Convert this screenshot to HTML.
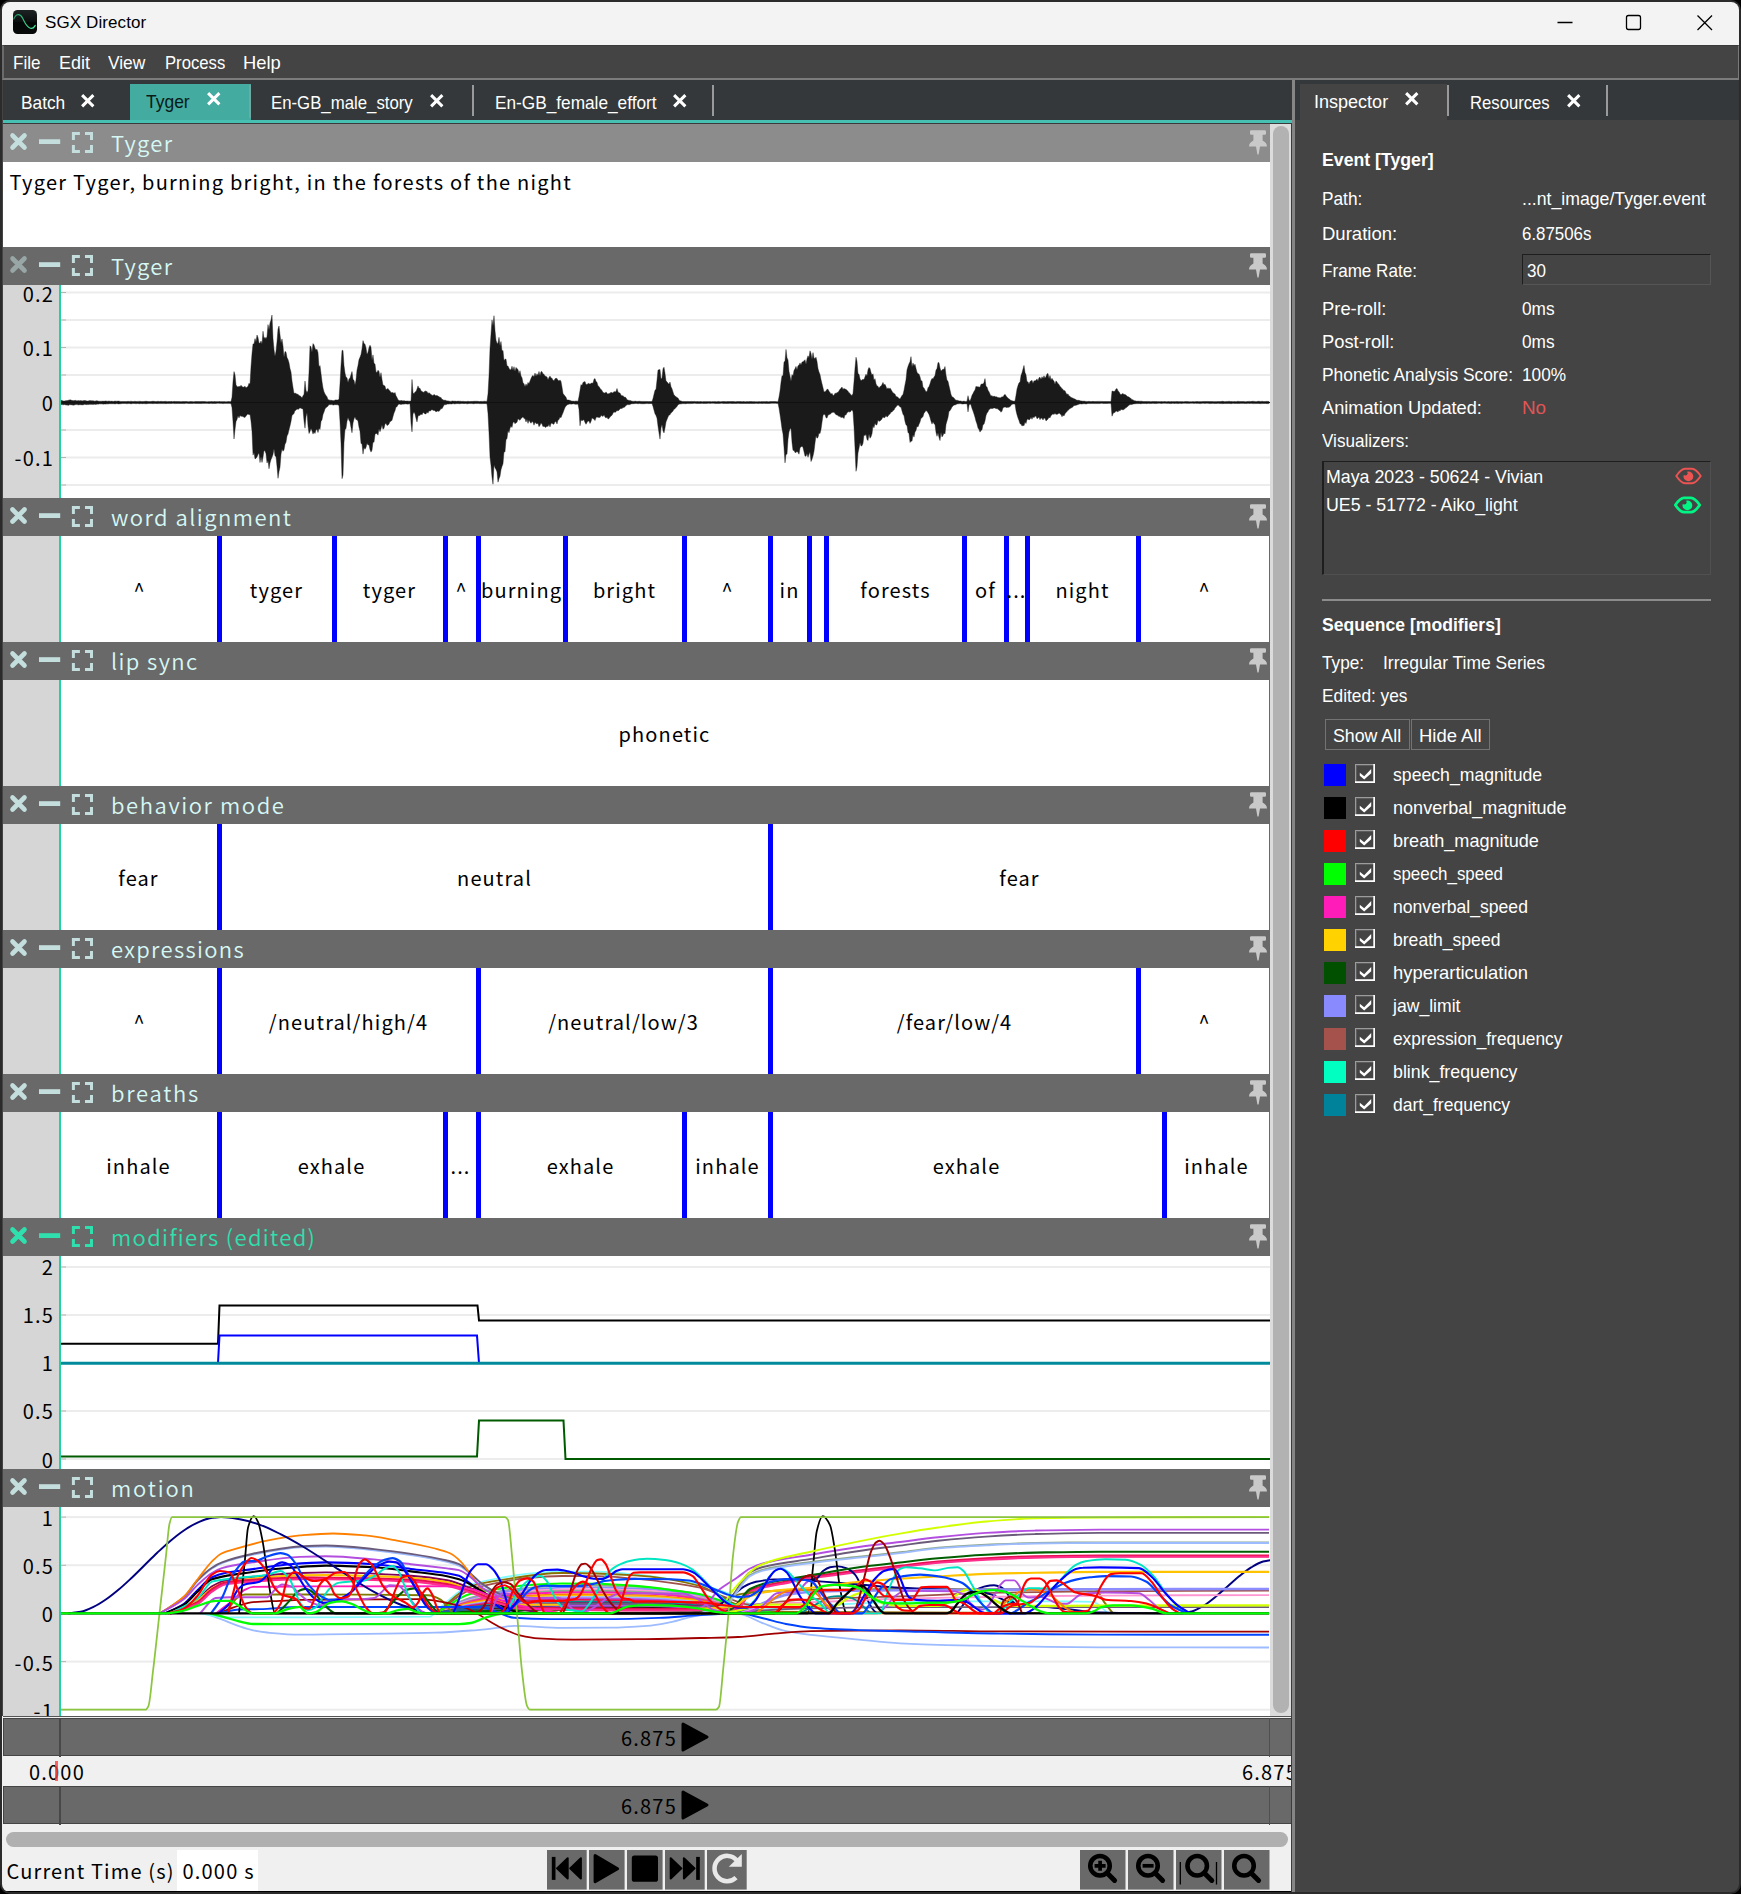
<!DOCTYPE html><html><head><meta charset="utf-8"><title>SGX Director</title><style>
*{box-sizing:border-box;margin:0;padding:0}
html,body{width:1741px;height:1894px;background:#000;overflow:hidden}
body{position:relative;font-family:"Liberation Sans", "DejaVu Sans", sans-serif;}
.abs{position:absolute}
#frame{position:absolute;left:0;top:0;width:1741px;height:1894px;background:#2b2b2b;border-radius:10px;overflow:hidden}
#win{position:absolute;left:2px;top:2px;width:1737px;height:1890px;background:#444444;border-radius:8px;overflow:hidden}
.pf{font-family:"Noto Sans CJK JP", "Noto Sans CJK SC", "DejaVu Sans", sans-serif}
.hdr{position:absolute;left:1px;width:1267px;height:38px;background:#696969;color:#c9ecea}
.hdr .t{position:absolute;left:108px;top:0;line-height:38px;font-family:"Noto Sans CJK JP", "Noto Sans CJK SC", "DejaVu Sans", sans-serif;font-size:23px;letter-spacing:1.1px;white-space:nowrap}
.cont{position:absolute;left:1px;width:1267px;background:#fff;overflow:hidden}
.marg{position:absolute;left:0;top:0;bottom:0;width:56px;background:#d6d6d6}
.gl{position:absolute;left:56px;top:0;bottom:0;width:2px;background:#1ccf9c}
.yl{position:absolute;right:1219px;font-family:"Noto Sans CJK JP", "Noto Sans CJK SC", "DejaVu Sans", sans-serif;font-size:20px;letter-spacing:1px;color:#000;line-height:20px;white-space:nowrap;text-align:right}
.seg{position:absolute;top:0;bottom:0;width:4px;background:#0000ff}
.sl{position:absolute;font-family:"Noto Sans CJK JP", "Noto Sans CJK SC", "DejaVu Sans", sans-serif;font-size:20px;letter-spacing:1.1px;color:#000;line-height:28px;white-space:nowrap;transform:translateX(-50%);top:40px}
.lab{position:absolute;color:#fff;font-size:16px;white-space:nowrap;line-height:20px;letter-spacing:0.25px}
</style></head><body>
<div id="frame"><div id="win">
<div class="abs" style="left:0;top:0;width:1737px;height:43px;background:#f3f3f3"></div>
<div class="abs" style="left:43px;top:9.3px;font-size:17px;letter-spacing:0.1px;line-height:24px;color:#000;white-space:nowrap">SGX Director</div>
<svg class="abs" style="left:11px;top:8px" width="24" height="24" viewBox="0 0 24 24"><defs><linearGradient id="ig" x1="0" y1="0" x2="0" y2="1"><stop offset="0" stop-color="#1c2222"/><stop offset="0.5" stop-color="#0c0e0e"/><stop offset="0.52" stop-color="#050606"/><stop offset="1" stop-color="#080909"/></linearGradient></defs><rect x="0" y="0" width="24" height="24" rx="4.5" fill="url(#ig)"/><linearGradient id="sg" x1="0" y1="0" x2="1" y2="0"><stop offset="0" stop-color="#238a5c"/><stop offset="0.5" stop-color="#38c886"/><stop offset="1" stop-color="#4cf5a4"/></linearGradient><path d="M0.8 9 C2.8 3.8 7 3 9.5 8 S14 17.8 17.5 18.3 S21 17.2 22.2 15.4" fill="none" stroke="url(#sg)" stroke-width="1.15" stroke-linecap="round"/></svg>
<svg class="abs" style="left:1548px;top:8px" width="180" height="26" viewBox="0 0 180 26" fill="none" stroke="#000" stroke-width="1.3"><path d="M7.5 12.5H22.5"/><rect x="76.5" y="5.5" width="14" height="14" rx="2"/><path d="M147.5 5.5L162 20M162 5.5L147.5 20"/></svg>
<div class="abs" style="left:0;top:43px;width:1737px;height:35px;background:#444;border:1px solid #7a7a7a;border-bottom:2px solid #7c7c7c;border-top:1px solid #3a3a3a;border-left:2px solid #6a6a6a"></div>
<div class="lab" style="left:11px;top:51.1px;font-size:18.5px;letter-spacing:0;transform:scaleX(0.9221);transform-origin:0 50%">File</div>
<div class="lab" style="left:56.5px;top:51.1px;font-size:18.5px;letter-spacing:0;transform:scaleX(0.9695);transform-origin:0 50%">Edit</div>
<div class="lab" style="left:105.5px;top:51.1px;font-size:18.5px;letter-spacing:0;transform:scaleX(0.938);transform-origin:0 50%">View</div>
<div class="lab" style="left:162.5px;top:51.1px;font-size:18.5px;letter-spacing:0;transform:scaleX(0.9012);transform-origin:0 50%">Process</div>
<div class="lab" style="left:240.5px;top:51.1px;font-size:18.5px;letter-spacing:0;transform:scaleX(0.993);transform-origin:0 50%">Help</div>
<div class="abs" style="left:1px;top:78px;width:1289px;height:40px;background:#34383a"></div>
<div class="abs" style="left:128px;top:82px;width:121px;height:37px;background:#43aba0"></div>
<div class="abs" style="left:1px;top:118px;width:1289px;height:3px;background:#45c0b3"></div>
<div class="lab" style="left:19px;top:90.9px;font-size:18.5px;letter-spacing:0;transform:scaleX(0.9344);transform-origin:0 50%;color:#fff">Batch</div>
<svg class="abs" style="left:79.3px;top:92.3px" width="13.5" height="13.5" viewBox="0 0 12 12"><path d="M1 1L11 11M11 1L1 11" stroke="#fff" stroke-width="2.7" fill="none"/></svg>
<div class="lab" style="left:144px;top:89.9px;font-size:18.5px;letter-spacing:0;transform:scaleX(0.9434);transform-origin:0 50%;color:#0a1a18">Tyger</div>
<svg class="abs" style="left:205.3px;top:90.3px" width="13.5" height="13.5" viewBox="0 0 12 12"><path d="M1 1L11 11M11 1L1 11" stroke="#fff" stroke-width="2.7" fill="none"/></svg>
<div class="lab" style="left:269px;top:90.9px;font-size:18.5px;letter-spacing:0;transform:scaleX(0.9069);transform-origin:0 50%;color:#fff">En-GB_male_story</div>
<svg class="abs" style="left:428.3px;top:92.3px" width="13.5" height="13.5" viewBox="0 0 12 12"><path d="M1 1L11 11M11 1L1 11" stroke="#fff" stroke-width="2.7" fill="none"/></svg>
<div class="lab" style="left:493px;top:90.9px;font-size:18.5px;letter-spacing:0;transform:scaleX(0.9315);transform-origin:0 50%;color:#fff">En-GB_female_effort</div>
<svg class="abs" style="left:671.3px;top:92.3px" width="13.5" height="13.5" viewBox="0 0 12 12"><path d="M1 1L11 11M11 1L1 11" stroke="#fff" stroke-width="2.7" fill="none"/></svg>
<div class="abs" style="left:470px;top:83px;width:2px;height:31px;background:#9a9a9a"></div>
<div class="abs" style="left:710px;top:83px;width:2px;height:31px;background:#9a9a9a"></div>
<div class="abs" style="left:247px;top:83px;width:2px;height:33px;background:#6fa9a3"></div>
<div class="abs" style="left:1290px;top:78px;width:3px;height:1812px;background:#858585"></div>
<div class="abs" style="left:1293px;top:78px;width:444px;height:40px;background:#34383a"></div>
<div class="abs" style="left:1298px;top:82px;width:147px;height:37px;background:#444"></div>
<div class="lab" style="left:1312px;top:89.9px;font-size:18.5px;letter-spacing:0;transform:scaleX(0.9742);transform-origin:0 50%">Inspector</div>
<svg class="abs" style="left:1403.3px;top:90.3px" width="13.5" height="13.5" viewBox="0 0 12 12"><path d="M1 1L11 11M11 1L1 11" stroke="#fff" stroke-width="2.7" fill="none"/></svg>
<div class="lab" style="left:1468px;top:90.9px;font-size:18.5px;letter-spacing:0;transform:scaleX(0.9005);transform-origin:0 50%">Resources</div>
<svg class="abs" style="left:1565.3px;top:92.3px" width="13.5" height="13.5" viewBox="0 0 12 12"><path d="M1 1L11 11M11 1L1 11" stroke="#fff" stroke-width="2.7" fill="none"/></svg>
<div class="abs" style="left:1445px;top:83px;width:2px;height:31px;background:#9a9a9a"></div>
<div class="abs" style="left:1604px;top:83px;width:2px;height:31px;background:#9a9a9a"></div>
<div class="lab" style="left:1320px;top:148.25px;font-size:18.5px;letter-spacing:0;transform:scaleX(0.9561);transform-origin:0 50%;font-weight:bold">Event [Tyger]</div>
<div class="lab" style="left:1320px;top:187.25px;font-size:18.5px;letter-spacing:0;transform:scaleX(0.9329);transform-origin:0 50%;">Path:</div>
<div class="lab" style="left:1520px;top:187.25px;font-size:18.5px;letter-spacing:0;transform:scaleX(0.9552);transform-origin:0 50%;">...nt_image/Tyger.event</div>
<div class="lab" style="left:1320px;top:222.25px;font-size:18.5px;letter-spacing:0;transform:scaleX(1.001);transform-origin:0 50%;">Duration:</div>
<div class="lab" style="left:1520px;top:222.25px;font-size:18.5px;letter-spacing:0;transform:scaleX(0.9121);transform-origin:0 50%;">6.87506s</div>
<div class="lab" style="left:1320px;top:259.25px;font-size:18.5px;letter-spacing:0;transform:scaleX(0.9238);transform-origin:0 50%;">Frame Rate:</div>
<div class="lab" style="left:1320px;top:297.25px;font-size:18.5px;letter-spacing:0;transform:scaleX(0.9933);transform-origin:0 50%;">Pre-roll:</div>
<div class="lab" style="left:1520px;top:297.25px;font-size:18.5px;letter-spacing:0;transform:scaleX(0.9337);transform-origin:0 50%;">0ms</div>
<div class="lab" style="left:1320px;top:330.25px;font-size:18.5px;letter-spacing:0;transform:scaleX(0.9908);transform-origin:0 50%;">Post-roll:</div>
<div class="lab" style="left:1520px;top:330.25px;font-size:18.5px;letter-spacing:0;transform:scaleX(0.9337);transform-origin:0 50%;">0ms</div>
<div class="lab" style="left:1320px;top:363.25px;font-size:18.5px;letter-spacing:0;transform:scaleX(0.9383);transform-origin:0 50%;">Phonetic Analysis Score:</div>
<div class="lab" style="left:1520px;top:363.25px;font-size:18.5px;letter-spacing:0;transform:scaleX(0.931);transform-origin:0 50%;">100%</div>
<div class="lab" style="left:1320px;top:396.25px;font-size:18.5px;letter-spacing:0;transform:scaleX(0.9842);transform-origin:0 50%;">Animation Updated:</div>
<div class="lab" style="left:1520px;top:396.25px;font-size:18.5px;letter-spacing:0;transform:scaleX(1.0197);transform-origin:0 50%;color:#e05555">No</div>
<div class="lab" style="left:1320px;top:429.25px;font-size:18.5px;letter-spacing:0;transform:scaleX(0.9236);transform-origin:0 50%;">Visualizers:</div>
<div class="abs" style="left:1520px;top:252px;width:189px;height:31px;background:#444;border:1px solid #555;border-top:1px solid #1e1e1e;border-left:1px solid #1e1e1e"></div>
<div class="lab" style="left:1525px;top:259.25px;font-size:18.5px;letter-spacing:0;transform:scaleX(0.9217);transform-origin:0 50%;">30</div>
<div class="abs" style="left:1320px;top:459px;width:389px;height:114px;background:#444;border:1px solid #505050;border-top:1px solid #1e1e1e;border-left:2px solid #1e1e1e"></div>
<div class="lab" style="left:1324px;top:465.25px;font-size:18.5px;letter-spacing:0;transform:scaleX(0.9616);transform-origin:0 50%;">Maya 2023 - 50624 - Vivian</div>
<div class="lab" style="left:1324px;top:493.25px;font-size:18.5px;letter-spacing:0;transform:scaleX(0.9604);transform-origin:0 50%;">UE5 - 51772 - Aiko_light</div>
<svg class="abs" style="left:1673.2px;top:465.0px" width="27" height="18" viewBox="0 0 27 18"><path d="M1.3 9C3 6.5 6.5 1.8 10 1.8H17C20.5 1.8 24 6.5 25.7 9C24 11.5 20.5 16.2 17 16.2H10C6.5 16.2 3 11.5 1.3 9Z" fill="none" stroke="#ec5353" stroke-width="2.0" stroke-linejoin="round"/><circle cx="13.4" cy="9.4" r="4.9" fill="#ec5353"/><circle cx="10.2" cy="6.2" r="2.4" fill="#444"/></svg>
<svg class="abs" style="left:1672.2px;top:494.0px" width="27" height="18" viewBox="0 0 27 18"><path d="M1.3 9C3 6.5 6.5 1.8 10 1.8H17C20.5 1.8 24 6.5 25.7 9C24 11.5 20.5 16.2 17 16.2H10C6.5 16.2 3 11.5 1.3 9Z" fill="none" stroke="#00f584" stroke-width="2.7" stroke-linejoin="round"/><circle cx="13.4" cy="9.4" r="4.9" fill="#00f584"/><circle cx="10.2" cy="6.2" r="2.4" fill="#444"/></svg>
<div class="abs" style="left:1320px;top:597px;width:389px;height:2px;background:#8c8c8c"></div>
<div class="lab" style="left:1320px;top:613.25px;font-size:18.5px;letter-spacing:0;transform:scaleX(0.9502);transform-origin:0 50%;font-weight:bold">Sequence [modifiers]</div>
<div class="lab" style="left:1320px;top:651.25px;font-size:18.5px;letter-spacing:0;transform:scaleX(0.9318);transform-origin:0 50%;">Type:</div>
<div class="lab" style="left:1381px;top:651.25px;font-size:18.5px;letter-spacing:0;transform:scaleX(0.9439);transform-origin:0 50%;">Irregular Time Series</div>
<div class="lab" style="left:1320px;top:684.25px;font-size:18.5px;letter-spacing:0;transform:scaleX(0.9338);transform-origin:0 50%;">Edited: yes</div>
<div class="abs" style="left:1323px;top:717px;width:85px;height:31px;border:1.5px solid #737373"></div>
<div class="abs" style="left:1409px;top:717px;width:79px;height:31px;border:1.5px solid #737373"></div>
<div class="lab" style="left:1331px;top:724.25px;font-size:18.5px;letter-spacing:0;transform:scaleX(0.9596);transform-origin:0 50%;">Show All</div>
<div class="lab" style="left:1417px;top:724.25px;font-size:18.5px;letter-spacing:0;transform:scaleX(0.9978);transform-origin:0 50%;">Hide All</div>
<div class="abs" style="left:1322px;top:762px;width:22px;height:22px;background:#0000ff"></div>
<svg class="abs" style="left:1352.9px;top:761.9px" width="20.3" height="19.3" viewBox="0 0 20.3 19.3"><rect width="20.3" height="19.3" fill="#444"/><path d="M0 0H20.3V1H1V19.3H0Z" fill="#9c9c9c"/><path d="M1 1H18.3V2H2V17.3H1Z" fill="#5c5c5c"/><path d="M0 19.3V17.3H18.3V0H20.3V19.3Z" fill="#fff"/><path d="M4.8 8.7L9.2 12.3L16.2 5.1V9.2L9.2 15.4L4.8 11.8Z" fill="#fff"/></svg>
<div class="lab" style="left:1391px;top:763.25px;font-size:18.5px;letter-spacing:0;transform:scaleX(0.9535);transform-origin:0 50%;">speech_magnitude</div>
<div class="abs" style="left:1322px;top:795px;width:22px;height:22px;background:#000000"></div>
<svg class="abs" style="left:1352.9px;top:794.9px" width="20.3" height="19.3" viewBox="0 0 20.3 19.3"><rect width="20.3" height="19.3" fill="#444"/><path d="M0 0H20.3V1H1V19.3H0Z" fill="#9c9c9c"/><path d="M1 1H18.3V2H2V17.3H1Z" fill="#5c5c5c"/><path d="M0 19.3V17.3H18.3V0H20.3V19.3Z" fill="#fff"/><path d="M4.8 8.7L9.2 12.3L16.2 5.1V9.2L9.2 15.4L4.8 11.8Z" fill="#fff"/></svg>
<div class="lab" style="left:1391px;top:796.25px;font-size:18.5px;letter-spacing:0;transform:scaleX(0.976);transform-origin:0 50%;">nonverbal_magnitude</div>
<div class="abs" style="left:1322px;top:828px;width:22px;height:22px;background:#ff0000"></div>
<svg class="abs" style="left:1352.9px;top:827.9px" width="20.3" height="19.3" viewBox="0 0 20.3 19.3"><rect width="20.3" height="19.3" fill="#444"/><path d="M0 0H20.3V1H1V19.3H0Z" fill="#9c9c9c"/><path d="M1 1H18.3V2H2V17.3H1Z" fill="#5c5c5c"/><path d="M0 19.3V17.3H18.3V0H20.3V19.3Z" fill="#fff"/><path d="M4.8 8.7L9.2 12.3L16.2 5.1V9.2L9.2 15.4L4.8 11.8Z" fill="#fff"/></svg>
<div class="lab" style="left:1391px;top:829.25px;font-size:18.5px;letter-spacing:0;transform:scaleX(0.978);transform-origin:0 50%;">breath_magnitude</div>
<div class="abs" style="left:1322px;top:861px;width:22px;height:22px;background:#00ff00"></div>
<svg class="abs" style="left:1352.9px;top:860.9px" width="20.3" height="19.3" viewBox="0 0 20.3 19.3"><rect width="20.3" height="19.3" fill="#444"/><path d="M0 0H20.3V1H1V19.3H0Z" fill="#9c9c9c"/><path d="M1 1H18.3V2H2V17.3H1Z" fill="#5c5c5c"/><path d="M0 19.3V17.3H18.3V0H20.3V19.3Z" fill="#fff"/><path d="M4.8 8.7L9.2 12.3L16.2 5.1V9.2L9.2 15.4L4.8 11.8Z" fill="#fff"/></svg>
<div class="lab" style="left:1391px;top:862.25px;font-size:18.5px;letter-spacing:0;transform:scaleX(0.9137);transform-origin:0 50%;">speech_speed</div>
<div class="abs" style="left:1322px;top:894px;width:22px;height:22px;background:#ff1cb8"></div>
<svg class="abs" style="left:1352.9px;top:893.9px" width="20.3" height="19.3" viewBox="0 0 20.3 19.3"><rect width="20.3" height="19.3" fill="#444"/><path d="M0 0H20.3V1H1V19.3H0Z" fill="#9c9c9c"/><path d="M1 1H18.3V2H2V17.3H1Z" fill="#5c5c5c"/><path d="M0 19.3V17.3H18.3V0H20.3V19.3Z" fill="#fff"/><path d="M4.8 8.7L9.2 12.3L16.2 5.1V9.2L9.2 15.4L4.8 11.8Z" fill="#fff"/></svg>
<div class="lab" style="left:1391px;top:895.25px;font-size:18.5px;letter-spacing:0;transform:scaleX(0.9505);transform-origin:0 50%;">nonverbal_speed</div>
<div class="abs" style="left:1322px;top:927px;width:22px;height:22px;background:#ffd200"></div>
<svg class="abs" style="left:1352.9px;top:926.9px" width="20.3" height="19.3" viewBox="0 0 20.3 19.3"><rect width="20.3" height="19.3" fill="#444"/><path d="M0 0H20.3V1H1V19.3H0Z" fill="#9c9c9c"/><path d="M1 1H18.3V2H2V17.3H1Z" fill="#5c5c5c"/><path d="M0 19.3V17.3H18.3V0H20.3V19.3Z" fill="#fff"/><path d="M4.8 8.7L9.2 12.3L16.2 5.1V9.2L9.2 15.4L4.8 11.8Z" fill="#fff"/></svg>
<div class="lab" style="left:1391px;top:928.25px;font-size:18.5px;letter-spacing:0;transform:scaleX(0.9494);transform-origin:0 50%;">breath_speed</div>
<div class="abs" style="left:1322px;top:960px;width:22px;height:22px;background:#005000"></div>
<svg class="abs" style="left:1352.9px;top:959.9px" width="20.3" height="19.3" viewBox="0 0 20.3 19.3"><rect width="20.3" height="19.3" fill="#444"/><path d="M0 0H20.3V1H1V19.3H0Z" fill="#9c9c9c"/><path d="M1 1H18.3V2H2V17.3H1Z" fill="#5c5c5c"/><path d="M0 19.3V17.3H18.3V0H20.3V19.3Z" fill="#fff"/><path d="M4.8 8.7L9.2 12.3L16.2 5.1V9.2L9.2 15.4L4.8 11.8Z" fill="#fff"/></svg>
<div class="lab" style="left:1391px;top:961.25px;font-size:18.5px;letter-spacing:0;transform:scaleX(0.9944);transform-origin:0 50%;">hyperarticulation</div>
<div class="abs" style="left:1322px;top:993px;width:22px;height:22px;background:#8a8aff"></div>
<svg class="abs" style="left:1352.9px;top:992.9px" width="20.3" height="19.3" viewBox="0 0 20.3 19.3"><rect width="20.3" height="19.3" fill="#444"/><path d="M0 0H20.3V1H1V19.3H0Z" fill="#9c9c9c"/><path d="M1 1H18.3V2H2V17.3H1Z" fill="#5c5c5c"/><path d="M0 19.3V17.3H18.3V0H20.3V19.3Z" fill="#fff"/><path d="M4.8 8.7L9.2 12.3L16.2 5.1V9.2L9.2 15.4L4.8 11.8Z" fill="#fff"/></svg>
<div class="lab" style="left:1391px;top:994.25px;font-size:18.5px;letter-spacing:0;transform:scaleX(0.9514);transform-origin:0 50%;">jaw_limit</div>
<div class="abs" style="left:1322px;top:1026px;width:22px;height:22px;background:#a5524c"></div>
<svg class="abs" style="left:1352.9px;top:1025.9px" width="20.3" height="19.3" viewBox="0 0 20.3 19.3"><rect width="20.3" height="19.3" fill="#444"/><path d="M0 0H20.3V1H1V19.3H0Z" fill="#9c9c9c"/><path d="M1 1H18.3V2H2V17.3H1Z" fill="#5c5c5c"/><path d="M0 19.3V17.3H18.3V0H20.3V19.3Z" fill="#fff"/><path d="M4.8 8.7L9.2 12.3L16.2 5.1V9.2L9.2 15.4L4.8 11.8Z" fill="#fff"/></svg>
<div class="lab" style="left:1391px;top:1027.25px;font-size:18.5px;letter-spacing:0;transform:scaleX(0.9354);transform-origin:0 50%;">expression_frequency</div>
<div class="abs" style="left:1322px;top:1059px;width:22px;height:22px;background:#00ffc0"></div>
<svg class="abs" style="left:1352.9px;top:1058.9px" width="20.3" height="19.3" viewBox="0 0 20.3 19.3"><rect width="20.3" height="19.3" fill="#444"/><path d="M0 0H20.3V1H1V19.3H0Z" fill="#9c9c9c"/><path d="M1 1H18.3V2H2V17.3H1Z" fill="#5c5c5c"/><path d="M0 19.3V17.3H18.3V0H20.3V19.3Z" fill="#fff"/><path d="M4.8 8.7L9.2 12.3L16.2 5.1V9.2L9.2 15.4L4.8 11.8Z" fill="#fff"/></svg>
<div class="lab" style="left:1391px;top:1060.25px;font-size:18.5px;letter-spacing:0;transform:scaleX(0.9603);transform-origin:0 50%;">blink_frequency</div>
<div class="abs" style="left:1322px;top:1092px;width:22px;height:22px;background:#00829a"></div>
<svg class="abs" style="left:1352.9px;top:1091.9px" width="20.3" height="19.3" viewBox="0 0 20.3 19.3"><rect width="20.3" height="19.3" fill="#444"/><path d="M0 0H20.3V1H1V19.3H0Z" fill="#9c9c9c"/><path d="M1 1H18.3V2H2V17.3H1Z" fill="#5c5c5c"/><path d="M0 19.3V17.3H18.3V0H20.3V19.3Z" fill="#fff"/><path d="M4.8 8.7L9.2 12.3L16.2 5.1V9.2L9.2 15.4L4.8 11.8Z" fill="#fff"/></svg>
<div class="lab" style="left:1391px;top:1093.25px;font-size:18.5px;letter-spacing:0;transform:scaleX(0.948);transform-origin:0 50%;">dart_frequency</div>
<div class="abs" style="left:1px;top:122px;width:1289px;height:1594px;background:#f0f0f0"></div>
<div class="abs" style="left:1268px;top:122px;width:21px;height:1592px;background:#dcdcdc"></div>
<div class="abs" style="left:1271px;top:124px;width:16px;height:1587px;background:#b2b2b2;border-radius:8px"></div>
<div class="abs" style="left:1px;top:122px;width:1267px;height:38px;background:#8c8c8c"></div>
<svg class="abs" style="left:1px;top:122px" width="100" height="38" viewBox="0 0 100 38" fill="none" stroke-linecap="round"><path d="M9.5 11.5L21.5 23.5M21.5 11.5L9.5 23.5" stroke="#c3dedd" stroke-width="4.6"/><path d="M36 17.6H57.2" stroke="#c3dedd" stroke-width="4.8" stroke-linecap="butt"/><path d="M70.4 16V9.5H76.9M82 9.5H88.5V16M88.5 21V27.5H82M76.9 27.5H70.4V21" stroke="#c3dedd" stroke-width="3" stroke-linecap="butt"/></svg>
<div class="abs pf" style="left:109px;top:122px;height:38px;line-height:37px;font-size:22px;font-weight:350;letter-spacing:1.295px;color:#d6f8f5;white-space:nowrap">Tyger</div>
<svg class="abs" style="left:1245px;top:128px" width="22" height="26" viewBox="0 0 22 26"><path d="M4.2 0.3H17.8Q19 0.3 19 1.5V3.6Q19 4.8 17.8 4.8H15.6V10.4C18.2 11.8 20 13.6 20 16.5H13L11.6 24.5H10.4L9 16.5H2C2 13.6 3.8 11.8 6.4 10.4V4.8H4.2Q3 4.8 3 3.6V1.5Q3 0.3 4.2 0.3Z" fill="#c9c9c9"/></svg>
<div class="abs" style="left:1px;top:160px;width:1267px;height:85px;background:#fff"></div>
<div class="abs pf" style="left:7.6px;top:166px;font-size:20px;letter-spacing:1.25px;line-height:28px;color:#000;white-space:nowrap">Tyger Tyger, burning bright, in the forests of the night</div>
<div class="abs" style="left:1px;top:245px;width:1267px;height:38px;background:#696969"></div>
<svg class="abs" style="left:1px;top:245px" width="100" height="38" viewBox="0 0 100 38" fill="none" stroke-linecap="round"><path d="M9.5 11.5L21.5 23.5M21.5 11.5L9.5 23.5" stroke="#98a6a6" stroke-width="4.6"/><path d="M36 17.6H57.2" stroke="#c3dedd" stroke-width="4.8" stroke-linecap="butt"/><path d="M70.4 16V9.5H76.9M82 9.5H88.5V16M88.5 21V27.5H82M76.9 27.5H70.4V21" stroke="#c3dedd" stroke-width="3" stroke-linecap="butt"/></svg>
<div class="abs pf" style="left:109px;top:245px;height:38px;line-height:37px;font-size:22px;font-weight:350;letter-spacing:1.295px;color:#d6f8f5;white-space:nowrap">Tyger</div>
<svg class="abs" style="left:1245px;top:251px" width="22" height="26" viewBox="0 0 22 26"><path d="M4.2 0.3H17.8Q19 0.3 19 1.5V3.6Q19 4.8 17.8 4.8H15.6V10.4C18.2 11.8 20 13.6 20 16.5H13L11.6 24.5H10.4L9 16.5H2C2 13.6 3.8 11.8 6.4 10.4V4.8H4.2Q3 4.8 3 3.6V1.5Q3 0.3 4.2 0.3Z" fill="#c9c9c9"/></svg>
<div class="abs" style="left:1px;top:283px;width:1267px;height:213px;background:#fff"></div>
<div class="abs" style="left:1px;top:283px;width:56px;height:213px;background:#d6d6d6"></div>
<div class="abs" style="left:57.2px;top:283px;width:1.7px;height:213px;background:#20d2a0"></div>
<svg class="abs" style="left:59px;top:283px" width="1209" height="213" viewBox="0 0 1209 213"><rect x="0" y="199.0" width="1209" height="2" fill="#ececec"/><rect x="0" y="199.5" width="5" height="1" fill="#b4b4b4"/><rect x="0" y="171.5" width="1209" height="2" fill="#ececec"/><rect x="0" y="172.0" width="5" height="1" fill="#b4b4b4"/><rect x="0" y="144.0" width="1209" height="2" fill="#ececec"/><rect x="0" y="144.5" width="5" height="1" fill="#b4b4b4"/><rect x="0" y="116.5" width="1209" height="2" fill="#ececec"/><rect x="0" y="117.0" width="5" height="1" fill="#b4b4b4"/><rect x="0" y="89.0" width="1209" height="2" fill="#ececec"/><rect x="0" y="89.5" width="5" height="1" fill="#b4b4b4"/><rect x="0" y="61.5" width="1209" height="2" fill="#ececec"/><rect x="0" y="62.0" width="5" height="1" fill="#b4b4b4"/><rect x="0" y="34.0" width="1209" height="2" fill="#ececec"/><rect x="0" y="34.5" width="5" height="1" fill="#b4b4b4"/><rect x="0" y="6.5" width="1209" height="2" fill="#ececec"/><rect x="0" y="7.0" width="5" height="1" fill="#b4b4b4"/><path d="M-1.0 115.4L0.0 115.2L1.0 115.4L2.0 115.9L3.0 116.0L4.0 115.9L5.0 115.6L6.0 115.7L7.0 115.3L8.0 115.2L9.0 114.8L10.0 115.0L11.0 115.6L12.0 115.5L13.0 115.7L14.0 115.3L15.0 115.4L16.0 115.9L17.0 115.4L18.0 115.7L19.0 115.7L20.0 115.4L21.0 115.9L22.0 115.7L23.0 115.6L24.0 115.4L25.0 115.8L26.0 116.0L27.0 116.1L28.0 115.7L29.0 115.6L30.0 115.7L31.0 115.8L32.0 115.7L33.0 115.9L34.0 116.2L35.0 115.8L36.0 115.8L37.0 116.0L38.0 116.3L39.0 116.2L40.0 116.3L41.0 116.2L42.0 116.1L43.0 116.3L44.0 116.0L45.0 115.9L46.0 116.2L47.0 116.2L48.0 115.9L49.0 116.3L50.0 116.3L51.0 116.1L52.0 116.5L53.0 116.3L54.0 116.0L55.0 116.2L56.0 116.2L57.0 116.1L58.0 116.1L59.0 116.4L60.0 116.5L61.0 116.5L62.0 116.5L63.0 116.4L64.0 116.6L65.0 116.5L66.0 116.6L67.0 116.3L68.0 116.5L69.0 116.4L70.0 116.2L71.0 116.4L72.0 116.6L73.0 116.4L74.0 116.2L75.0 116.6L76.0 116.4L77.0 116.4L78.0 116.4L79.0 116.2L80.0 116.5L81.0 116.6L82.0 116.4L83.0 116.5L84.0 116.3L85.0 116.3L86.0 116.3L87.0 116.6L88.0 116.5L89.0 116.6L90.0 116.6L91.0 116.3L92.0 116.3L93.0 116.3L94.0 116.6L95.0 116.6L96.0 116.4L97.0 116.3L98.0 116.4L99.0 116.6L100.0 116.3L101.0 116.4L102.0 116.6L103.0 116.6L104.0 116.3L105.0 116.5L106.0 116.4L107.0 116.7L108.0 116.3L109.0 116.7L110.0 116.3L111.0 116.6L112.0 116.7L113.0 116.3L114.0 116.5L115.0 116.6L116.0 116.4L117.0 116.6L118.0 116.6L119.0 116.6L120.0 116.7L121.0 116.6L122.0 116.5L123.0 116.6L124.0 116.6L125.0 116.5L126.0 116.6L127.0 116.7L128.0 116.7L129.0 116.5L130.0 116.6L131.0 116.6L132.0 116.7L133.0 116.7L134.0 116.5L135.0 116.6L136.0 116.4L137.0 116.6L138.0 116.6L139.0 116.6L140.0 116.6L141.0 116.5L142.0 116.4L143.0 116.6L144.0 116.5L145.0 116.7L146.0 116.8L147.0 116.8L148.0 116.5L149.0 116.7L150.0 116.5L151.0 116.5L152.0 116.7L153.0 116.6L154.0 116.4L155.0 116.7L156.0 116.6L157.0 116.7L158.0 116.5L159.0 116.6L160.0 116.8L161.0 116.6L162.0 116.8L163.0 116.5L164.0 116.7L165.0 116.8L166.0 116.7L167.0 116.6L168.0 116.5L169.0 116.7L170.0 116.6L171.0 112.2L172.0 96.6L173.0 86.6L174.0 89.8L175.0 99.8L176.0 101.6L177.0 102.0L178.0 101.2L179.0 101.7L180.0 100.3L181.0 101.4L182.0 102.3L183.0 102.0L184.0 101.2L185.0 102.8L186.0 102.2L187.0 101.3L188.0 98.2L189.0 99.3L190.0 81.7L191.0 68.6L192.0 58.9L193.0 59.0L194.0 53.6L195.0 57.1L196.0 50.0L197.0 52.4L198.0 58.1L199.0 58.3L200.0 56.0L201.0 59.0L202.0 46.2L203.0 53.6L204.0 52.2L205.0 53.7L206.0 51.5L207.0 39.6L208.0 45.1L209.0 37.9L210.0 35.0L211.0 30.0L212.0 53.6L213.0 64.5L214.0 71.3L215.0 66.2L216.0 56.7L217.0 44.1L218.0 41.0L219.0 49.8L220.0 58.1L221.0 53.9L222.0 61.0L223.0 72.3L224.0 66.4L225.0 67.1L226.0 72.6L227.0 74.4L228.0 77.8L229.0 83.6L230.0 87.0L231.0 96.1L232.0 102.5L233.0 108.6L234.0 108.1L235.0 108.4L236.0 109.2L237.0 109.2L238.0 110.4L239.0 110.9L240.0 111.6L241.0 113.1L242.0 110.8L243.0 109.3L244.0 96.0L245.0 105.2L246.0 107.8L247.0 105.4L248.0 87.3L249.0 60.8L250.0 61.9L251.0 67.3L252.0 58.6L253.0 59.9L254.0 63.2L255.0 65.1L256.0 64.3L257.0 67.7L258.0 82.0L259.0 80.5L260.0 88.5L261.0 96.5L262.0 102.9L263.0 106.7L264.0 108.9L265.0 110.5L266.0 111.8L267.0 114.8L268.0 114.7L269.0 115.4L270.0 115.1L271.0 115.6L272.0 115.4L273.0 115.7L274.0 114.9L275.0 114.9L276.0 114.9L277.0 115.0L278.0 113.9L279.0 98.6L280.0 80.4L281.0 65.4L282.0 65.4L283.0 80.6L284.0 88.1L285.0 92.2L286.0 92.7L287.0 97.4L288.0 93.9L289.0 92.9L290.0 89.7L291.0 86.5L292.0 94.5L293.0 95.3L294.0 100.0L295.0 95.1L296.0 85.0L297.0 80.4L298.0 74.6L299.0 72.3L300.0 69.5L301.0 63.7L302.0 55.6L303.0 58.5L304.0 59.2L305.0 62.8L306.0 69.6L307.0 67.2L308.0 62.5L309.0 60.2L310.0 62.3L311.0 75.2L312.0 69.9L313.0 78.4L314.0 78.9L315.0 86.9L316.0 87.4L317.0 85.2L318.0 86.4L319.0 92.4L320.0 87.7L321.0 94.6L322.0 100.3L323.0 100.2L324.0 101.3L325.0 104.7L326.0 104.1L327.0 103.5L328.0 104.9L329.0 105.9L330.0 107.6L331.0 107.7L332.0 107.4L333.0 108.5L334.0 107.4L335.0 110.8L336.0 112.6L337.0 114.8L338.0 115.5L339.0 115.8L340.0 115.4L341.0 115.6L342.0 116.0L343.0 115.6L344.0 116.1L345.0 116.0L346.0 116.0L347.0 115.9L348.0 116.2L349.0 116.1L350.0 115.9L351.0 94.5L352.0 107.7L353.0 108.8L354.0 107.0L355.0 106.5L356.0 104.0L357.0 100.9L358.0 103.3L359.0 103.3L360.0 105.8L361.0 106.5L362.0 107.0L363.0 107.5L364.0 105.8L365.0 106.5L366.0 106.4L367.0 108.4L368.0 107.7L369.0 108.4L370.0 109.4L371.0 110.3L372.0 110.4L373.0 109.6L374.0 109.9L375.0 110.9L376.0 110.2L377.0 111.3L378.0 111.6L379.0 112.5L380.0 112.4L381.0 114.6L382.0 114.5L383.0 115.5L384.0 115.0L385.0 115.5L386.0 116.1L387.0 115.8L388.0 116.2L389.0 116.2L390.0 116.4L391.0 115.9L392.0 115.9L393.0 116.3L394.0 116.0L395.0 116.3L396.0 116.3L397.0 116.1L398.0 116.2L399.0 116.2L400.0 116.3L401.0 116.5L402.0 116.2L403.0 116.5L404.0 116.5L405.0 116.6L406.0 116.5L407.0 116.2L408.0 116.5L409.0 116.6L410.0 116.3L411.0 116.5L412.0 116.3L413.0 116.3L414.0 116.3L415.0 116.2L416.0 116.3L417.0 116.3L418.0 116.5L419.0 116.5L420.0 116.3L421.0 116.4L422.0 116.4L423.0 116.2L424.0 116.2L425.0 116.4L426.0 116.2L427.0 108.7L428.0 90.7L429.0 63.4L430.0 48.9L431.0 34.9L432.0 41.0L433.0 30.7L434.0 45.6L435.0 55.2L436.0 58.2L437.0 58.4L438.0 52.3L439.0 60.9L440.0 56.5L441.0 66.0L442.0 65.4L443.0 75.5L444.0 74.2L445.0 74.1L446.0 80.9L447.0 81.1L448.0 83.3L449.0 84.7L450.0 84.7L451.0 81.2L452.0 85.3L453.0 81.7L454.0 86.5L455.0 82.4L456.0 83.7L457.0 84.4L458.0 88.7L459.0 85.7L460.0 90.9L461.0 92.8L462.0 97.7L463.0 98.8L464.0 101.8L465.0 98.9L466.0 101.1L467.0 97.4L468.0 98.7L469.0 96.1L470.0 93.5L471.0 91.3L472.0 90.4L473.0 91.7L474.0 88.1L475.0 91.2L476.0 88.7L477.0 90.6L478.0 86.4L479.0 90.8L480.0 86.6L481.0 86.7L482.0 88.9L483.0 89.3L484.0 91.1L485.0 91.5L486.0 91.9L487.0 94.8L488.0 92.4L489.0 91.1L490.0 93.0L491.0 93.2L492.0 95.3L493.0 95.7L494.0 93.7L495.0 93.3L496.0 93.5L497.0 95.3L498.0 96.0L499.0 94.9L500.0 96.4L501.0 102.1L502.0 108.4L503.0 109.7L504.0 111.1L505.0 112.3L506.0 115.0L507.0 115.0L508.0 115.1L509.0 115.4L510.0 115.8L511.0 116.2L512.0 116.0L513.0 116.3L514.0 116.2L515.0 115.9L516.0 116.2L517.0 116.2L518.0 111.5L519.0 105.5L520.0 99.6L521.0 100.6L522.0 97.4L523.0 97.0L524.0 96.5L525.0 99.5L526.0 99.4L527.0 98.4L528.0 98.4L529.0 99.3L530.0 98.2L531.0 98.1L532.0 98.2L533.0 94.2L534.0 93.6L535.0 96.6L536.0 97.3L537.0 101.0L538.0 101.5L539.0 103.3L540.0 104.5L541.0 105.4L542.0 107.6L543.0 107.7L544.0 108.3L545.0 106.9L546.0 108.2L547.0 109.2L548.0 108.3L549.0 108.4L550.0 107.1L551.0 108.0L552.0 107.8L553.0 106.5L554.0 106.9L555.0 106.6L556.0 103.5L557.0 107.0L558.0 107.7L559.0 108.1L560.0 110.0L561.0 111.1L562.0 110.6L563.0 112.3L564.0 112.0L565.0 112.7L566.0 114.8L567.0 115.1L568.0 115.4L569.0 115.4L570.0 115.8L571.0 116.3L572.0 116.2L573.0 116.4L574.0 116.1L575.0 116.2L576.0 116.5L577.0 116.3L578.0 116.3L579.0 116.2L580.0 116.5L581.0 116.4L582.0 116.4L583.0 116.5L584.0 116.4L585.0 116.5L586.0 116.4L587.0 116.6L588.0 116.6L589.0 116.6L590.0 116.6L591.0 116.5L592.0 113.6L593.0 109.3L594.0 105.2L595.0 104.3L596.0 95.1L597.0 85.0L598.0 84.8L599.0 84.4L600.0 93.9L601.0 93.1L602.0 83.8L603.0 82.2L604.0 88.3L605.0 96.1L606.0 96.8L607.0 98.3L608.0 99.2L609.0 97.0L610.0 101.7L611.0 103.8L612.0 106.9L613.0 110.1L614.0 110.8L615.0 111.8L616.0 112.6L617.0 113.1L618.0 114.7L619.0 116.0L620.0 115.8L621.0 116.6L622.0 116.4L623.0 116.5L624.0 116.5L625.0 116.5L626.0 116.5L627.0 116.4L628.0 116.6L629.0 116.6L630.0 116.4L631.0 116.4L632.0 116.6L633.0 116.4L634.0 116.4L635.0 116.7L636.0 116.4L637.0 116.6L638.0 116.7L639.0 116.6L640.0 116.5L641.0 116.7L642.0 116.7L643.0 116.5L644.0 116.7L645.0 116.5L646.0 116.7L647.0 116.5L648.0 116.7L649.0 116.5L650.0 116.7L651.0 116.7L652.0 116.6L653.0 116.7L654.0 116.4L655.0 116.7L656.0 116.7L657.0 116.4L658.0 116.5L659.0 116.7L660.0 116.7L661.0 116.6L662.0 116.6L663.0 116.5L664.0 116.6L665.0 116.7L666.0 116.6L667.0 116.5L668.0 116.6L669.0 116.6L670.0 116.5L671.0 116.5L672.0 116.5L673.0 116.5L674.0 116.7L675.0 116.7L676.0 116.5L677.0 116.6L678.0 116.6L679.0 116.6L680.0 116.5L681.0 116.7L682.0 116.5L683.0 116.6L684.0 116.8L685.0 116.7L686.0 116.4L687.0 116.7L688.0 116.6L689.0 116.6L690.0 116.5L691.0 116.6L692.0 116.7L693.0 116.6L694.0 116.7L695.0 116.7L696.0 116.7L697.0 116.8L698.0 116.6L699.0 116.7L700.0 116.7L701.0 116.4L702.0 116.7L703.0 116.6L704.0 116.7L705.0 116.5L706.0 116.6L707.0 116.7L708.0 116.7L709.0 116.5L710.0 116.6L711.0 116.6L712.0 116.5L713.0 116.5L714.0 116.6L715.0 116.6L716.0 116.8L717.0 116.7L718.0 112.1L719.0 106.0L720.0 97.2L721.0 90.7L722.0 91.1L723.0 76.9L724.0 76.2L725.0 64.4L726.0 72.8L727.0 75.0L728.0 86.3L729.0 91.1L730.0 96.3L731.0 89.6L732.0 91.0L733.0 85.4L734.0 83.7L735.0 81.4L736.0 84.7L737.0 80.7L738.0 80.2L739.0 77.9L740.0 80.1L741.0 77.1L742.0 76.7L743.0 75.9L744.0 74.7L745.0 79.2L746.0 73.8L747.0 70.8L748.0 72.8L749.0 65.8L750.0 68.4L751.0 74.2L752.0 67.6L753.0 73.3L754.0 73.4L755.0 72.2L756.0 76.5L757.0 83.6L758.0 87.1L759.0 89.5L760.0 94.6L761.0 98.8L762.0 102.8L763.0 107.0L764.0 106.7L765.0 105.7L766.0 104.3L767.0 104.3L768.0 106.3L769.0 107.4L770.0 109.3L771.0 108.3L772.0 110.5L773.0 110.3L774.0 108.2L775.0 108.4L776.0 107.4L777.0 107.5L778.0 105.8L779.0 104.3L780.0 103.3L781.0 102.0L782.0 104.5L783.0 103.3L784.0 104.3L785.0 104.2L786.0 105.3L787.0 106.3L788.0 107.7L789.0 108.4L790.0 110.0L791.0 110.5L792.0 108.4L793.0 96.6L794.0 83.1L795.0 72.2L796.0 76.3L797.0 88.7L798.0 89.2L799.0 93.8L800.0 95.8L801.0 94.7L802.0 94.4L803.0 94.6L804.0 91.8L805.0 89.2L806.0 91.1L807.0 84.7L808.0 82.5L809.0 83.6L810.0 87.5L811.0 90.2L812.0 88.8L813.0 95.4L814.0 93.7L815.0 98.8L816.0 100.9L817.0 101.3L818.0 103.3L819.0 101.6L820.0 101.3L821.0 99.5L822.0 97.4L823.0 99.9L824.0 99.2L825.0 101.6L826.0 104.3L827.0 102.7L828.0 104.3L829.0 102.9L830.0 104.5L831.0 106.3L832.0 107.7L833.0 108.5L834.0 109.1L835.0 111.4L836.0 111.7L837.0 112.3L838.0 113.6L839.0 114.1L840.0 112.2L841.0 110.5L842.0 109.4L843.0 105.2L844.0 99.7L845.0 94.7L846.0 84.8L847.0 81.4L848.0 78.7L849.0 76.8L850.0 71.6L851.0 82.0L852.0 78.1L853.0 80.7L854.0 79.2L855.0 83.5L856.0 87.2L857.0 88.8L858.0 89.1L859.0 91.7L860.0 95.9L861.0 95.8L862.0 102.3L863.0 102.9L864.0 105.0L865.0 106.7L866.0 106.6L867.0 102.7L868.0 101.6L869.0 98.8L870.0 95.4L871.0 93.4L872.0 93.9L873.0 92.0L874.0 90.6L875.0 85.1L876.0 83.6L877.0 77.5L878.0 77.7L879.0 82.9L880.0 86.1L881.0 85.2L882.0 84.0L883.0 84.6L884.0 81.5L885.0 90.0L886.0 95.3L887.0 96.2L888.0 100.7L889.0 105.0L890.0 109.4L891.0 111.8L892.0 112.3L893.0 112.9L894.0 114.4L895.0 115.2L896.0 115.3L897.0 115.4L898.0 115.9L899.0 115.9L900.0 115.9L901.0 116.4L902.0 116.3L903.0 116.0L904.0 116.4L905.0 116.5L906.0 116.2L907.0 110.7L908.0 115.0L909.0 115.9L910.0 113.4L911.0 110.3L912.0 108.5L913.0 106.4L914.0 104.9L915.0 101.2L916.0 102.1L917.0 101.6L918.0 102.3L919.0 102.1L920.0 99.2L921.0 99.0L922.0 99.0L923.0 97.6L924.0 93.6L925.0 101.5L926.0 101.9L927.0 105.2L928.0 106.7L929.0 109.1L930.0 111.2L931.0 110.5L932.0 111.7L933.0 111.1L934.0 111.5L935.0 112.1L936.0 111.7L937.0 112.8L938.0 112.5L939.0 112.9L940.0 112.5L941.0 111.7L942.0 112.0L943.0 110.3L944.0 109.3L945.0 110.7L946.0 112.2L947.0 113.1L948.0 114.0L949.0 114.5L950.0 115.5L951.0 115.7L952.0 116.1L953.0 116.3L954.0 116.0L955.0 110.3L956.0 103.9L957.0 100.6L958.0 97.8L959.0 97.2L960.0 90.6L961.0 87.7L962.0 84.0L963.0 80.4L964.0 87.5L965.0 89.8L966.0 97.1L967.0 96.7L968.0 99.2L969.0 96.6L970.0 96.0L971.0 95.3L972.0 98.5L973.0 95.7L974.0 96.1L975.0 95.2L976.0 93.9L977.0 95.9L978.0 92.7L979.0 92.3L980.0 94.6L981.0 91.7L982.0 93.6L983.0 90.8L984.0 93.3L985.0 91.5L986.0 88.9L987.0 88.4L988.0 93.7L989.0 90.5L990.0 94.9L991.0 93.3L992.0 94.9L993.0 96.3L994.0 99.2L995.0 95.9L996.0 97.1L997.0 98.7L998.0 99.4L999.0 101.4L1000.0 102.2L1001.0 103.7L1002.0 104.4L1003.0 105.7L1004.0 105.7L1005.0 108.1L1006.0 109.4L1007.0 108.9L1008.0 111.0L1009.0 111.3L1010.0 112.4L1011.0 112.8L1012.0 113.2L1013.0 113.7L1014.0 114.1L1015.0 114.7L1016.0 115.3L1017.0 115.3L1018.0 115.3L1019.0 115.7L1020.0 115.9L1021.0 115.9L1022.0 116.3L1023.0 116.0L1024.0 116.3L1025.0 116.4L1026.0 116.4L1027.0 116.5L1028.0 116.2L1029.0 116.6L1030.0 116.5L1031.0 116.6L1032.0 116.3L1033.0 116.6L1034.0 116.6L1035.0 116.5L1036.0 116.4L1037.0 116.4L1038.0 116.4L1039.0 116.4L1040.0 116.4L1041.0 116.4L1042.0 116.5L1043.0 116.6L1044.0 116.5L1045.0 116.5L1046.0 116.5L1047.0 116.6L1048.0 116.5L1049.0 116.6L1050.0 116.6L1051.0 106.0L1052.0 106.3L1053.0 106.6L1054.0 106.0L1055.0 104.0L1056.0 103.6L1057.0 105.9L1058.0 106.7L1059.0 108.8L1060.0 109.8L1061.0 108.9L1062.0 108.4L1063.0 109.4L1064.0 109.6L1065.0 110.0L1066.0 111.2L1067.0 111.8L1068.0 111.9L1069.0 113.1L1070.0 113.4L1071.0 114.7L1072.0 114.8L1073.0 115.7L1074.0 115.7L1075.0 116.1L1076.0 116.3L1077.0 116.0L1078.0 116.3L1079.0 116.2L1080.0 116.2L1081.0 116.2L1082.0 116.6L1083.0 116.4L1084.0 116.6L1085.0 116.4L1086.0 116.5L1087.0 116.4L1088.0 116.5L1089.0 116.6L1090.0 116.7L1091.0 116.4L1092.0 116.5L1093.0 116.5L1094.0 116.6L1095.0 116.5L1096.0 116.5L1097.0 116.7L1098.0 116.5L1099.0 116.7L1100.0 116.6L1101.0 116.6L1102.0 116.8L1103.0 116.5L1104.0 116.5L1105.0 116.7L1106.0 116.7L1107.0 116.6L1108.0 116.6L1109.0 116.8L1110.0 116.6L1111.0 116.6L1112.0 116.7L1113.0 116.4L1114.0 116.7L1115.0 116.5L1116.0 116.6L1117.0 116.6L1118.0 116.7L1119.0 116.5L1120.0 116.7L1121.0 116.6L1122.0 116.7L1123.0 116.7L1124.0 116.4L1125.0 116.6L1126.0 116.6L1127.0 116.6L1128.0 116.7L1129.0 116.7L1130.0 116.7L1131.0 116.7L1132.0 116.5L1133.0 116.7L1134.0 116.7L1135.0 116.5L1136.0 116.6L1137.0 116.5L1138.0 116.7L1139.0 116.6L1140.0 116.7L1141.0 116.6L1142.0 116.6L1143.0 116.5L1144.0 116.4L1145.0 116.6L1146.0 116.5L1147.0 116.4L1148.0 116.6L1149.0 116.6L1150.0 116.6L1151.0 116.5L1152.0 116.6L1153.0 116.7L1154.0 116.6L1155.0 116.7L1156.0 116.6L1157.0 116.6L1158.0 116.6L1159.0 116.6L1160.0 116.6L1161.0 116.3L1162.0 116.3L1163.0 116.6L1164.0 116.7L1165.0 116.4L1166.0 116.5L1167.0 116.4L1168.0 116.3L1169.0 116.4L1170.0 116.6L1171.0 116.4L1172.0 116.7L1173.0 116.6L1174.0 116.5L1175.0 116.7L1176.0 116.4L1177.0 116.3L1178.0 116.4L1179.0 116.5L1180.0 116.6L1181.0 116.4L1182.0 116.6L1183.0 116.4L1184.0 116.7L1185.0 116.7L1186.0 116.6L1187.0 116.4L1188.0 116.4L1189.0 116.4L1190.0 116.6L1191.0 116.3L1192.0 116.3L1193.0 116.4L1194.0 116.4L1195.0 116.7L1196.0 116.5L1197.0 116.3L1198.0 116.3L1199.0 116.4L1200.0 116.5L1201.0 116.2L1202.0 116.4L1203.0 116.6L1204.0 116.4L1205.0 116.5L1206.0 116.3L1207.0 116.5L1208.0 116.4L1208.0 118.6L1207.0 118.5L1206.0 118.7L1205.0 118.4L1204.0 118.5L1203.0 118.5L1202.0 118.5L1201.0 118.6L1200.0 118.6L1199.0 118.7L1198.0 118.4L1197.0 118.4L1196.0 118.5L1195.0 118.6L1194.0 118.5L1193.0 118.6L1192.0 118.6L1191.0 118.5L1190.0 118.3L1189.0 118.6L1188.0 118.4L1187.0 118.3L1186.0 118.6L1185.0 118.6L1184.0 118.4L1183.0 118.5L1182.0 118.3L1181.0 118.6L1180.0 118.3L1179.0 118.6L1178.0 118.4L1177.0 118.5L1176.0 118.4L1175.0 118.4L1174.0 118.5L1173.0 118.4L1172.0 118.3L1171.0 118.6L1170.0 118.7L1169.0 118.4L1168.0 118.5L1167.0 118.4L1166.0 118.6L1165.0 118.5L1164.0 118.6L1163.0 118.4L1162.0 118.7L1161.0 118.6L1160.0 118.5L1159.0 118.6L1158.0 118.4L1157.0 118.3L1156.0 118.5L1155.0 118.5L1154.0 118.5L1153.0 118.6L1152.0 118.3L1151.0 118.4L1150.0 118.5L1149.0 118.6L1148.0 118.5L1147.0 118.3L1146.0 118.3L1145.0 118.3L1144.0 118.5L1143.0 118.3L1142.0 118.3L1141.0 118.3L1140.0 118.6L1139.0 118.6L1138.0 118.5L1137.0 118.3L1136.0 118.5L1135.0 118.3L1134.0 118.3L1133.0 118.5L1132.0 118.3L1131.0 118.2L1130.0 118.3L1129.0 118.3L1128.0 118.5L1127.0 118.2L1126.0 118.4L1125.0 118.3L1124.0 118.3L1123.0 118.3L1122.0 118.3L1121.0 118.5L1120.0 118.5L1119.0 118.3L1118.0 118.4L1117.0 118.6L1116.0 118.6L1115.0 118.3L1114.0 118.5L1113.0 118.5L1112.0 118.2L1111.0 118.4L1110.0 118.6L1109.0 118.5L1108.0 118.4L1107.0 118.3L1106.0 118.5L1105.0 118.3L1104.0 118.3L1103.0 118.3L1102.0 118.2L1101.0 118.5L1100.0 118.5L1099.0 118.3L1098.0 118.3L1097.0 118.3L1096.0 118.4L1095.0 118.6L1094.0 118.5L1093.0 118.5L1092.0 118.3L1091.0 118.5L1090.0 118.4L1089.0 118.6L1088.0 118.6L1087.0 118.3L1086.0 118.7L1085.0 118.6L1084.0 118.4L1083.0 118.6L1082.0 118.5L1081.0 118.5L1080.0 118.8L1079.0 118.7L1078.0 118.4L1077.0 118.8L1076.0 118.5L1075.0 118.8L1074.0 118.7L1073.0 118.9L1072.0 119.0L1071.0 119.5L1070.0 119.5L1069.0 119.6L1068.0 120.2L1067.0 121.0L1066.0 122.2L1065.0 122.6L1064.0 123.4L1063.0 124.6L1062.0 124.8L1061.0 124.7L1060.0 124.2L1059.0 126.0L1058.0 125.3L1057.0 127.0L1056.0 126.3L1055.0 126.1L1054.0 127.4L1053.0 127.5L1052.0 128.8L1051.0 131.2L1050.0 118.3L1049.0 118.4L1048.0 118.3L1047.0 118.4L1046.0 118.4L1045.0 118.6L1044.0 118.4L1043.0 118.6L1042.0 118.5L1041.0 118.3L1040.0 118.3L1039.0 118.6L1038.0 118.5L1037.0 118.6L1036.0 118.5L1035.0 118.6L1034.0 118.6L1033.0 118.5L1032.0 118.6L1031.0 118.4L1030.0 118.6L1029.0 118.5L1028.0 118.6L1027.0 118.4L1026.0 118.8L1025.0 119.0L1024.0 118.8L1023.0 118.7L1022.0 118.8L1021.0 119.0L1020.0 119.0L1019.0 118.8L1018.0 119.2L1017.0 119.5L1016.0 119.9L1015.0 120.2L1014.0 120.4L1013.0 120.6L1012.0 121.8L1011.0 122.6L1010.0 122.9L1009.0 123.5L1008.0 124.6L1007.0 125.3L1006.0 126.5L1005.0 127.6L1004.0 128.7L1003.0 131.0L1002.0 130.1L1001.0 131.8L1000.0 129.6L999.0 128.9L998.0 127.7L997.0 129.2L996.0 128.9L995.0 129.6L994.0 128.3L993.0 129.6L992.0 128.7L991.0 129.8L990.0 130.6L989.0 132.9L988.0 132.2L987.0 134.0L986.0 135.0L985.0 135.9L984.0 133.3L983.0 133.1L982.0 135.0L981.0 133.2L980.0 132.9L979.0 134.7L978.0 132.0L977.0 133.1L976.0 133.7L975.0 131.0L974.0 131.2L973.0 132.8L972.0 131.8L971.0 134.3L970.0 132.3L969.0 134.2L968.0 135.0L967.0 133.9L966.0 134.4L965.0 138.5L964.0 137.1L963.0 140.7L962.0 140.2L961.0 141.1L960.0 139.0L959.0 138.7L958.0 135.6L957.0 132.9L956.0 129.7L955.0 125.7L954.0 119.0L953.0 119.0L952.0 119.1L951.0 119.3L950.0 120.5L949.0 121.4L948.0 122.4L947.0 121.9L946.0 122.8L945.0 122.2L944.0 121.9L943.0 122.3L942.0 122.8L941.0 126.1L940.0 127.3L939.0 125.5L938.0 125.3L937.0 124.0L936.0 123.6L935.0 123.7L934.0 122.9L933.0 123.0L932.0 123.3L931.0 123.7L930.0 123.3L929.0 124.1L928.0 124.5L927.0 126.8L926.0 128.1L925.0 130.5L924.0 135.7L923.0 139.2L922.0 139.4L921.0 144.8L920.0 145.5L919.0 147.1L918.0 144.6L917.0 143.1L916.0 139.0L915.0 136.3L914.0 132.3L913.0 129.0L912.0 126.0L911.0 123.4L910.0 120.0L909.0 118.8L908.0 120.5L907.0 126.9L906.0 118.7L905.0 118.9L904.0 118.7L903.0 118.9L902.0 119.0L901.0 119.1L900.0 118.7L899.0 118.6L898.0 118.8L897.0 118.8L896.0 119.0L895.0 119.5L894.0 120.1L893.0 120.0L892.0 121.0L891.0 122.0L890.0 124.0L889.0 125.7L888.0 126.3L887.0 132.4L886.0 135.9L885.0 139.4L884.0 149.0L883.0 147.9L882.0 150.4L881.0 152.0L880.0 147.3L879.0 155.6L878.0 152.6L877.0 147.7L876.0 151.3L875.0 147.4L874.0 139.5L873.0 138.8L872.0 136.8L871.0 139.1L870.0 136.2L869.0 132.4L868.0 129.5L867.0 127.7L866.0 126.2L865.0 125.4L864.0 126.9L863.0 128.3L862.0 131.6L861.0 132.7L860.0 133.3L859.0 137.1L858.0 139.3L857.0 142.0L856.0 141.2L855.0 145.4L854.0 147.0L853.0 152.1L852.0 149.7L851.0 156.2L850.0 155.9L849.0 157.5L848.0 148.6L847.0 147.5L846.0 140.5L845.0 139.9L844.0 136.6L843.0 130.8L842.0 129.3L841.0 125.9L840.0 122.1L839.0 122.1L838.0 120.6L837.0 120.1L836.0 120.6L835.0 122.1L834.0 123.1L833.0 125.0L832.0 125.6L831.0 127.1L830.0 126.9L829.0 129.1L828.0 129.5L827.0 131.2L826.0 132.1L825.0 130.6L824.0 132.4L823.0 132.8L822.0 131.9L821.0 133.7L820.0 135.2L819.0 135.8L818.0 136.4L817.0 135.1L816.0 139.7L815.0 140.1L814.0 138.3L813.0 142.8L812.0 141.0L811.0 148.8L810.0 151.8L809.0 153.3L808.0 149.0L807.0 155.5L806.0 154.4L805.0 149.3L804.0 150.7L803.0 149.8L802.0 158.3L801.0 160.7L800.0 161.0L799.0 157.6L798.0 163.2L797.0 168.0L796.0 181.7L795.0 186.3L794.0 163.3L793.0 141.7L792.0 126.8L791.0 124.7L790.0 125.9L789.0 127.2L788.0 126.6L787.0 127.1L786.0 127.7L785.0 130.0L784.0 129.8L783.0 133.5L782.0 132.4L781.0 132.0L780.0 132.7L779.0 131.2L778.0 131.5L777.0 130.6L776.0 129.9L775.0 129.7L774.0 128.5L773.0 127.2L772.0 127.2L771.0 127.4L770.0 128.5L769.0 129.3L768.0 129.5L767.0 130.2L766.0 133.1L765.0 132.7L764.0 129.6L763.0 129.3L762.0 130.6L761.0 137.3L760.0 144.5L759.0 148.6L758.0 148.1L757.0 152.4L756.0 153.2L755.0 150.8L754.0 157.9L753.0 166.3L752.0 171.1L751.0 174.3L750.0 176.6L749.0 167.0L748.0 169.3L747.0 172.3L746.0 168.6L745.0 171.2L744.0 171.1L743.0 166.7L742.0 162.5L741.0 161.2L740.0 161.8L739.0 162.9L738.0 169.2L737.0 167.3L736.0 166.5L735.0 167.5L734.0 167.5L733.0 165.3L732.0 165.4L731.0 157.4L730.0 143.2L729.0 144.1L728.0 147.0L727.0 154.4L726.0 169.2L725.0 169.2L724.0 177.9L723.0 162.6L722.0 149.0L721.0 143.9L720.0 136.5L719.0 129.6L718.0 123.1L717.0 118.3L716.0 118.5L715.0 118.3L714.0 118.3L713.0 118.3L712.0 118.3L711.0 118.3L710.0 118.3L709.0 118.5L708.0 118.4L707.0 118.6L706.0 118.4L705.0 118.4L704.0 118.5L703.0 118.3L702.0 118.5L701.0 118.4L700.0 118.5L699.0 118.3L698.0 118.5L697.0 118.4L696.0 118.4L695.0 118.2L694.0 118.6L693.0 118.5L692.0 118.5L691.0 118.6L690.0 118.4L689.0 118.5L688.0 118.5L687.0 118.4L686.0 118.4L685.0 118.5L684.0 118.4L683.0 118.6L682.0 118.4L681.0 118.5L680.0 118.6L679.0 118.4L678.0 118.4L677.0 118.3L676.0 118.5L675.0 118.4L674.0 118.4L673.0 118.4L672.0 118.5L671.0 118.5L670.0 118.5L669.0 118.3L668.0 118.5L667.0 118.4L666.0 118.5L665.0 118.4L664.0 118.4L663.0 118.4L662.0 118.5L661.0 118.2L660.0 118.3L659.0 118.4L658.0 118.4L657.0 118.5L656.0 118.4L655.0 118.6L654.0 118.5L653.0 118.3L652.0 118.3L651.0 118.3L650.0 118.3L649.0 118.5L648.0 118.3L647.0 118.3L646.0 118.4L645.0 118.4L644.0 118.4L643.0 118.5L642.0 118.5L641.0 118.3L640.0 118.5L639.0 118.5L638.0 118.4L637.0 118.6L636.0 118.4L635.0 118.4L634.0 118.3L633.0 118.3L632.0 118.4L631.0 118.4L630.0 118.6L629.0 118.6L628.0 118.6L627.0 118.5L626.0 118.4L625.0 118.8L624.0 118.7L623.0 118.6L622.0 118.7L621.0 118.6L620.0 119.1L619.0 118.8L618.0 119.3L617.0 119.7L616.0 121.4L615.0 122.6L614.0 123.7L613.0 124.2L612.0 126.0L611.0 127.3L610.0 127.8L609.0 129.8L608.0 130.0L607.0 131.9L606.0 134.4L605.0 137.1L604.0 143.0L603.0 147.9L602.0 145.8L601.0 139.4L600.0 143.1L599.0 154.1L598.0 147.9L597.0 141.3L596.0 133.2L595.0 130.5L594.0 128.8L593.0 125.2L592.0 121.4L591.0 118.4L590.0 118.7L589.0 118.4L588.0 118.7L587.0 118.6L586.0 118.5L585.0 118.6L584.0 118.7L583.0 118.7L582.0 118.8L581.0 118.7L580.0 118.8L579.0 118.5L578.0 118.5L577.0 118.8L576.0 118.5L575.0 118.4L574.0 118.5L573.0 118.7L572.0 118.7L571.0 118.7L570.0 118.9L569.0 119.5L568.0 119.8L567.0 119.5L566.0 119.8L565.0 120.4L564.0 121.7L563.0 122.4L562.0 122.6L561.0 123.5L560.0 123.4L559.0 123.8L558.0 125.2L557.0 125.8L556.0 125.6L555.0 126.7L554.0 127.5L553.0 126.7L552.0 128.3L551.0 130.3L550.0 130.9L549.0 132.0L548.0 133.6L547.0 134.0L546.0 132.0L545.0 133.1L544.0 132.0L543.0 129.8L542.0 131.5L541.0 130.8L540.0 130.6L539.0 132.4L538.0 132.2L537.0 132.6L536.0 131.8L535.0 132.8L534.0 135.6L533.0 134.2L532.0 133.4L531.0 133.1L530.0 136.4L529.0 138.5L528.0 136.0L527.0 136.0L526.0 137.5L525.0 139.3L524.0 137.4L523.0 135.1L522.0 134.7L521.0 136.0L520.0 134.5L519.0 140.8L518.0 124.4L517.0 119.0L516.0 119.2L515.0 119.2L514.0 119.3L513.0 118.8L512.0 118.9L511.0 118.9L510.0 119.3L509.0 118.8L508.0 119.2L507.0 119.4L506.0 120.0L505.0 121.0L504.0 122.5L503.0 125.0L502.0 127.8L501.0 130.1L500.0 132.7L499.0 131.9L498.0 134.6L497.0 135.1L496.0 139.0L495.0 136.4L494.0 136.8L493.0 139.1L492.0 139.3L491.0 138.0L490.0 138.6L489.0 141.9L488.0 139.3L487.0 141.6L486.0 140.9L485.0 142.3L484.0 142.2L483.0 140.9L482.0 141.7L481.0 139.0L480.0 138.1L479.0 140.3L478.0 141.7L477.0 138.3L476.0 138.7L475.0 138.5L474.0 137.3L473.0 140.2L472.0 137.0L471.0 136.5L470.0 138.3L469.0 136.9L468.0 135.1L467.0 138.4L466.0 134.2L465.0 137.0L464.0 133.6L463.0 133.6L462.0 131.8L461.0 132.8L460.0 133.6L459.0 135.3L458.0 134.6L457.0 133.8L456.0 137.3L455.0 137.8L454.0 138.8L453.0 136.7L452.0 137.6L451.0 142.5L450.0 141.0L449.0 143.3L448.0 147.7L447.0 145.4L446.0 153.6L445.0 154.8L444.0 167.0L443.0 166.8L442.0 178.8L441.0 181.4L440.0 184.7L439.0 191.3L438.0 193.7L437.0 197.2L436.0 186.9L435.0 184.4L434.0 182.8L433.0 179.9L432.0 199.2L431.0 192.3L430.0 180.4L429.0 172.3L428.0 148.0L427.0 128.7L426.0 118.8L425.0 118.8L424.0 118.4L423.0 118.7L422.0 118.5L421.0 118.8L420.0 118.5L419.0 118.8L418.0 118.5L417.0 118.5L416.0 118.6L415.0 118.5L414.0 118.5L413.0 118.8L412.0 118.7L411.0 118.6L410.0 118.6L409.0 118.6L408.0 118.4L407.0 118.8L406.0 118.8L405.0 118.6L404.0 118.4L403.0 118.7L402.0 118.4L401.0 118.6L400.0 118.5L399.0 118.7L398.0 118.8L397.0 118.5L396.0 118.7L395.0 118.6L394.0 119.0L393.0 118.8L392.0 118.6L391.0 118.9L390.0 119.1L389.0 118.8L388.0 119.1L387.0 119.1L386.0 119.1L385.0 119.8L384.0 119.5L383.0 120.0L382.0 121.9L381.0 123.8L380.0 123.6L379.0 125.1L378.0 126.4L377.0 125.9L376.0 126.2L375.0 126.9L374.0 125.7L373.0 125.3L372.0 125.4L371.0 124.4L370.0 125.5L369.0 126.1L368.0 125.8L367.0 128.2L366.0 127.1L365.0 128.9L364.0 128.9L363.0 128.0L362.0 127.4L361.0 129.9L360.0 128.7L359.0 130.4L358.0 130.3L357.0 131.4L356.0 136.9L355.0 133.4L354.0 129.1L353.0 126.9L352.0 129.1L351.0 146.9L350.0 138.0L349.0 119.0L348.0 118.7L347.0 119.3L346.0 118.9L345.0 119.1L344.0 118.7L343.0 119.2L342.0 119.0L341.0 119.2L340.0 119.4L339.0 119.3L338.0 119.0L337.0 119.7L336.0 121.7L335.0 121.9L334.0 125.7L333.0 128.1L332.0 131.5L331.0 135.2L330.0 136.2L329.0 136.6L328.0 138.9L327.0 140.1L326.0 140.4L325.0 138.2L324.0 139.3L323.0 143.2L322.0 144.3L321.0 140.1L320.0 143.7L319.0 146.7L318.0 143.7L317.0 150.2L316.0 148.4L315.0 148.4L314.0 149.5L313.0 157.3L312.0 156.9L311.0 165.2L310.0 167.1L309.0 164.7L308.0 159.7L307.0 160.0L306.0 158.2L305.0 162.5L304.0 164.3L303.0 162.4L302.0 169.1L301.0 158.7L300.0 158.6L299.0 146.4L298.0 142.3L297.0 136.2L296.0 134.5L295.0 134.7L294.0 131.7L293.0 133.9L292.0 138.0L291.0 147.8L290.0 142.6L289.0 136.8L288.0 135.3L287.0 132.5L286.0 136.3L285.0 143.4L284.0 144.8L283.0 157.6L282.0 190.0L281.0 193.7L280.0 158.5L279.0 136.7L278.0 120.6L277.0 120.0L276.0 119.6L275.0 119.9L274.0 119.4L273.0 120.0L272.0 120.1L271.0 119.6L270.0 119.6L269.0 119.7L268.0 119.6L267.0 121.0L266.0 122.1L265.0 122.4L264.0 124.1L263.0 127.0L262.0 129.5L261.0 134.7L260.0 136.5L259.0 144.5L258.0 143.2L257.0 147.6L256.0 144.2L255.0 144.9L254.0 148.5L253.0 146.9L252.0 149.1L251.0 145.8L250.0 143.6L249.0 146.5L248.0 148.6L247.0 141.1L246.0 127.5L245.0 131.8L244.0 143.2L243.0 135.9L242.0 123.9L241.0 123.7L240.0 123.3L239.0 122.8L238.0 123.8L237.0 124.5L236.0 123.8L235.0 125.2L234.0 125.5L233.0 128.4L232.0 129.5L231.0 130.6L230.0 136.4L229.0 140.9L228.0 144.8L227.0 149.1L226.0 150.9L225.0 157.3L224.0 159.2L223.0 164.8L222.0 166.3L221.0 164.0L220.0 169.2L219.0 182.2L218.0 186.7L217.0 193.3L216.0 181.4L215.0 171.6L214.0 171.0L213.0 163.8L212.0 169.4L211.0 172.3L210.0 174.6L209.0 178.1L208.0 183.8L207.0 175.5L206.0 178.0L205.0 168.7L204.0 166.0L203.0 165.4L202.0 172.3L201.0 177.5L200.0 171.7L199.0 177.6L198.0 168.3L197.0 169.4L196.0 171.9L195.0 173.2L194.0 173.9L193.0 167.5L192.0 170.1L191.0 146.4L190.0 136.2L189.0 129.2L188.0 129.9L187.0 128.8L186.0 129.7L185.0 131.1L184.0 132.4L183.0 132.2L182.0 131.6L181.0 131.3L180.0 131.3L179.0 130.6L178.0 132.9L177.0 130.7L176.0 134.4L175.0 136.5L174.0 144.7L173.0 154.0L172.0 136.7L171.0 122.8L170.0 118.5L169.0 118.6L168.0 118.3L167.0 118.5L166.0 118.3L165.0 118.5L164.0 118.3L163.0 118.6L162.0 118.6L161.0 118.4L160.0 118.3L159.0 118.4L158.0 118.2L157.0 118.3L156.0 118.3L155.0 118.4L154.0 118.5L153.0 118.4L152.0 118.6L151.0 118.6L150.0 118.3L149.0 118.5L148.0 118.5L147.0 118.5L146.0 118.3L145.0 118.4L144.0 118.3L143.0 118.6L142.0 118.3L141.0 118.5L140.0 118.6L139.0 118.4L138.0 118.5L137.0 118.4L136.0 118.4L135.0 118.5L134.0 118.4L133.0 118.3L132.0 118.4L131.0 118.5L130.0 118.4L129.0 118.5L128.0 118.4L127.0 118.5L126.0 118.3L125.0 118.3L124.0 118.5L123.0 118.6L122.0 118.6L121.0 118.4L120.0 118.6L119.0 118.4L118.0 118.5L117.0 118.4L116.0 118.4L115.0 118.6L114.0 118.6L113.0 118.5L112.0 118.3L111.0 118.5L110.0 118.5L109.0 118.6L108.0 118.6L107.0 118.4L106.0 118.4L105.0 118.7L104.0 118.5L103.0 118.6L102.0 118.6L101.0 118.5L100.0 118.6L99.0 118.6L98.0 118.6L97.0 118.5L96.0 118.7L95.0 118.4L94.0 118.4L93.0 118.5L92.0 118.7L91.0 118.5L90.0 118.6L89.0 118.5L88.0 118.4L87.0 118.6L86.0 118.7L85.0 118.7L84.0 118.8L83.0 118.5L82.0 118.7L81.0 118.7L80.0 118.5L79.0 118.7L78.0 118.8L77.0 118.4L76.0 118.5L75.0 118.8L74.0 118.5L73.0 118.5L72.0 118.5L71.0 118.6L70.0 118.9L69.0 118.5L68.0 118.6L67.0 118.5L66.0 118.8L65.0 118.6L64.0 118.5L63.0 118.5L62.0 118.5L61.0 118.5L60.0 118.8L59.0 118.7L58.0 118.9L57.0 118.9L56.0 118.5L55.0 118.8L54.0 118.9L53.0 118.8L52.0 118.8L51.0 118.7L50.0 118.8L49.0 118.7L48.0 118.7L47.0 119.1L46.0 118.8L45.0 119.1L44.0 119.1L43.0 118.9L42.0 119.2L41.0 118.8L40.0 119.1L39.0 118.8L38.0 119.0L37.0 119.2L36.0 119.0L35.0 119.5L34.0 119.3L33.0 119.3L32.0 119.6L31.0 119.3L30.0 119.4L29.0 119.2L28.0 119.5L27.0 119.6L26.0 119.5L25.0 119.7L24.0 119.2L23.0 119.4L22.0 120.0L21.0 119.7L20.0 119.9L19.0 119.6L18.0 119.9L17.0 119.8L16.0 119.6L15.0 119.5L14.0 119.8L13.0 120.1L12.0 120.3L11.0 119.7L10.0 119.9L9.0 119.6L8.0 120.0L7.0 120.4L6.0 119.7L5.0 120.2L4.0 119.4L3.0 119.7L2.0 119.8L1.0 119.6L0.0 119.4L-1.0 119.4Z" fill="#1a1a1a" stroke="#1a1a1a" stroke-width="0.4" stroke-linejoin="round"/><rect x="0" y="117.0" width="1209" height="1" fill="#111"/></svg>
<div class="abs" style="left:1px;top:496px;width:1267px;height:38px;background:#696969"></div>
<svg class="abs" style="left:1px;top:496px" width="100" height="38" viewBox="0 0 100 38" fill="none" stroke-linecap="round"><path d="M9.5 11.5L21.5 23.5M21.5 11.5L9.5 23.5" stroke="#c3dedd" stroke-width="4.6"/><path d="M36 17.6H57.2" stroke="#c3dedd" stroke-width="4.8" stroke-linecap="butt"/><path d="M70.4 16V9.5H76.9M82 9.5H88.5V16M88.5 21V27.5H82M76.9 27.5H70.4V21" stroke="#c3dedd" stroke-width="3" stroke-linecap="butt"/></svg>
<div class="abs pf" style="left:109px;top:496px;height:38px;line-height:37px;font-size:22px;font-weight:350;letter-spacing:1.465px;color:#d6f8f5;white-space:nowrap">word alignment</div>
<svg class="abs" style="left:1245px;top:502px" width="22" height="26" viewBox="0 0 22 26"><path d="M4.2 0.3H17.8Q19 0.3 19 1.5V3.6Q19 4.8 17.8 4.8H15.6V10.4C18.2 11.8 20 13.6 20 16.5H13L11.6 24.5H10.4L9 16.5H2C2 13.6 3.8 11.8 6.4 10.4V4.8H4.2Q3 4.8 3 3.6V1.5Q3 0.3 4.2 0.3Z" fill="#c9c9c9"/></svg>
<div class="abs" style="left:1px;top:534px;width:1267px;height:106px;background:#fff"></div>
<div class="abs" style="left:1px;top:534px;width:56px;height:106px;background:#d6d6d6"></div>
<div class="abs" style="left:57.2px;top:534px;width:1.7px;height:106px;background:#20d2a0"></div>
<div class="abs" style="left:1px;top:640px;width:1267px;height:38px;background:#696969"></div>
<svg class="abs" style="left:1px;top:640px" width="100" height="38" viewBox="0 0 100 38" fill="none" stroke-linecap="round"><path d="M9.5 11.5L21.5 23.5M21.5 11.5L9.5 23.5" stroke="#c3dedd" stroke-width="4.6"/><path d="M36 17.6H57.2" stroke="#c3dedd" stroke-width="4.8" stroke-linecap="butt"/><path d="M70.4 16V9.5H76.9M82 9.5H88.5V16M88.5 21V27.5H82M76.9 27.5H70.4V21" stroke="#c3dedd" stroke-width="3" stroke-linecap="butt"/></svg>
<div class="abs pf" style="left:109px;top:640px;height:38px;line-height:37px;font-size:22px;font-weight:350;letter-spacing:1.393px;color:#d6f8f5;white-space:nowrap">lip sync</div>
<svg class="abs" style="left:1245px;top:646px" width="22" height="26" viewBox="0 0 22 26"><path d="M4.2 0.3H17.8Q19 0.3 19 1.5V3.6Q19 4.8 17.8 4.8H15.6V10.4C18.2 11.8 20 13.6 20 16.5H13L11.6 24.5H10.4L9 16.5H2C2 13.6 3.8 11.8 6.4 10.4V4.8H4.2Q3 4.8 3 3.6V1.5Q3 0.3 4.2 0.3Z" fill="#c9c9c9"/></svg>
<div class="abs" style="left:1px;top:678px;width:1267px;height:106px;background:#fff"></div>
<div class="abs" style="left:1px;top:678px;width:56px;height:106px;background:#d6d6d6"></div>
<div class="abs" style="left:57.2px;top:678px;width:1.7px;height:106px;background:#20d2a0"></div>
<div class="abs" style="left:1px;top:784px;width:1267px;height:38px;background:#696969"></div>
<svg class="abs" style="left:1px;top:784px" width="100" height="38" viewBox="0 0 100 38" fill="none" stroke-linecap="round"><path d="M9.5 11.5L21.5 23.5M21.5 11.5L9.5 23.5" stroke="#c3dedd" stroke-width="4.6"/><path d="M36 17.6H57.2" stroke="#c3dedd" stroke-width="4.8" stroke-linecap="butt"/><path d="M70.4 16V9.5H76.9M82 9.5H88.5V16M88.5 21V27.5H82M76.9 27.5H70.4V21" stroke="#c3dedd" stroke-width="3" stroke-linecap="butt"/></svg>
<div class="abs pf" style="left:109px;top:784px;height:38px;line-height:37px;font-size:22px;font-weight:350;letter-spacing:1.586px;color:#d6f8f5;white-space:nowrap">behavior mode</div>
<svg class="abs" style="left:1245px;top:790px" width="22" height="26" viewBox="0 0 22 26"><path d="M4.2 0.3H17.8Q19 0.3 19 1.5V3.6Q19 4.8 17.8 4.8H15.6V10.4C18.2 11.8 20 13.6 20 16.5H13L11.6 24.5H10.4L9 16.5H2C2 13.6 3.8 11.8 6.4 10.4V4.8H4.2Q3 4.8 3 3.6V1.5Q3 0.3 4.2 0.3Z" fill="#c9c9c9"/></svg>
<div class="abs" style="left:1px;top:822px;width:1267px;height:106px;background:#fff"></div>
<div class="abs" style="left:1px;top:822px;width:56px;height:106px;background:#d6d6d6"></div>
<div class="abs" style="left:57.2px;top:822px;width:1.7px;height:106px;background:#20d2a0"></div>
<div class="abs" style="left:1px;top:928px;width:1267px;height:38px;background:#696969"></div>
<svg class="abs" style="left:1px;top:928px" width="100" height="38" viewBox="0 0 100 38" fill="none" stroke-linecap="round"><path d="M9.5 11.5L21.5 23.5M21.5 11.5L9.5 23.5" stroke="#c3dedd" stroke-width="4.6"/><path d="M36 17.6H57.2" stroke="#c3dedd" stroke-width="4.8" stroke-linecap="butt"/><path d="M70.4 16V9.5H76.9M82 9.5H88.5V16M88.5 21V27.5H82M76.9 27.5H70.4V21" stroke="#c3dedd" stroke-width="3" stroke-linecap="butt"/></svg>
<div class="abs pf" style="left:109px;top:928px;height:38px;line-height:37px;font-size:22px;font-weight:350;letter-spacing:1.324px;color:#d6f8f5;white-space:nowrap">expressions</div>
<svg class="abs" style="left:1245px;top:934px" width="22" height="26" viewBox="0 0 22 26"><path d="M4.2 0.3H17.8Q19 0.3 19 1.5V3.6Q19 4.8 17.8 4.8H15.6V10.4C18.2 11.8 20 13.6 20 16.5H13L11.6 24.5H10.4L9 16.5H2C2 13.6 3.8 11.8 6.4 10.4V4.8H4.2Q3 4.8 3 3.6V1.5Q3 0.3 4.2 0.3Z" fill="#c9c9c9"/></svg>
<div class="abs" style="left:1px;top:966px;width:1267px;height:106px;background:#fff"></div>
<div class="abs" style="left:1px;top:966px;width:56px;height:106px;background:#d6d6d6"></div>
<div class="abs" style="left:57.2px;top:966px;width:1.7px;height:106px;background:#20d2a0"></div>
<div class="abs" style="left:1px;top:1072px;width:1267px;height:38px;background:#696969"></div>
<svg class="abs" style="left:1px;top:1072px" width="100" height="38" viewBox="0 0 100 38" fill="none" stroke-linecap="round"><path d="M9.5 11.5L21.5 23.5M21.5 11.5L9.5 23.5" stroke="#c3dedd" stroke-width="4.6"/><path d="M36 17.6H57.2" stroke="#c3dedd" stroke-width="4.8" stroke-linecap="butt"/><path d="M70.4 16V9.5H76.9M82 9.5H88.5V16M88.5 21V27.5H82M76.9 27.5H70.4V21" stroke="#c3dedd" stroke-width="3" stroke-linecap="butt"/></svg>
<div class="abs pf" style="left:109px;top:1072px;height:38px;line-height:37px;font-size:22px;font-weight:350;letter-spacing:1.723px;color:#d6f8f5;white-space:nowrap">breaths</div>
<svg class="abs" style="left:1245px;top:1078px" width="22" height="26" viewBox="0 0 22 26"><path d="M4.2 0.3H17.8Q19 0.3 19 1.5V3.6Q19 4.8 17.8 4.8H15.6V10.4C18.2 11.8 20 13.6 20 16.5H13L11.6 24.5H10.4L9 16.5H2C2 13.6 3.8 11.8 6.4 10.4V4.8H4.2Q3 4.8 3 3.6V1.5Q3 0.3 4.2 0.3Z" fill="#c9c9c9"/></svg>
<div class="abs" style="left:1px;top:1110px;width:1267px;height:106px;background:#fff"></div>
<div class="abs" style="left:1px;top:1110px;width:56px;height:106px;background:#d6d6d6"></div>
<div class="abs" style="left:57.2px;top:1110px;width:1.7px;height:106px;background:#20d2a0"></div>
<div class="abs" style="left:1px;top:1216px;width:1267px;height:38px;background:#696969"></div>
<svg class="abs" style="left:1px;top:1216px" width="100" height="38" viewBox="0 0 100 38" fill="none" stroke-linecap="round"><path d="M9.5 11.5L21.5 23.5M21.5 11.5L9.5 23.5" stroke="#2fe0ae" stroke-width="4.6"/><path d="M36 17.6H57.2" stroke="#2fe0ae" stroke-width="4.8" stroke-linecap="butt"/><path d="M70.4 16V9.5H76.9M82 9.5H88.5V16M88.5 21V27.5H82M76.9 27.5H70.4V21" stroke="#2fe0ae" stroke-width="3" stroke-linecap="butt"/></svg>
<div class="abs pf" style="left:109px;top:1216px;height:38px;line-height:37px;font-size:22px;font-weight:350;letter-spacing:1.361px;color:#2fe0ae;white-space:nowrap">modifiers (edited)</div>
<svg class="abs" style="left:1245px;top:1222px" width="22" height="26" viewBox="0 0 22 26"><path d="M4.2 0.3H17.8Q19 0.3 19 1.5V3.6Q19 4.8 17.8 4.8H15.6V10.4C18.2 11.8 20 13.6 20 16.5H13L11.6 24.5H10.4L9 16.5H2C2 13.6 3.8 11.8 6.4 10.4V4.8H4.2Q3 4.8 3 3.6V1.5Q3 0.3 4.2 0.3Z" fill="#c9c9c9"/></svg>
<div class="abs" style="left:1px;top:1254px;width:1267px;height:213px;background:#fff"></div>
<div class="abs" style="left:1px;top:1254px;width:56px;height:213px;background:#d6d6d6"></div>
<div class="abs" style="left:57.2px;top:1254px;width:1.7px;height:213px;background:#20d2a0"></div>
<div class="abs" style="left:1px;top:1467px;width:1267px;height:38px;background:#696969"></div>
<svg class="abs" style="left:1px;top:1467px" width="100" height="38" viewBox="0 0 100 38" fill="none" stroke-linecap="round"><path d="M9.5 11.5L21.5 23.5M21.5 11.5L9.5 23.5" stroke="#c3dedd" stroke-width="4.6"/><path d="M36 17.6H57.2" stroke="#c3dedd" stroke-width="4.8" stroke-linecap="butt"/><path d="M70.4 16V9.5H76.9M82 9.5H88.5V16M88.5 21V27.5H82M76.9 27.5H70.4V21" stroke="#c3dedd" stroke-width="3" stroke-linecap="butt"/></svg>
<div class="abs pf" style="left:109px;top:1467px;height:38px;line-height:37px;font-size:22px;font-weight:350;letter-spacing:1.842px;color:#d6f8f5;white-space:nowrap">motion</div>
<svg class="abs" style="left:1245px;top:1473px" width="22" height="26" viewBox="0 0 22 26"><path d="M4.2 0.3H17.8Q19 0.3 19 1.5V3.6Q19 4.8 17.8 4.8H15.6V10.4C18.2 11.8 20 13.6 20 16.5H13L11.6 24.5H10.4L9 16.5H2C2 13.6 3.8 11.8 6.4 10.4V4.8H4.2Q3 4.8 3 3.6V1.5Q3 0.3 4.2 0.3Z" fill="#c9c9c9"/></svg>
<div class="abs" style="left:1px;top:1505px;width:1267px;height:209px;background:#fff"></div>
<div class="abs" style="left:1px;top:1505px;width:56px;height:209px;background:#d6d6d6"></div>
<div class="abs" style="left:57.2px;top:1505px;width:1.7px;height:209px;background:#20d2a0"></div>
<div class="abs" style="left:215.4px;top:534px;width:4.4px;height:106px;background:#0000ff"></div>
<div class="abs" style="left:330.4px;top:534px;width:4.4px;height:106px;background:#0000ff"></div>
<div class="abs" style="left:441.4px;top:534px;width:4.4px;height:106px;background:#0000ff"></div>
<div class="abs" style="left:474.4px;top:534px;width:4.4px;height:106px;background:#0000ff"></div>
<div class="abs" style="left:561.4px;top:534px;width:4.4px;height:106px;background:#0000ff"></div>
<div class="abs" style="left:680.4px;top:534px;width:4.4px;height:106px;background:#0000ff"></div>
<div class="abs" style="left:766.4px;top:534px;width:4.4px;height:106px;background:#0000ff"></div>
<div class="abs" style="left:805.4px;top:534px;width:4.4px;height:106px;background:#0000ff"></div>
<div class="abs" style="left:822.4px;top:534px;width:4.4px;height:106px;background:#0000ff"></div>
<div class="abs" style="left:960.4px;top:534px;width:4.4px;height:106px;background:#0000ff"></div>
<div class="abs" style="left:1002.4px;top:534px;width:4.4px;height:106px;background:#0000ff"></div>
<div class="abs" style="left:1023.4000000000001px;top:534px;width:4.4px;height:106px;background:#0000ff"></div>
<div class="abs" style="left:1134.4px;top:534px;width:4.4px;height:106px;background:#0000ff"></div>
<div class="abs" style="left:1267px;top:534px;width:1px;height:106px;background:#4060ff"></div>
<div class="abs pf" style="left:137.5px;top:574px;transform:translateX(-50%);font-size:20px;letter-spacing:1.1px;line-height:28px;color:#000;white-space:nowrap">^</div>
<div class="abs pf" style="left:274.5px;top:574px;transform:translateX(-50%);font-size:20px;letter-spacing:1.1px;line-height:28px;color:#000;white-space:nowrap">tyger</div>
<div class="abs pf" style="left:387.5px;top:574px;transform:translateX(-50%);font-size:20px;letter-spacing:1.1px;line-height:28px;color:#000;white-space:nowrap">tyger</div>
<div class="abs pf" style="left:459.5px;top:574px;transform:translateX(-50%);font-size:20px;letter-spacing:1.1px;line-height:28px;color:#000;white-space:nowrap">^</div>
<div class="abs pf" style="left:519.5px;top:574px;transform:translateX(-50%);font-size:20px;letter-spacing:1.1px;line-height:28px;color:#000;white-space:nowrap">burning</div>
<div class="abs pf" style="left:622.5px;top:574px;transform:translateX(-50%);font-size:20px;letter-spacing:1.1px;line-height:28px;color:#000;white-space:nowrap">bright</div>
<div class="abs pf" style="left:725.5px;top:574px;transform:translateX(-50%);font-size:20px;letter-spacing:1.1px;line-height:28px;color:#000;white-space:nowrap">^</div>
<div class="abs pf" style="left:787.5px;top:574px;transform:translateX(-50%);font-size:20px;letter-spacing:1.1px;line-height:28px;color:#000;white-space:nowrap">in</div>
<div class="abs pf" style="left:893.5px;top:574px;transform:translateX(-50%);font-size:20px;letter-spacing:1.1px;line-height:28px;color:#000;white-space:nowrap">forests</div>
<div class="abs pf" style="left:983.5px;top:574px;transform:translateX(-50%);font-size:20px;letter-spacing:1.1px;line-height:28px;color:#000;white-space:nowrap">of</div>
<div class="abs pf" style="left:1014.5px;top:574px;transform:translateX(-50%);font-size:20px;letter-spacing:1.1px;line-height:28px;color:#000;white-space:nowrap">...</div>
<div class="abs pf" style="left:1080.5px;top:574px;transform:translateX(-50%);font-size:20px;letter-spacing:1.1px;line-height:28px;color:#000;white-space:nowrap">night</div>
<div class="abs pf" style="left:1202.5px;top:574px;transform:translateX(-50%);font-size:20px;letter-spacing:1.1px;line-height:28px;color:#000;white-space:nowrap">^</div>
<div class="abs" style="left:1267px;top:678px;width:1px;height:106px;background:#4060ff"></div>
<div class="abs pf" style="left:662.5px;top:718px;transform:translateX(-50%);font-size:20px;letter-spacing:1.1px;line-height:28px;color:#000;white-space:nowrap">phonetic</div>
<div class="abs" style="left:215.4px;top:822px;width:4.4px;height:106px;background:#0000ff"></div>
<div class="abs" style="left:766.4px;top:822px;width:4.4px;height:106px;background:#0000ff"></div>
<div class="abs" style="left:1267px;top:822px;width:1px;height:106px;background:#4060ff"></div>
<div class="abs pf" style="left:136.5px;top:862px;transform:translateX(-50%);font-size:20px;letter-spacing:1.1px;line-height:28px;color:#000;white-space:nowrap">fear</div>
<div class="abs pf" style="left:492.5px;top:862px;transform:translateX(-50%);font-size:20px;letter-spacing:1.1px;line-height:28px;color:#000;white-space:nowrap">neutral</div>
<div class="abs pf" style="left:1017.5px;top:862px;transform:translateX(-50%);font-size:20px;letter-spacing:1.1px;line-height:28px;color:#000;white-space:nowrap">fear</div>
<div class="abs" style="left:215.4px;top:966px;width:4.4px;height:106px;background:#0000ff"></div>
<div class="abs" style="left:474.4px;top:966px;width:4.4px;height:106px;background:#0000ff"></div>
<div class="abs" style="left:766.4px;top:966px;width:4.4px;height:106px;background:#0000ff"></div>
<div class="abs" style="left:1134.4px;top:966px;width:4.4px;height:106px;background:#0000ff"></div>
<div class="abs" style="left:1267px;top:966px;width:1px;height:106px;background:#4060ff"></div>
<div class="abs pf" style="left:137.5px;top:1006px;transform:translateX(-50%);font-size:20px;letter-spacing:1.1px;line-height:28px;color:#000;white-space:nowrap">^</div>
<div class="abs pf" style="left:346.5px;top:1006px;transform:translateX(-50%);font-size:20px;letter-spacing:1.1px;line-height:28px;color:#000;white-space:nowrap">/neutral/high/4</div>
<div class="abs pf" style="left:621.5px;top:1006px;transform:translateX(-50%);font-size:20px;letter-spacing:1.1px;line-height:28px;color:#000;white-space:nowrap">/neutral/low/3</div>
<div class="abs pf" style="left:952.5px;top:1006px;transform:translateX(-50%);font-size:20px;letter-spacing:1.1px;line-height:28px;color:#000;white-space:nowrap">/fear/low/4</div>
<div class="abs pf" style="left:1202.5px;top:1006px;transform:translateX(-50%);font-size:20px;letter-spacing:1.1px;line-height:28px;color:#000;white-space:nowrap">^</div>
<div class="abs" style="left:215.4px;top:1110px;width:4.4px;height:106px;background:#0000ff"></div>
<div class="abs" style="left:441.4px;top:1110px;width:4.4px;height:106px;background:#0000ff"></div>
<div class="abs" style="left:474.4px;top:1110px;width:4.4px;height:106px;background:#0000ff"></div>
<div class="abs" style="left:680.4px;top:1110px;width:4.4px;height:106px;background:#0000ff"></div>
<div class="abs" style="left:766.4px;top:1110px;width:4.4px;height:106px;background:#0000ff"></div>
<div class="abs" style="left:1160.4px;top:1110px;width:4.4px;height:106px;background:#0000ff"></div>
<div class="abs" style="left:1267px;top:1110px;width:1px;height:106px;background:#4060ff"></div>
<div class="abs pf" style="left:136.5px;top:1150px;transform:translateX(-50%);font-size:20px;letter-spacing:1.1px;line-height:28px;color:#000;white-space:nowrap">inhale</div>
<div class="abs pf" style="left:329.5px;top:1150px;transform:translateX(-50%);font-size:20px;letter-spacing:1.1px;line-height:28px;color:#000;white-space:nowrap">exhale</div>
<div class="abs pf" style="left:458.5px;top:1150px;transform:translateX(-50%);font-size:20px;letter-spacing:1.1px;line-height:28px;color:#000;white-space:nowrap">...</div>
<div class="abs pf" style="left:578.5px;top:1150px;transform:translateX(-50%);font-size:20px;letter-spacing:1.1px;line-height:28px;color:#000;white-space:nowrap">exhale</div>
<div class="abs pf" style="left:725.5px;top:1150px;transform:translateX(-50%);font-size:20px;letter-spacing:1.1px;line-height:28px;color:#000;white-space:nowrap">inhale</div>
<div class="abs pf" style="left:964.5px;top:1150px;transform:translateX(-50%);font-size:20px;letter-spacing:1.1px;line-height:28px;color:#000;white-space:nowrap">exhale</div>
<div class="abs pf" style="left:1214.5px;top:1150px;transform:translateX(-50%);font-size:20px;letter-spacing:1.1px;line-height:28px;color:#000;white-space:nowrap">inhale</div>
<div class="abs" style="left:0px;top:1714px;width:1290px;height:174.7px;background:#f0f0f0"></div>
<div class="abs" style="left:0px;top:1888.7px;width:1290px;height:1.3px;background:#000"></div>
<div class="abs" style="left:1px;top:1714px;width:1289px;height:1px;background:#555"></div>
<div class="abs" style="left:1px;top:1716px;width:1289px;height:38px;background:#696969;border:1px solid #454545"></div>
<div class="abs" style="left:57px;top:1716px;width:2px;height:39px;background:#484848"></div>
<div class="abs" style="left:1267px;top:1716px;width:1.4px;height:39px;background:#505050"></div>
<div class="abs pf" style="left:619px;top:1721.7px;font-size:20px;letter-spacing:1.2px;line-height:28px;color:#000;white-space:nowrap">6.875</div>
<svg class="abs" style="left:678px;top:1719px" width="32" height="32" viewBox="0 0 32 32"><path d="M3 3L27 16L3 29Z" fill="#000" stroke="#000" stroke-width="3" stroke-linejoin="round"/></svg>
<div class="abs" style="left:1px;top:1784px;width:1289px;height:38px;background:#696969;border:1px solid #454545"></div>
<div class="abs" style="left:57px;top:1784px;width:2px;height:39px;background:#484848"></div>
<div class="abs" style="left:1267px;top:1784px;width:1.4px;height:39px;background:#505050"></div>
<div class="abs pf" style="left:619px;top:1789.7px;font-size:20px;letter-spacing:1.2px;line-height:28px;color:#000;white-space:nowrap">6.875</div>
<svg class="abs" style="left:678px;top:1787px" width="32" height="32" viewBox="0 0 32 32"><path d="M3 3L27 16L3 29Z" fill="#000" stroke="#000" stroke-width="3" stroke-linejoin="round"/></svg>
<div class="abs pf" style="left:27px;top:1756px;font-size:20px;letter-spacing:1.2px;line-height:28px;color:#000;white-space:nowrap">0.000</div>
<div class="abs" style="left:53px;top:1759px;width:3px;height:20px;background:rgba(255,60,60,0.8)"></div>
<div class="abs pf" style="left:1240px;top:1756px;width:50px;overflow:hidden;font-size:20px;letter-spacing:1.2px;line-height:28px;color:#000;white-space:nowrap">6.875</div>
<div class="abs" style="left:4px;top:1830px;width:1282px;height:15px;background:#b0b0b0;border-radius:8px"></div>
<div class="abs pf" style="left:4.5px;top:1855px;font-size:20px;letter-spacing:1.15px;line-height:28px;color:#000;white-space:nowrap">Current Time (s)</div>
<div class="abs" style="left:175px;top:1848px;width:81px;height:41px;background:#fff"></div>
<div class="abs pf" style="left:180.5px;top:1855px;font-size:20px;letter-spacing:1.2px;line-height:28px;color:#000;white-space:nowrap">0.000 s</div>
<svg class="abs" style="left:545.2px;top:1848.1px" width="39.7" height="39.6" viewBox="0 0 39.7 39.6"><rect width="39.7" height="39.6" fill="#696969"/><path d="M6.65 6.9V29.9" stroke="#000" stroke-width="3.7"/><path d="M10 18.4L20.7 8.2V28.6Z M23.2 18.4L33.9 8.2V28.6Z" fill="#000" stroke="#000" stroke-width="2" stroke-linejoin="round"/></svg>
<svg class="abs" style="left:587.2px;top:1848.1px" width="35.6" height="39.6" viewBox="0 0 35.6 39.6"><rect width="35.6" height="39.6" fill="#696969"/><path d="M6.1 5.6L28.6 18.7L6.1 31.7Z" fill="#000" stroke="#000" stroke-width="3" stroke-linejoin="round"/></svg>
<svg class="abs" style="left:625.2px;top:1848.1px" width="35.6" height="39.6" viewBox="0 0 35.6 39.6"><rect width="35.6" height="39.6" fill="#696969"/><rect x="4.8" y="5.5" width="26.2" height="26.3" rx="2.6" fill="#000"/></svg>
<svg class="abs" style="left:663px;top:1848.1px" width="39.7" height="39.6" viewBox="0 0 39.7 39.6"><rect width="39.7" height="39.6" fill="#696969"/><path d="M33 6.9V29.9" stroke="#000" stroke-width="3.7"/><path d="M29.6 18.4L18.9 8.2V28.6Z M16.4 18.4L5.7 8.2V28.6Z" fill="#000" stroke="#000" stroke-width="2" stroke-linejoin="round"/></svg>
<svg class="abs" style="left:705.2px;top:1848.1px" width="39.7" height="39.6" viewBox="0 0 39.7 39.6"><rect width="39.7" height="39.6" fill="#696969"/><path d="M29.03 27.55A12.65 12.65 0 1 1 29.9 10.4" fill="none" stroke="#e8e8e8" stroke-width="4.5"/><path d="M34.8 4V16.7H21.8Z" fill="#e8e8e8"/></svg>
<svg class="abs" style="left:1078.2px;top:1848.1px" width="45.5" height="39.6" viewBox="0 0 45.5 39.6"><rect width="45.5" height="39.6" fill="#696969"/><circle cx="20" cy="15.8" r="9.75" fill="none" stroke="#000" stroke-width="4.6"/><path d="M27.6 23.4L34.6 30.4" stroke="#000" stroke-width="5" stroke-linecap="round"/><path d="M14.6 15.8H25.6M20.1 10.8V20.8" stroke="#000" stroke-width="3.7"/></svg>
<svg class="abs" style="left:1126.2px;top:1848.1px" width="45.5" height="39.6" viewBox="0 0 45.5 39.6"><rect width="45.5" height="39.6" fill="#696969"/><circle cx="20" cy="15.8" r="9.75" fill="none" stroke="#000" stroke-width="4.6"/><path d="M27.6 23.4L34.6 30.4" stroke="#000" stroke-width="5" stroke-linecap="round"/><path d="M14.6 15.8H25.6" stroke="#000" stroke-width="3.7"/></svg>
<svg class="abs" style="left:1174.3px;top:1848.1px" width="45.5" height="39.6" viewBox="0 0 45.5 39.6"><rect width="45.5" height="39.6" fill="#696969"/><g transform="translate(1.2 0)"><circle cx="20" cy="15.8" r="9.75" fill="none" stroke="#000" stroke-width="4.6"/><path d="M27.6 23.4L34.6 30.4" stroke="#000" stroke-width="5" stroke-linecap="round"/></g><path d="M4.3 12V34.5M40.5 12V34.5" stroke="#000" stroke-width="1.3"/></svg>
<svg class="abs" style="left:1222.3px;top:1848.1px" width="45.5" height="39.6" viewBox="0 0 45.5 39.6"><rect width="45.5" height="39.6" fill="#696969"/><circle cx="20" cy="15.8" r="9.75" fill="none" stroke="#000" stroke-width="4.6"/><path d="M27.6 23.4L34.6 30.4" stroke="#000" stroke-width="5" stroke-linecap="round"/></svg>
<div class="abs" style="left:1289px;top:121px;width:1px;height:1769px;background:#3c3c3c"></div>
<div class="abs" style="left:1px;top:121px;width:1289px;height:1px;background:#3a3a3a"></div>
<div class="abs" style="left:1px;top:283px;width:56px;height:213px;overflow:hidden"><div class="abs pf" style="left:0;width:51px;top:-5.5px;text-align:right;font-size:20px;letter-spacing:1.2px;line-height:28px;color:#000;white-space:nowrap">0.2</div></div>
<div class="abs" style="left:1px;top:283px;width:56px;height:213px;overflow:hidden"><div class="abs pf" style="left:0;width:51px;top:48.5px;text-align:right;font-size:20px;letter-spacing:1.2px;line-height:28px;color:#000;white-space:nowrap">0.1</div></div>
<div class="abs" style="left:1px;top:283px;width:56px;height:213px;overflow:hidden"><div class="abs pf" style="left:0;width:51px;top:103.5px;text-align:right;font-size:20px;letter-spacing:1.2px;line-height:28px;color:#000;white-space:nowrap">0</div></div>
<div class="abs" style="left:1px;top:283px;width:56px;height:213px;overflow:hidden"><div class="abs pf" style="left:0;width:51px;top:158.5px;text-align:right;font-size:20px;letter-spacing:1.2px;line-height:28px;color:#000;white-space:nowrap">-0.1</div></div>
<svg class="abs" style="left:59px;top:1254px" width="1209" height="213" viewBox="0 0 1209 213" fill="none"><rect x="0" y="202.0" width="1209" height="2" fill="#ececec"/><rect x="0" y="202.5" width="5" height="1" fill="#b4b4b4"/><rect x="0" y="154.0" width="1209" height="2" fill="#ececec"/><rect x="0" y="154.5" width="5" height="1" fill="#b4b4b4"/><rect x="0" y="106.0" width="1209" height="2" fill="#ececec"/><rect x="0" y="106.5" width="5" height="1" fill="#b4b4b4"/><rect x="0" y="58.0" width="1209" height="2" fill="#ececec"/><rect x="0" y="58.5" width="5" height="1" fill="#b4b4b4"/><rect x="0" y="10.0" width="1209" height="2" fill="#ececec"/><rect x="0" y="10.5" width="5" height="1" fill="#b4b4b4"/><path d="M-1 87.8H157L158.5 49.4H416.5L418 64.5H1209" stroke="#000" stroke-width="2"/><path d="M-1 107.0H157L158.5 79.6H416L418 107.0H1209" stroke="#0000ff" stroke-width="2"/><path d="M-1 200.6H416L418 164.6H502.5L504.5 203.0H1209" stroke="#005a00" stroke-width="2"/><path d="M-1 107.3H1209" stroke="#008a9c" stroke-width="3"/></svg>
<div class="abs" style="left:1px;top:1254px;width:56px;height:213px;overflow:hidden"><div class="abs pf" style="left:0;width:51px;top:-3.0px;text-align:right;font-size:20px;letter-spacing:1.2px;line-height:28px;color:#000;white-space:nowrap">2</div></div>
<div class="abs" style="left:1px;top:1254px;width:56px;height:213px;overflow:hidden"><div class="abs pf" style="left:0;width:51px;top:45.0px;text-align:right;font-size:20px;letter-spacing:1.2px;line-height:28px;color:#000;white-space:nowrap">1.5</div></div>
<div class="abs" style="left:1px;top:1254px;width:56px;height:213px;overflow:hidden"><div class="abs pf" style="left:0;width:51px;top:93.0px;text-align:right;font-size:20px;letter-spacing:1.2px;line-height:28px;color:#000;white-space:nowrap">1</div></div>
<div class="abs" style="left:1px;top:1254px;width:56px;height:213px;overflow:hidden"><div class="abs pf" style="left:0;width:51px;top:141.0px;text-align:right;font-size:20px;letter-spacing:1.2px;line-height:28px;color:#000;white-space:nowrap">0.5</div></div>
<div class="abs" style="left:1px;top:1254px;width:56px;height:213px;overflow:hidden"><div class="abs pf" style="left:0;width:51px;top:190.0px;text-align:right;font-size:20px;letter-spacing:1.2px;line-height:28px;color:#000;white-space:nowrap">0</div></div>
<svg class="abs" style="left:59px;top:1505px" width="1209" height="209" viewBox="0 0 1209 209" fill="none" stroke-linejoin="round"><rect x="0" y="201.7" width="1209" height="2" fill="#ececec"/><rect x="0" y="202.2" width="5" height="1" fill="#b4b4b4"/><rect x="0" y="153.6" width="1209" height="2" fill="#ececec"/><rect x="0" y="154.1" width="5" height="1" fill="#b4b4b4"/><rect x="0" y="105.4" width="1209" height="2" fill="#ececec"/><rect x="0" y="105.9" width="5" height="1" fill="#b4b4b4"/><rect x="0" y="57.2" width="1209" height="2" fill="#ececec"/><rect x="0" y="57.8" width="5" height="1" fill="#b4b4b4"/><rect x="0" y="9.1" width="1209" height="2" fill="#ececec"/><rect x="0" y="9.6" width="5" height="1" fill="#b4b4b4"/><path d="M144.0 106.4C150.7 108.8 157.3 111.2 164.0 113.7C168.7 115.5 173.3 117.6 178.0 119.2C182.7 120.8 187.3 122.4 192.0 123.3C196.7 124.3 201.3 125.0 206.0 125.5C217.0 126.5 228.0 127.6 239.0 127.6C247.7 127.6 256.3 127.5 265.0 127.4C285.0 127.2 305.0 126.9 325.0 126.6C341.3 126.4 357.7 126.2 374.0 125.7C386.0 125.3 398.0 124.4 410.0 123.5C419.7 122.8 429.3 121.6 439.0 120.6C443.7 120.0 448.3 118.9 453.0 118.9C469.0 118.9 485.0 120.8 501.0 120.8C517.0 120.8 533.0 120.8 549.0 120.7C561.3 120.6 573.7 119.8 586.0 118.9C594.0 118.3 602.0 116.6 610.0 115.1C619.7 113.2 629.3 109.0 639.0 108.3C651.7 107.5 664.3 106.9 677.0 106.9C685.0 106.9 693.0 113.0 701.0 115.8C709.0 118.7 717.0 122.6 725.0 124.2C733.3 125.9 741.7 126.9 750.0 127.9C766.0 129.8 782.0 131.2 798.0 132.7C811.7 134.0 825.3 135.6 839.0 136.3C872.3 137.8 905.7 138.6 939.0 139.1C972.3 139.7 1005.7 140.2 1039.0 140.3C1095.3 140.4 1151.7 140.4 1208.0 140.5" stroke="#9dbbff" stroke-width="1.76"/><path d="M139.0 106.4C147.3 107.7 155.7 110.3 164.0 110.3H239.0C282.3 110.3 325.7 110.2 369.0 109.7C371.0 109.6 373.0 106.1 375.0 104.5C386.7 94.8 398.3 81.5 410.0 77.5C419.7 74.2 429.3 72.8 439.0 71.1C447.7 69.5 456.3 67.7 465.0 66.9C477.0 65.8 489.0 64.7 501.0 64.7H537.0C549.3 64.7 561.7 66.2 574.0 67.4C586.0 68.5 598.0 70.4 610.0 72.3C619.7 73.8 629.3 75.4 639.0 77.7C649.0 80.0 659.0 83.4 669.0 87.1C679.0 90.8 689.0 100.0 699.0 100.6C709.0 101.2 719.0 101.6 729.0 101.6C749.0 101.6 769.0 97.5 789.0 96.8C822.3 95.5 855.7 94.4 889.0 94.4H1006.0C1014.7 94.4 1023.3 94.5 1032.0 94.8C1037.0 95.0 1042.0 102.5 1047.0 106.4" stroke="#7ffbff" stroke-width="1.76"/><path d="M375.0 106.4C386.7 97.4 398.3 83.3 410.0 79.4C419.7 76.2 429.3 74.7 439.0 73.2C459.7 69.9 480.3 66.0 501.0 66.0C525.3 66.0 549.7 67.0 574.0 68.4C595.7 69.6 617.3 73.3 639.0 79.0C650.7 82.0 662.3 92.4 674.0 96.8C682.3 99.9 690.7 104.4 699.0 104.5C868.7 106.3 1038.3 105.8 1208.0 106.4" stroke="#8a7000" stroke-width="1.76"/><path d="M375.0 106.4C386.7 98.4 398.3 86.4 410.0 82.3C419.7 78.9 429.3 77.2 439.0 75.3C447.7 73.6 456.3 71.8 465.0 71.1C477.0 70.0 489.0 69.0 501.0 69.0C513.0 69.0 525.0 69.1 537.0 69.2C549.3 69.4 561.7 70.7 574.0 71.7C586.0 72.8 598.0 74.2 610.0 75.9C619.7 77.2 629.3 78.5 639.0 80.7C649.0 83.0 659.0 88.7 669.0 92.0C675.7 94.1 682.3 97.7 689.0 97.7C701.0 97.7 713.0 95.0 725.0 94.1C737.3 93.1 749.7 92.2 762.0 91.7C787.7 90.5 813.3 90.1 839.0 89.3C872.3 88.2 905.7 86.4 939.0 85.7C972.3 85.0 1005.7 84.4 1039.0 84.3C1095.3 83.9 1151.7 83.9 1208.0 83.7" stroke="#a0524a" stroke-width="1.76"/><path d="M375.0 106.4C386.3 101.3 397.7 94.5 409.0 91.0C419.0 88.0 429.0 85.5 439.0 84.1C452.3 82.1 465.7 80.6 479.0 79.9C492.3 79.2 505.7 78.5 519.0 78.5C539.0 78.5 559.0 79.1 579.0 79.9C595.7 80.5 612.3 82.7 629.0 85.5C639.0 87.1 649.0 90.8 659.0 93.8C667.3 96.4 675.7 100.1 684.0 102.2C690.7 103.9 697.3 105.0 704.0 106.4" stroke="#8fa88f" stroke-width="1.94"/><path d="M375.0 106.4C386.3 101.6 397.7 95.3 409.0 92.1C419.0 89.3 429.0 87.0 439.0 85.6C452.3 83.8 465.7 82.3 479.0 81.7C492.3 81.0 505.7 80.4 519.0 80.4C539.0 80.4 559.0 81.0 579.0 81.7C595.7 82.3 612.3 84.3 629.0 86.9C639.0 88.4 649.0 91.9 659.0 94.7C667.3 97.1 675.7 100.5 684.0 102.5C690.7 104.1 697.3 105.1 704.0 106.4" stroke="#8c8cff" stroke-width="1.94"/><path d="M375.0 106.4C386.3 102.0 397.7 96.1 409.0 93.2C419.0 90.5 429.0 88.4 439.0 87.1C452.3 85.4 465.7 84.1 479.0 83.5C492.3 82.9 505.7 82.3 519.0 82.3C539.0 82.3 559.0 82.9 579.0 83.5C595.7 84.1 612.3 86.0 629.0 88.3C639.0 89.8 649.0 92.9 659.0 95.6C667.3 97.8 675.7 101.0 684.0 102.8C690.7 104.3 697.3 105.2 704.0 106.4" stroke="#ff96d2" stroke-width="1.94"/><path d="M375.0 106.4C386.3 102.3 397.7 96.8 409.0 94.0C419.0 91.5 429.0 89.5 439.0 88.3C452.3 86.7 465.7 85.5 479.0 84.9C492.3 84.3 505.7 83.8 519.0 83.8C539.0 83.8 559.0 84.3 579.0 84.9C595.7 85.4 612.3 87.2 629.0 89.4C639.0 90.8 649.0 93.7 659.0 96.2C667.3 98.3 675.7 101.3 684.0 103.0C690.7 104.4 697.3 105.3 704.0 106.4" stroke="#8fa88f" stroke-width="1.94"/><path d="M375.0 106.4C386.3 102.5 397.7 97.4 409.0 94.7C419.0 92.4 429.0 90.6 439.0 89.5C452.3 88.0 465.7 86.8 479.0 86.3C492.3 85.7 505.7 85.2 519.0 85.2C539.0 85.2 559.0 85.7 579.0 86.3C595.7 86.8 612.3 88.4 629.0 90.5C639.0 91.8 649.0 94.5 659.0 96.9C667.3 98.8 675.7 101.6 684.0 103.2C690.7 104.5 697.3 105.3 704.0 106.4" stroke="#ff1cb4" stroke-width="1.94"/><path d="M375.0 106.4C386.3 102.9 397.7 98.2 409.0 95.8C419.0 93.7 429.0 92.0 439.0 91.0C452.3 89.6 465.7 88.6 479.0 88.1C492.3 87.6 505.7 87.1 519.0 87.1C539.0 87.1 559.0 87.6 579.0 88.1C595.7 88.6 612.3 90.1 629.0 92.0C639.0 93.1 649.0 95.6 659.0 97.7C667.3 99.5 675.7 102.0 684.0 103.5C690.7 104.7 697.3 105.4 704.0 106.4" stroke="#ff8000" stroke-width="1.94"/><path d="M375.0 106.4C386.3 103.1 397.7 98.8 409.0 96.6C419.0 94.7 429.0 93.1 439.0 92.1C452.3 90.9 465.7 89.9 479.0 89.5C492.3 89.0 505.7 88.6 519.0 88.6C539.0 88.6 559.0 89.0 579.0 89.5C595.7 89.9 612.3 91.3 629.0 93.0C639.0 94.1 649.0 96.4 659.0 98.4C667.3 100.0 675.7 102.4 684.0 103.7C690.7 104.8 697.3 105.5 704.0 106.4" stroke="#ffc300" stroke-width="1.94"/><path d="M375.0 106.4C386.3 103.4 397.7 99.4 409.0 97.4C419.0 95.6 429.0 94.2 439.0 93.3C452.3 92.2 465.7 91.3 479.0 90.8C492.3 90.4 505.7 90.0 519.0 90.0C539.0 90.0 559.0 90.4 579.0 90.8C595.7 91.2 612.3 92.5 629.0 94.1C639.0 95.1 649.0 97.2 659.0 99.0C667.3 100.5 675.7 102.7 684.0 103.9C690.7 104.9 697.3 105.6 704.0 106.4" stroke="#9dbbff" stroke-width="1.94"/><path d="M375.0 106.4C386.3 103.7 397.7 100.0 409.0 98.2C419.0 96.6 429.0 95.2 439.0 94.5C452.3 93.4 465.7 92.6 479.0 92.2C492.3 91.8 505.7 91.5 519.0 91.5C539.0 91.5 559.0 91.8 579.0 92.2C595.7 92.6 612.3 93.7 629.0 95.2C639.0 96.1 649.0 98.1 659.0 99.7C667.3 101.0 675.7 103.0 684.0 104.2C690.7 105.1 697.3 105.7 704.0 106.4" stroke="#b44ee0" stroke-width="1.94"/><path d="M375.0 106.4C386.3 103.9 397.7 100.7 409.0 99.0C419.0 97.5 429.0 96.3 439.0 95.6C452.3 94.7 465.7 93.9 479.0 93.6C492.3 93.3 505.7 92.9 519.0 92.9C539.0 92.9 559.0 93.2 579.0 93.6C595.7 93.9 612.3 95.0 629.0 96.3C639.0 97.1 649.0 98.9 659.0 100.3C667.3 101.6 675.7 103.3 684.0 104.4C690.7 105.2 697.3 105.7 704.0 106.4" stroke="#e6104f" stroke-width="1.94"/><path d="M375.0 106.4C386.3 104.3 397.7 101.5 409.0 100.0C419.0 98.8 429.0 97.8 439.0 97.2C452.3 96.3 465.7 95.7 479.0 95.4C492.3 95.1 505.7 94.8 519.0 94.8C539.0 94.8 559.0 95.1 579.0 95.4C595.7 95.7 612.3 96.6 629.0 97.7C639.0 98.4 649.0 99.9 659.0 101.2C667.3 102.3 675.7 103.8 684.0 104.7C690.7 105.4 697.3 105.8 704.0 106.4" stroke="#008c8c" stroke-width="1.94"/><path d="M375.0 106.4C386.3 104.5 397.7 102.1 409.0 100.8C419.0 99.7 429.0 98.8 439.0 98.3C452.3 97.6 465.7 97.0 479.0 96.8C492.3 96.5 505.7 96.3 519.0 96.3C539.0 96.3 559.0 96.5 579.0 96.8C595.7 97.0 612.3 97.8 629.0 98.8C639.0 99.4 649.0 100.7 659.0 101.8C667.3 102.8 675.7 104.1 684.0 104.9C690.7 105.5 697.3 105.9 704.0 106.4" stroke="#80005a" stroke-width="1.94"/><path d="M375.0 106.4C386.3 104.8 397.7 102.8 409.0 101.7C419.0 100.8 429.0 100.1 439.0 99.6C452.3 99.0 465.7 98.6 479.0 98.3C492.3 98.1 505.7 97.9 519.0 97.9C539.0 97.9 559.0 98.1 579.0 98.3C595.7 98.5 612.3 99.2 629.0 100.0C639.0 100.5 649.0 101.7 659.0 102.6C667.3 103.4 675.7 104.5 684.0 105.1C690.7 105.6 697.3 106.0 704.0 106.4" stroke="#1f5f9f" stroke-width="1.94"/><path d="M375.0 106.4C386.3 105.2 397.7 103.5 409.0 102.7C419.0 102.0 429.0 101.4 439.0 101.0C452.3 100.5 465.7 100.2 479.0 100.0C492.3 99.8 505.7 99.7 519.0 99.7C539.0 99.7 559.0 99.8 579.0 100.0C595.7 100.2 612.3 100.7 629.0 101.3C639.0 101.7 649.0 102.6 659.0 103.4C667.3 104.0 675.7 104.9 684.0 105.4C690.7 105.8 697.3 106.1 704.0 106.4" stroke="#000000" stroke-width="1.94"/><path d="M375.0 106.4C386.3 105.5 397.7 104.3 409.0 103.8C419.0 103.2 429.0 102.8 439.0 102.5C452.3 102.2 465.7 101.9 479.0 101.8C492.3 101.7 505.7 101.6 519.0 101.6C539.0 101.6 559.0 101.7 579.0 101.8C595.7 101.9 612.3 102.3 629.0 102.8C639.0 103.1 649.0 103.7 659.0 104.2C667.3 104.7 675.7 105.3 684.0 105.7C690.7 106.0 697.3 106.2 704.0 106.4" stroke="#6b5b7b" stroke-width="1.94"/><path d="M375.0 106.4C386.3 105.8 397.7 105.0 409.0 104.5C419.0 104.2 429.0 103.9 439.0 103.7C452.3 103.5 465.7 103.3 479.0 103.2C492.3 103.1 505.7 103.0 519.0 103.0C539.0 103.0 559.0 103.1 579.0 103.2C595.7 103.3 612.3 103.5 629.0 103.9C639.0 104.1 649.0 104.5 659.0 104.9C667.3 105.2 675.7 105.6 684.0 105.9C690.7 106.1 697.3 106.2 704.0 106.4" stroke="#005f00" stroke-width="1.94"/><path d="M375.0 106.4C386.3 104.8 397.7 102.5 409.0 101.6C425.7 100.2 442.3 99.1 459.0 98.7C479.0 98.3 499.0 97.9 519.0 97.9C545.7 97.9 572.3 98.2 599.0 98.7C615.7 99.0 632.3 100.3 649.0 101.6C662.3 102.6 675.7 104.8 689.0 106.4" stroke="#1f5f9f" stroke-width="2.64"/><path d="M375.0 106.4C386.3 100.0 397.7 90.2 409.0 87.1C419.7 84.2 430.3 83.0 441.0 81.4C449.0 80.2 457.0 78.9 465.0 78.3C477.0 77.4 489.0 76.5 501.0 76.5C513.0 76.5 525.0 76.6 537.0 76.7C549.3 76.9 561.7 77.9 574.0 78.9C586.0 79.8 598.0 81.5 610.0 83.1C619.7 84.4 629.3 85.4 639.0 87.3C649.0 89.3 659.0 94.1 669.0 96.8C679.0 99.4 689.0 101.5 699.0 103.5C704.0 104.5 709.0 105.4 714.0 106.4" stroke="#00ff00" stroke-width="2.11"/><path d="M99.0 106.4C107.0 101.3 115.0 98.0 123.0 91.0C127.7 86.9 132.3 78.4 137.0 73.7C141.7 68.9 146.3 64.6 151.0 61.6C154.3 59.5 157.7 57.6 161.0 56.3C171.3 52.3 181.7 49.7 192.0 47.7C207.7 44.5 223.3 41.3 239.0 40.4C247.7 39.9 256.3 39.5 265.0 39.5C281.0 39.5 297.0 41.7 313.0 43.3C325.3 44.6 337.7 46.2 350.0 48.1C362.0 50.0 374.0 51.9 386.0 54.9C390.3 56.0 394.7 57.2 399.0 59.2C403.3 61.2 407.7 65.8 412.0 69.3C416.0 72.6 420.0 76.9 424.0 79.4C429.0 82.7 434.0 84.9 439.0 87.1C445.7 90.1 452.3 94.2 459.0 94.8C472.3 96.1 485.7 96.1 499.0 96.8" stroke="#9dbbff" stroke-width="1.76"/><path d="M99.0 106.4C107.0 100.9 115.0 97.2 123.0 90.0C127.7 85.8 132.3 77.4 137.0 72.7C141.7 68.0 146.3 63.7 151.0 60.7C154.3 58.5 157.7 56.6 161.0 55.4C171.3 51.4 181.7 48.8 192.0 46.7C207.7 43.5 223.3 40.4 239.0 39.5C247.7 39.0 256.3 38.5 265.0 38.5C281.0 38.5 297.0 40.5 313.0 42.1C325.3 43.3 337.7 45.0 350.0 46.9C362.0 48.7 374.0 50.7 386.0 53.5C390.0 54.5 394.0 55.4 398.0 57.2C402.0 59.0 406.0 63.5 410.0 66.9C414.0 70.3 418.0 74.7 422.0 77.5C427.7 81.5 433.3 84.7 439.0 87.1C445.7 90.0 452.3 93.0 459.0 93.9C472.3 95.6 485.7 96.8 499.0 96.8H579.0C599.0 96.8 619.0 99.7 639.0 99.7C647.7 99.7 656.3 97.7 665.0 94.8C673.0 92.2 681.0 69.8 689.0 65.2C693.0 62.9 697.0 61.4 701.0 60.3C717.3 56.0 733.7 54.6 750.0 51.9C766.0 49.2 782.0 46.3 798.0 44.0C811.7 42.0 825.3 40.4 839.0 38.6C851.7 37.0 864.3 35.1 877.0 33.8C893.0 32.1 909.0 30.6 925.0 29.6C941.3 28.5 957.7 27.6 974.0 27.1C995.7 26.5 1017.3 25.9 1039.0 25.9H1208.0" stroke="#6b5b7b" stroke-width="1.94"/><path d="M99.0 106.4C107.0 100.8 115.0 97.0 123.0 89.5C127.7 85.2 132.3 77.6 137.0 71.7C141.7 65.9 146.3 59.1 151.0 54.4C154.0 51.4 157.0 48.2 160.0 46.7C166.0 43.7 172.0 42.6 178.0 40.9C187.3 38.2 196.7 35.6 206.0 33.7C217.0 31.5 228.0 29.3 239.0 28.4C250.0 27.5 261.0 26.5 272.0 26.5C282.7 26.5 293.3 27.5 304.0 28.4C314.0 29.3 324.0 31.4 334.0 33.2C347.3 35.6 360.7 38.0 374.0 41.5C379.0 42.8 384.0 44.0 389.0 46.3C392.7 48.0 396.3 51.2 400.0 54.8C403.3 58.0 406.7 63.5 410.0 67.9C414.0 73.1 418.0 79.8 422.0 83.8C426.0 87.8 430.0 91.4 434.0 93.4C439.0 95.9 444.0 97.9 449.0 98.7C459.0 100.3 469.0 100.2 479.0 101.6C485.7 102.5 492.3 104.8 499.0 106.4" stroke="#ff8000" stroke-width="1.76"/><path d="M99.0 106.4C107.0 101.6 115.0 98.2 123.0 92.0C127.7 88.3 132.3 81.8 137.0 77.5C141.7 73.2 146.3 68.8 151.0 66.0C154.3 64.0 157.7 62.1 161.0 61.1C171.3 58.1 181.7 56.9 192.0 55.4C207.7 53.1 223.3 50.4 239.0 49.9C247.7 49.6 256.3 49.3 265.0 49.3C281.0 49.3 297.0 51.0 313.0 52.4C325.3 53.5 337.7 55.7 350.0 57.2C362.0 58.7 374.0 59.9 386.0 61.4C390.0 61.9 394.0 62.2 398.0 63.1C402.0 64.0 406.0 67.5 410.0 70.5C414.0 73.4 418.0 78.8 422.0 81.4C427.7 85.0 433.3 87.4 439.0 89.7C445.7 92.5 452.3 96.2 459.0 96.8C472.3 98.0 485.7 98.7 499.0 98.7H579.0C599.0 98.7 619.0 100.6 639.0 100.6C645.7 100.6 652.3 87.2 659.0 82.0C665.0 77.4 671.0 74.1 677.0 70.0C681.0 67.2 685.0 63.6 689.0 61.5C693.0 59.5 697.0 57.8 701.0 56.7C717.3 52.2 733.7 50.5 750.0 47.7C766.0 44.9 782.0 42.2 798.0 40.0C811.7 38.1 825.3 36.7 839.0 35.0C851.7 33.4 864.3 31.7 877.0 30.3C893.0 28.6 909.0 27.0 925.0 25.9C941.3 24.9 957.7 24.0 974.0 23.6C995.7 23.1 1017.3 22.6 1039.0 22.6H1208.0" stroke="#b44ee0" stroke-width="1.94"/><path d="M104.0 106.4C110.3 103.2 116.7 101.1 123.0 96.8C127.7 93.6 132.3 87.1 137.0 82.7C141.7 78.3 146.3 72.5 151.0 70.3C155.3 68.2 159.7 66.8 164.0 66.0C173.3 64.0 182.7 63.4 192.0 62.1C204.3 60.4 216.7 58.1 229.0 57.2C241.0 56.3 253.0 55.4 265.0 55.4C281.0 55.4 297.0 56.2 313.0 57.2C325.3 57.9 337.7 60.5 350.0 62.0C362.0 63.5 374.0 64.3 386.0 66.2C390.0 66.9 394.0 67.5 398.0 68.8C400.7 69.7 403.3 72.2 406.0 74.0C409.7 76.6 413.3 79.5 417.0 82.5C421.0 85.8 425.0 89.7 429.0 92.9C432.3 95.6 435.7 98.6 439.0 100.6C443.0 103.0 447.0 104.5 451.0 106.4" stroke="#0000ff" stroke-width="2.11"/><path d="M104.0 106.4C110.3 103.5 116.7 101.7 123.0 97.7C127.7 94.8 132.3 88.5 137.0 84.3C141.7 80.0 146.3 73.9 151.0 72.3C160.0 69.2 169.0 68.3 178.0 66.9C195.0 64.3 212.0 62.1 229.0 60.8C241.0 59.9 253.0 58.6 265.0 58.6C281.0 58.6 297.0 59.4 313.0 60.2C325.3 60.8 337.7 62.9 350.0 64.4C362.0 65.9 374.0 67.0 386.0 69.2C390.0 70.0 394.0 71.0 398.0 72.3C402.0 73.6 406.0 75.6 410.0 77.7C414.0 79.8 418.0 82.3 422.0 84.9C427.7 88.6 433.3 93.7 439.0 97.0C444.0 99.9 449.0 103.1 454.0 104.5C457.3 105.4 460.7 105.8 464.0 106.4" stroke="#000000" stroke-width="2.11"/><path d="M109.0 106.4C118.3 101.6 127.7 98.2 137.0 92.0C141.7 88.8 146.3 82.2 151.0 79.4C155.3 76.9 159.7 74.6 164.0 73.7C173.3 71.6 182.7 70.8 192.0 69.8C207.7 68.2 223.3 66.5 239.0 66.0C247.7 65.7 256.3 65.4 265.0 65.4C293.3 65.4 321.7 67.0 350.0 68.8C362.0 69.6 374.0 71.0 386.0 73.2C394.0 74.6 402.0 78.2 410.0 81.4C419.7 85.1 429.3 91.1 439.0 94.8C445.7 97.4 452.3 99.7 459.0 101.6C465.7 103.5 472.3 104.8 479.0 106.4" stroke="#80005a" stroke-width="1.94"/><path d="M109.0 106.4C118.3 101.9 127.7 98.8 137.0 92.9C141.7 90.0 146.3 84.0 151.0 81.4C155.3 78.9 159.7 76.6 164.0 75.6C173.3 73.5 182.7 72.6 192.0 71.7C207.7 70.2 223.3 68.6 239.0 68.4C247.7 68.2 256.3 68.1 265.0 68.1C293.3 68.1 321.7 69.2 350.0 70.8C362.0 71.4 374.0 72.9 386.0 75.1C394.0 76.6 402.0 80.5 410.0 83.3C419.7 86.7 429.3 91.5 439.0 93.9C445.7 95.5 452.3 97.7 459.0 97.7H499.0" stroke="#ffc300" stroke-width="2.11"/><path d="M109.0 106.4C118.3 102.6 127.7 100.5 137.0 95.1C141.7 92.4 146.3 85.8 151.0 82.7C155.3 79.8 159.7 76.5 164.0 75.8C173.3 74.2 182.7 73.8 192.0 73.2C207.7 72.2 223.3 71.0 239.0 71.0C247.7 71.0 256.3 71.0 265.0 71.1C293.3 71.2 321.7 71.9 350.0 73.2C362.0 73.7 374.0 75.4 386.0 77.5C394.0 78.9 402.0 81.6 410.0 84.3C419.7 87.4 429.3 92.9 439.0 95.8C445.7 97.8 452.3 100.3 459.0 100.6C472.3 101.3 485.7 101.4 499.0 101.6C545.7 102.1 592.3 102.5 639.0 102.5C651.7 102.5 664.3 102.1 677.0 100.6C681.0 100.2 685.0 86.9 689.0 84.4C693.0 82.0 697.0 80.7 701.0 79.6C709.0 77.4 717.0 76.4 725.0 74.8C733.3 73.2 741.7 71.3 750.0 70.0C766.0 67.5 782.0 65.9 798.0 63.9C811.7 62.3 825.3 60.7 839.0 59.1C851.7 57.7 864.3 56.0 877.0 54.9C893.0 53.5 909.0 52.4 925.0 51.6C941.3 50.8 957.7 50.0 974.0 49.7C995.7 49.3 1017.3 48.9 1039.0 48.9H1208.0" stroke="#e6104f" stroke-width="2.82"/><path d="M109.0 106.4C118.3 103.2 127.7 101.6 137.0 96.8C141.7 94.4 146.3 87.9 151.0 84.7C155.3 81.8 159.7 78.3 164.0 77.5C173.3 75.7 182.7 75.3 192.0 74.6C207.7 73.5 223.3 72.2 239.0 72.2H265.0C293.3 72.2 321.7 73.2 350.0 74.6C362.0 75.2 374.0 76.9 386.0 79.0C394.0 80.3 402.0 83.1 410.0 85.7C419.7 88.8 429.3 94.0 439.0 96.8C445.7 98.7 452.3 101.4 459.0 101.6C519.0 103.2 579.0 103.5 639.0 103.5C651.7 103.5 664.3 103.1 677.0 101.6C681.0 101.1 685.0 88.2 689.0 85.7C693.0 83.2 697.0 82.0 701.0 80.9C709.0 78.7 717.0 77.6 725.0 76.1C733.3 74.4 741.7 72.6 750.0 71.3C766.0 68.7 782.0 67.0 798.0 65.0C811.7 63.3 825.3 61.8 839.0 60.2C851.7 58.7 864.3 56.9 877.0 55.8C893.0 54.5 909.0 53.5 925.0 52.7C941.3 51.8 957.7 51.0 974.0 50.6C995.7 50.2 1017.3 49.8 1039.0 49.8H1208.0" stroke="#ff2d8c" stroke-width="2.11"/><path d="M155.0 106.4C160.3 102.2 165.7 98.3 171.0 93.9C175.3 90.3 179.7 84.8 184.0 82.7C186.7 81.4 189.3 80.0 192.0 79.9C207.7 79.5 223.3 79.5 239.0 79.4C288.0 79.3 337.0 79.2 386.0 79.2C394.0 79.2 402.0 80.8 410.0 82.3C419.7 84.1 429.3 89.8 439.0 92.9C445.7 95.1 452.3 97.1 459.0 98.7C472.3 101.8 485.7 103.8 499.0 106.4" stroke="#ff1cb4" stroke-width="1.94"/><path d="M164.0 106.4C168.7 100.8 173.3 91.8 178.0 89.5C180.0 88.6 182.0 87.5 184.0 87.5H239.0C281.7 87.5 324.3 87.6 367.0 88.2C371.3 88.3 375.7 90.4 380.0 92.9C382.0 94.1 384.0 97.4 386.0 99.4C388.7 102.0 391.3 106.4 394.0 106.4H639.0C652.3 106.4 665.7 89.0 679.0 87.1C695.7 84.9 712.3 83.6 729.0 83.3C765.7 82.6 802.3 82.3 839.0 82.3H1034.0C1037.0 82.3 1040.0 90.8 1043.0 94.8C1046.0 98.9 1049.0 102.5 1052.0 106.4" stroke="#807a00" stroke-width="1.94"/><path d="M157.0 106.4C164.0 103.8 171.0 100.8 178.0 98.7C182.7 97.3 187.3 95.5 192.0 95.1C201.0 94.4 210.0 94.3 219.0 93.9C225.7 93.5 232.3 92.9 239.0 92.8C279.0 92.3 319.0 92.1 359.0 92.1C368.0 92.1 377.0 94.2 386.0 95.8C392.0 96.9 398.0 98.5 404.0 100.6C408.0 102.0 412.0 104.2 416.0 106.4C420.0 108.6 424.0 111.6 428.0 113.9C432.3 116.5 436.7 119.1 441.0 121.1C447.0 124.0 453.0 126.9 459.0 128.4C465.0 129.8 471.0 131.1 477.0 131.4C489.0 132.1 501.0 132.6 513.0 132.6C535.0 132.6 557.0 132.4 579.0 132.2C599.0 132.0 619.0 131.5 639.0 131.0C651.7 130.7 664.3 130.6 677.0 130.0C689.0 129.6 701.0 127.6 713.0 126.6C725.3 125.7 737.7 124.5 750.0 124.2C779.7 123.6 809.3 123.3 839.0 123.3C872.3 123.3 905.7 124.3 939.0 124.4C1028.7 124.6 1118.3 124.6 1208.0 124.7" stroke="#a00000" stroke-width="1.76"/><path d="M157.0 106.4C164.0 105.1 171.0 102.8 178.0 102.5C185.0 102.3 192.0 102.3 199.0 102.1C212.3 101.7 225.7 100.0 239.0 100.0H419.0C425.7 100.0 432.3 104.3 439.0 106.4C443.7 107.9 448.3 110.5 453.0 110.8C465.0 111.7 477.0 112.1 489.0 112.1H549.0C565.3 112.1 581.7 111.5 598.0 110.9C611.7 110.4 625.3 108.8 639.0 108.1C651.7 107.4 664.3 106.4 677.0 106.4C685.0 106.4 693.0 109.3 701.0 111.0C709.0 112.8 717.0 115.5 725.0 117.0C733.3 118.5 741.7 120.0 750.0 120.7C766.0 121.9 782.0 122.5 798.0 123.1C811.7 123.5 825.3 123.9 839.0 124.2C872.3 125.1 905.7 126.2 939.0 126.6C972.3 127.1 1005.7 127.5 1039.0 127.6C1095.3 127.7 1151.7 127.7 1208.0 127.7" stroke="#0044ff" stroke-width="1.94"/><path d="M149.0 106.4C154.0 107.7 159.0 108.9 164.0 110.3C168.7 111.5 173.3 113.3 178.0 114.4C182.7 115.5 187.3 117.0 192.0 117.0C207.7 117.1 223.3 117.1 239.0 117.1H398.0C402.0 117.1 406.0 116.6 410.0 116.0C414.0 115.4 418.0 112.9 422.0 111.5C426.0 110.2 430.0 108.6 434.0 107.8C437.3 107.2 440.7 106.9 444.0 106.4" stroke="#00ff00" stroke-width="2.29"/><path d="M7.0 106.4C11.3 105.9 15.5 105.6 19.8 104.8C24.0 104.0 28.3 101.9 32.5 99.9C36.7 98.0 41.0 95.2 45.2 92.3C49.5 89.4 53.7 85.9 58.0 82.3C62.3 78.7 66.5 74.7 70.8 70.7C75.0 66.7 79.3 62.4 83.5 58.2C87.7 54.1 92.0 49.8 96.2 45.8C100.5 41.8 104.7 37.8 109.0 34.2C113.3 30.6 117.5 27.1 121.8 24.2C126.0 21.3 130.3 18.5 134.5 16.6C138.7 14.6 143.0 12.5 147.2 11.7C151.5 10.9 155.7 10.1 160.0 10.1C166.7 10.1 173.3 11.4 180.0 12.5C186.3 13.6 192.7 15.6 199.0 17.8C206.0 20.2 213.0 23.9 220.0 27.4C227.0 30.9 234.0 34.9 241.0 39.0C253.0 46.1 265.0 54.4 277.0 62.1C289.0 69.8 301.0 78.4 313.0 84.9C321.3 89.4 329.7 93.7 338.0 97.0C344.0 99.3 350.0 101.2 356.0 103.0C360.0 104.2 364.0 106.4 368.0 106.4H639.0C649.7 106.4 660.3 96.3 671.0 89.3C675.0 86.6 679.0 81.8 683.0 79.6C687.0 77.5 691.0 75.6 695.0 74.8C701.0 73.6 707.0 72.4 713.0 72.4H738.0C742.0 72.4 746.0 73.3 750.0 73.7C754.0 74.0 758.0 74.3 762.0 74.6C774.0 75.6 786.0 76.5 798.0 77.5C811.7 78.6 825.3 80.1 839.0 80.8C852.3 81.5 865.7 81.9 879.0 82.3C889.0 82.7 899.0 82.7 909.0 83.3C915.7 83.7 922.3 85.4 929.0 87.1C934.3 88.6 939.7 91.7 945.0 93.9C948.3 95.2 951.7 97.2 955.0 97.7C965.3 99.2 975.7 99.2 986.0 100.1C994.0 100.8 1002.0 101.7 1010.0 102.5C1019.7 103.5 1029.3 105.2 1039.0 105.4C1065.7 106.1 1092.3 106.4 1119.0 106.4C1123.0 106.4 1126.9 105.4 1130.9 104.4C1134.9 103.4 1138.8 100.9 1142.8 98.5C1146.7 96.2 1150.7 92.9 1154.6 89.7C1158.6 86.6 1162.5 82.9 1166.5 79.4C1170.5 76.0 1174.4 72.3 1178.4 69.1C1182.3 66.0 1186.3 62.7 1190.2 60.4C1194.2 58.0 1198.1 55.5 1202.1 54.5C1206.1 53.5 1210.0 53.1 1214.0 52.5" stroke="#000080" stroke-width="1.94"/><path d="M747.0 73.7C750.0 72.8 753.0 72.6 756.0 71.2C758.0 70.2 760.0 65.5 762.0 64.0C764.3 62.3 766.7 60.8 769.0 60.3C771.7 59.8 774.3 59.4 777.0 59.4C780.0 59.4 783.0 60.4 786.0 61.5C788.7 62.5 791.3 64.7 794.0 67.6C796.0 69.8 798.0 74.5 800.0 78.5C802.0 82.4 804.0 87.7 806.0 91.7C808.0 95.6 810.0 100.1 812.0 102.5C813.3 104.2 814.7 105.1 816.0 106.4" stroke="#000080" stroke-width="1.94"/><path d="M896.0 106.4C898.7 102.7 901.3 98.8 904.0 95.3C907.0 91.4 910.0 86.5 913.0 84.4C916.3 82.1 919.7 80.4 923.0 79.6C926.3 78.9 929.7 78.2 933.0 78.2C935.3 78.2 937.7 79.2 940.0 80.2C941.7 80.9 943.3 82.6 945.0 84.4C946.7 86.3 948.3 90.9 950.0 92.9C951.7 95.0 953.3 96.1 955.0 97.7" stroke="#000080" stroke-width="1.94"/><path d="M178.0 106.4C179.9 89.4 181.8 73.9 183.7 55.4C184.8 44.7 185.9 24.7 187.0 20.7C188.9 13.8 190.8 9.1 192.7 9.1C194.1 9.1 195.6 12.0 197.0 14.9C198.5 18.0 200.1 26.3 201.6 34.2C203.0 41.4 204.4 52.8 205.8 62.1C207.2 71.4 208.6 82.9 210.0 90.0C211.3 96.8 212.7 106.4 214.0 106.4H747.0C748.7 106.4 750.3 75.9 752.0 60.2C753.2 48.5 754.5 29.8 755.7 24.5C757.7 16.0 759.7 9.1 761.7 9.1C764.1 9.1 766.6 13.1 769.0 18.1C770.6 21.4 772.2 32.6 773.8 42.3C775.4 51.9 777.0 69.5 778.6 78.5C780.6 89.7 782.6 102.0 784.6 105.0C785.1 105.6 785.5 105.9 786.0 106.4" stroke="#000000" stroke-width="1.76"/><path d="M216.0 106.4C218.7 103.8 221.3 101.5 224.0 98.7C227.1 95.4 230.3 91.6 233.4 88.1C234.3 87.0 235.3 85.5 236.2 84.9C239.0 83.3 241.9 81.9 244.7 81.9C247.5 81.9 250.2 84.2 253.0 86.2C255.9 88.2 258.7 92.8 261.6 95.8C264.0 98.3 266.4 101.3 268.8 103.0C270.8 104.5 272.8 106.4 274.8 106.4H320.7C323.5 106.4 326.2 101.1 329.0 98.2C331.9 95.2 334.7 91.2 337.6 88.6C340.0 86.4 342.4 83.9 344.8 83.1C347.6 82.2 350.4 81.4 353.2 81.4C356.0 81.4 358.9 84.7 361.7 87.3C364.1 89.6 366.6 94.1 369.0 97.0C371.4 99.8 373.8 102.9 376.2 104.5C377.5 105.3 378.7 106.4 380.0 106.4H659.0C663.0 106.4 667.0 103.9 671.0 101.6C677.0 98.2 683.0 85.4 689.0 82.0C693.0 79.8 697.0 78.3 701.0 77.2C709.2 75.0 717.3 73.9 725.5 72.4C733.7 70.9 741.8 69.5 750.0 68.2C766.0 65.5 782.0 62.5 798.0 60.3C811.7 58.5 825.3 57.1 839.0 55.5C851.7 54.0 864.3 52.4 877.0 51.3C893.0 49.8 909.0 48.5 925.0 47.7C941.3 46.8 957.7 46.0 974.0 45.6C995.7 45.2 1017.3 44.7 1039.0 44.7H1208.0" stroke="#005f00" stroke-width="2.11"/><path d="M639.0 106.4C645.7 104.8 652.3 104.5 659.0 101.6C663.0 99.8 667.0 89.4 671.0 84.4C675.0 79.5 679.0 75.1 683.0 71.2C687.0 67.2 691.0 62.6 695.0 60.3C701.1 56.9 707.3 54.9 713.4 53.0C725.5 49.4 737.5 47.4 749.6 44.7C765.7 41.1 781.8 37.6 797.9 34.4C811.6 31.6 825.3 28.9 839.0 26.6C851.7 24.4 864.3 22.3 877.0 20.5C893.2 18.2 909.3 15.8 925.5 14.5C941.6 13.1 957.6 11.8 973.7 11.4C995.5 11.0 1017.2 10.7 1039.0 10.6C1095.3 10.3 1151.7 10.3 1208.0 10.1" stroke="#d2ff00" stroke-width="1.94"/><path d="M639.0 106.4C647.7 103.2 656.3 101.7 665.0 96.8C673.0 92.2 681.0 72.7 689.0 67.9C693.0 65.5 697.0 63.8 701.0 62.8C717.3 58.6 733.7 57.0 750.0 54.9C766.0 52.8 782.0 51.3 798.0 49.6C811.7 48.1 825.3 46.8 839.0 45.2C851.7 43.8 864.3 41.8 877.0 40.7C893.0 39.4 909.0 38.5 925.0 37.7C941.3 37.0 957.7 36.1 974.0 35.9C995.7 35.6 1017.3 35.3 1039.0 35.3H1208.0" stroke="#8fa88f" stroke-width="1.76"/><path d="M639.0 106.4C647.7 103.5 656.3 102.3 665.0 97.7C673.0 93.5 681.0 74.2 689.0 69.3C693.0 66.9 697.0 65.1 701.0 64.0C717.3 59.8 733.7 58.3 750.0 56.1C766.0 54.0 782.0 52.5 798.0 50.7C811.7 49.2 825.3 47.8 839.0 46.2C851.7 44.7 864.3 42.5 877.0 41.4C893.0 40.0 909.0 39.2 925.0 38.4C941.3 37.6 957.7 36.7 974.0 36.5C995.7 36.2 1017.3 36.0 1039.0 36.0H1208.0" stroke="#9dbbff" stroke-width="1.76"/><path d="M639.0 101.6C649.7 100.9 660.3 100.9 671.0 99.7C677.0 99.0 683.0 91.6 689.0 89.3C693.0 87.7 697.0 86.4 701.0 85.6C709.0 84.2 717.0 83.3 725.0 82.6C733.3 81.9 741.7 81.6 750.0 80.8C766.0 79.4 782.0 76.3 798.0 74.8C811.7 73.5 825.3 72.7 839.0 71.7C851.7 70.9 864.3 70.1 877.0 69.4C893.0 68.5 909.0 67.4 925.0 66.9C941.3 66.4 957.7 66.0 974.0 65.8C995.7 65.4 1017.3 64.9 1039.0 64.9H1208.0" stroke="#ffc300" stroke-width="2.11"/><path d="M679.0 106.4C695.7 100.0 712.3 89.4 729.0 87.1C740.0 85.6 751.0 84.5 762.0 84.3C787.7 83.6 813.3 83.4 839.0 83.2C905.7 82.8 972.3 82.5 1039.0 82.3C1095.3 82.2 1151.7 82.1 1208.0 82.0" stroke="#8c8cff" stroke-width="2.64"/><path d="M679.0 106.4C690.3 103.2 701.7 97.6 713.0 96.8C725.3 95.9 737.7 95.8 750.0 95.3C779.7 94.1 809.3 92.4 839.0 91.7C872.3 90.8 905.7 90.3 939.0 89.8C972.3 89.3 1005.7 88.7 1039.0 88.6C1095.3 88.3 1151.7 88.3 1208.0 88.1" stroke="#ff96d2" stroke-width="1.94"/><path d="M679.0 106.4C686.3 105.4 693.7 104.0 701.0 103.5C717.3 102.4 733.7 101.7 750.0 101.3C779.7 100.7 809.3 100.1 839.0 100.1H1208.0" stroke="#6b5b7b" stroke-width="1.76"/><path d="M659.0 106.4C665.0 105.4 671.0 104.7 677.0 103.5C685.0 102.0 693.0 97.7 701.0 97.7H738.0C750.0 97.7 762.0 98.9 774.0 98.9C778.0 98.9 782.0 93.7 786.0 91.7C790.0 89.6 794.0 86.9 798.0 86.3C800.0 86.0 802.0 85.7 804.0 85.7C806.7 85.7 809.3 87.8 812.0 89.3C815.3 91.1 818.7 95.6 822.0 96.5C827.7 97.9 833.3 98.9 839.0 98.9H877.0C880.3 98.9 883.7 97.4 887.0 95.8C889.3 94.7 891.7 91.1 894.0 89.3C896.3 87.4 898.7 85.4 901.0 84.4C903.7 83.3 906.3 82.0 909.0 82.0C911.3 82.0 913.7 82.7 916.0 83.3C920.3 84.4 924.7 88.8 929.0 91.0C934.0 93.6 939.0 97.0 944.0 97.7C948.0 98.4 952.0 98.9 956.0 98.9C983.7 98.9 1011.3 98.8 1039.0 98.7C1095.3 98.6 1151.7 98.4 1208.0 98.3" stroke="#d2ff00" stroke-width="2.29"/><path d="M-1.0 202.7H84.5C85.5 202.7 86.5 200.9 87.5 198.8C89.0 195.7 90.5 176.5 92.0 164.2C94.2 146.4 96.3 125.7 98.5 106.4C100.7 87.1 102.8 68.1 105.0 48.6C106.2 38.1 107.3 21.6 108.5 16.8C109.3 13.5 110.2 10.1 111.0 10.1H444.0C445.0 10.1 446.0 11.3 447.0 13.0C448.3 15.2 449.7 35.3 451.0 48.6C452.7 65.3 454.3 87.1 456.0 106.4C457.7 125.7 459.3 149.7 461.0 164.2C462.7 178.6 464.3 195.4 466.0 198.8C467.0 200.9 468.0 202.7 469.0 202.7H655.0C656.0 202.7 657.0 201.5 658.0 199.8C659.3 197.6 660.7 177.0 662.0 164.2C663.8 146.6 665.7 127.7 667.5 106.4C669.0 89.0 670.5 62.0 672.0 48.6C673.7 33.8 675.3 19.0 677.0 14.9C678.0 12.4 679.0 10.1 680.0 10.1H1208.0" stroke="#8cc63f" stroke-width="1.76"/><path d="M739.0 106.4C746.3 102.3 753.7 98.0 761.0 94.1C763.7 92.6 766.3 90.3 769.0 89.9C771.7 89.4 774.3 89.1 777.0 89.1C781.0 89.1 785.0 89.7 789.0 90.5C792.0 91.1 795.0 93.2 798.0 95.3C800.0 96.7 802.0 99.5 804.0 101.3C806.0 103.1 808.0 104.7 810.0 106.4" stroke="#008c8c" stroke-width="1.76"/><path d="M139.0 106.4C144.3 101.3 149.5 91.5 154.8 91.0C159.5 90.6 164.3 90.3 169.0 90.3H206.0C208.7 90.3 211.3 84.9 214.0 82.7C216.3 80.8 218.7 77.5 221.0 77.5C224.3 77.5 227.7 78.6 231.0 79.9C233.6 80.9 236.1 85.2 238.7 87.3C241.9 90.0 245.1 93.0 248.3 94.6C251.9 96.2 255.4 98.2 259.0 98.2C263.0 98.2 267.0 95.8 271.0 94.8C275.0 93.8 279.0 92.1 283.0 92.1H301.0C305.1 92.1 309.3 91.7 313.4 91.0C315.8 90.6 318.3 86.9 320.7 84.9C323.5 82.7 326.2 78.3 329.0 78.3C331.9 78.3 334.7 78.4 337.6 78.8C340.0 79.0 342.4 83.4 344.8 86.2C347.2 89.0 349.6 93.0 352.0 95.8C354.3 98.5 356.7 101.3 359.0 103.0C361.0 104.5 363.0 106.4 365.0 106.4H429.0C431.3 106.4 433.7 93.6 436.0 91.0C438.1 88.6 440.2 86.2 442.3 86.2C447.9 86.2 453.4 89.2 459.0 89.7C465.0 90.4 471.0 91.0 477.0 91.0C483.7 91.0 490.3 90.8 497.0 90.8C499.3 90.8 501.5 92.1 503.8 93.4C505.8 94.6 507.8 99.0 509.8 100.6C511.8 102.3 513.9 104.5 515.9 104.5C518.9 104.5 522.0 104.4 525.0 104.3C527.6 104.2 530.1 102.1 532.7 100.6C535.5 99.0 538.4 96.4 541.2 94.6C544.0 92.8 546.8 91.0 549.6 89.7C552.4 88.5 555.2 87.0 558.0 86.8C563.3 86.4 568.7 86.2 574.0 86.2C590.0 86.2 606.0 86.3 622.0 86.8C627.7 86.9 633.3 90.6 639.0 93.4C644.0 95.9 649.0 102.5 654.0 103.5C662.3 105.3 670.7 106.4 679.0 106.4C686.5 106.4 693.9 103.0 701.4 98.9C703.8 97.6 706.2 93.7 708.6 91.7C711.0 89.6 713.5 86.7 715.9 86.3C723.1 85.0 730.4 85.8 737.6 84.4C739.6 84.1 741.6 79.0 743.6 77.2C745.2 75.8 746.8 73.7 748.4 73.7C750.0 73.7 751.6 74.8 753.2 76.1C754.8 77.4 756.4 83.5 758.0 86.9C759.6 90.3 761.3 94.3 762.9 96.5C764.9 99.2 767.0 101.0 769.0 102.5C770.7 103.8 772.3 105.4 774.0 105.5C788.0 106.3 802.0 106.4 816.0 106.4C818.8 106.4 821.6 102.6 824.4 100.1C827.6 97.3 830.8 91.7 834.0 89.3C837.2 86.9 840.3 83.9 843.5 83.9C860.3 83.9 877.2 84.0 894.0 84.4C896.5 84.5 898.9 85.6 901.4 86.9C903.8 88.1 906.2 93.0 908.6 95.3C911.0 97.7 913.5 100.6 915.9 101.3C917.9 102.0 920.0 102.5 922.0 102.5C924.0 102.5 926.0 100.0 928.0 97.7C930.0 95.5 932.0 90.3 934.0 86.9C936.0 83.4 938.0 79.3 940.0 77.2C941.6 75.5 943.2 73.4 944.8 73.4H953.2C954.8 73.4 956.4 76.1 958.0 78.5C959.2 80.3 960.5 85.6 961.7 86.9C963.7 88.9 965.7 90.5 967.7 90.5C971.7 90.5 975.8 89.9 979.8 89.9C982.6 89.9 985.4 91.9 988.2 92.9C991.4 94.1 994.7 96.3 997.9 96.5C1000.6 96.7 1003.3 96.8 1006.0 96.8C1008.5 96.8 1011.1 93.4 1013.6 91.7C1015.6 90.3 1017.6 87.9 1019.6 87.5C1022.4 86.8 1025.2 86.5 1028.0 86.3C1033.5 85.9 1039.1 85.5 1044.6 85.5C1055.7 85.5 1066.8 85.7 1077.9 86.2C1081.3 86.3 1084.6 90.2 1088.0 92.7C1091.4 95.3 1094.9 99.5 1098.3 101.6C1101.7 103.7 1105.1 104.8 1108.5 106.4" stroke="#b44ee0" stroke-width="1.94"/><path d="M695.0 106.4C699.1 103.1 703.3 99.9 707.4 96.5C710.2 94.1 713.1 91.1 715.9 89.3C719.1 87.2 722.3 85.2 725.5 84.4C729.5 83.5 733.6 82.6 737.6 82.6C741.7 82.6 745.9 82.8 750.0 83.3C751.9 83.5 753.8 85.3 755.7 86.9C757.8 88.5 759.9 91.8 762.0 94.1C764.3 96.6 766.7 99.1 769.0 101.3C771.0 103.2 773.0 106.4 775.0 106.4H939.0C940.1 106.4 941.3 98.2 942.4 96.8C944.8 93.8 947.2 93.4 949.6 91.7C952.8 89.3 956.1 85.4 959.3 84.4C962.5 83.5 965.8 82.6 969.0 82.6C972.6 82.6 976.2 83.2 979.8 83.9C983.0 84.5 986.2 86.2 989.4 88.1C992.2 89.8 995.1 92.9 997.9 95.3C1000.3 97.3 1002.6 99.9 1005.0 101.3C1007.5 102.9 1009.9 104.0 1012.4 105.0C1013.9 105.5 1015.5 105.9 1017.0 106.4" stroke="#ff8000" stroke-width="1.94"/><path d="M109.0 106.4C118.3 101.3 127.7 98.3 137.0 91.0C141.7 87.4 146.3 75.9 151.0 74.6C160.0 72.1 169.0 71.8 178.0 70.8C187.3 69.7 196.7 69.4 206.0 67.9C210.5 67.2 215.1 64.0 219.6 64.0C222.7 64.0 225.9 68.5 229.0 72.9C230.6 75.1 232.2 80.2 233.8 83.8C235.8 88.3 237.9 94.4 239.9 97.0C242.3 99.9 244.6 103.0 247.0 103.0C249.4 103.0 251.9 101.9 254.3 100.6C256.7 99.3 259.2 94.2 261.6 91.0C264.0 87.8 266.4 83.5 268.8 81.4C271.6 78.9 274.5 76.4 277.3 75.9C281.3 75.1 285.3 74.9 289.3 74.6C293.3 74.4 297.4 74.4 301.4 74.0C305.4 73.7 309.4 71.3 313.4 69.2C316.6 67.5 319.8 63.5 323.0 62.0C325.8 60.7 328.7 59.0 331.5 59.0C333.5 59.0 335.6 61.8 337.6 64.4C339.6 67.0 341.6 74.0 343.6 78.9C345.6 83.7 347.6 89.9 349.6 93.4C351.6 97.0 353.7 99.6 355.7 101.8C357.5 103.7 359.2 106.4 361.0 106.4H444.0C446.0 106.4 448.0 100.1 450.0 96.8C452.2 93.0 454.5 88.1 456.7 84.9C459.5 81.0 462.2 77.6 465.0 75.3C467.9 72.9 470.7 70.4 473.6 69.8C475.6 69.4 477.7 69.0 479.7 69.0C481.7 69.0 483.7 71.7 485.7 74.0C487.7 76.4 489.7 82.4 491.7 86.2C493.3 89.2 494.9 92.9 496.5 94.8C499.3 98.4 502.2 102.0 505.0 102.5C507.8 103.1 510.6 103.2 513.4 103.5C515.8 103.8 518.3 104.5 520.7 104.5C523.5 104.5 526.2 99.4 529.0 95.8C531.9 92.1 534.7 86.4 537.6 81.4C539.6 77.9 541.6 73.4 543.6 70.5C545.6 67.6 547.6 65.0 549.6 63.3C552.0 61.2 554.5 59.6 556.9 58.4C560.5 56.6 564.1 54.9 567.7 54.2C573.7 53.0 579.8 51.8 585.8 51.8C591.9 51.8 597.9 52.3 604.0 53.0C609.2 53.5 614.4 54.9 619.6 56.6C623.6 57.9 627.7 59.9 631.7 62.6C634.1 64.2 636.6 66.9 639.0 69.2C643.7 73.7 648.3 78.9 653.0 83.3C657.0 87.0 661.0 91.4 665.0 93.9C669.0 96.4 673.0 99.7 677.0 99.7H686.0C688.7 99.7 691.3 95.8 694.0 92.9C696.5 90.2 698.9 85.3 701.4 81.4C703.8 77.5 706.2 72.2 708.6 69.3C711.1 66.4 713.5 63.3 716.0 62.6C717.7 62.1 719.3 61.6 721.0 61.6C723.0 61.6 725.0 63.5 727.0 65.0C729.7 66.9 732.3 70.8 735.0 73.7C737.7 76.5 740.3 79.6 743.0 82.3C745.3 84.7 747.7 87.4 750.0 89.3C752.3 91.2 754.7 92.1 757.0 94.1C759.3 96.0 761.7 99.2 764.0 101.6C765.7 103.3 767.3 106.4 769.0 106.4H819.0C821.3 106.4 823.7 93.1 826.0 87.1C828.6 80.5 831.2 73.3 833.8 68.8C835.4 66.1 837.1 62.9 838.7 62.1C840.7 61.1 842.7 60.3 844.7 60.3C849.5 60.3 854.2 60.9 859.0 61.3C863.9 61.8 868.7 63.4 873.6 63.4C878.0 63.4 882.5 61.4 886.9 60.9C890.1 60.6 893.3 60.3 896.5 60.3C898.5 60.3 900.6 62.2 902.6 64.0C904.6 65.8 906.6 70.3 908.6 73.7C910.6 77.0 912.6 80.7 914.6 84.4C916.6 88.3 918.7 93.4 920.7 96.5C922.3 98.9 923.9 100.9 925.5 102.5C927.0 104.1 928.5 106.4 930.0 106.4C933.0 106.4 936.0 105.5 939.0 104.5C942.3 103.3 945.7 97.7 949.0 94.8C952.3 92.0 955.7 89.6 959.0 87.1C961.9 85.0 964.8 81.1 967.7 81.1C971.5 81.1 975.2 81.1 979.0 81.2C982.5 81.2 985.9 81.8 989.4 81.8C992.2 81.8 995.1 77.5 997.9 74.8C1000.7 72.1 1003.5 67.9 1006.3 65.2C1009.1 62.4 1012.0 59.4 1014.8 57.9C1018.0 56.2 1021.2 54.8 1024.4 54.3C1031.1 53.2 1037.9 52.3 1044.6 52.3C1051.4 52.3 1058.2 52.4 1065.0 52.7C1070.1 52.9 1075.3 55.5 1080.4 58.2C1084.6 60.5 1088.8 65.1 1093.0 69.7C1097.3 74.5 1101.7 82.6 1106.0 87.6C1110.3 92.6 1114.5 97.2 1118.8 100.4C1122.2 102.9 1125.6 104.4 1129.0 106.4" stroke="#00e6c3" stroke-width="1.94"/><path d="M150.0 106.4C153.9 100.8 157.8 96.7 161.7 89.5C164.0 85.3 166.3 77.4 168.6 73.1C171.3 68.0 174.1 63.7 176.8 60.7C179.1 58.1 181.4 54.6 183.7 54.4C187.5 54.1 191.2 54.2 195.0 53.9C198.6 53.6 202.2 50.7 205.8 49.6C210.4 48.1 215.0 46.1 219.6 46.1C221.9 46.1 224.2 46.8 226.5 47.7C229.3 48.7 232.2 53.2 235.0 57.2C237.0 60.0 239.0 64.9 241.0 68.1C243.8 72.6 246.7 77.0 249.5 80.1C252.7 83.6 255.8 86.8 259.0 88.6C262.3 90.5 265.5 92.8 268.8 92.8C272.4 92.8 276.1 92.5 279.7 92.1C282.9 91.8 286.1 88.8 289.3 86.2C292.5 83.5 295.8 77.8 299.0 74.0C303.0 69.3 307.0 64.1 311.0 60.8C315.0 57.5 319.0 54.2 323.0 53.0C325.8 52.1 328.7 51.1 331.5 51.1C333.9 51.1 336.4 52.6 338.8 54.2C340.8 55.5 342.8 59.9 344.8 63.3C347.2 67.2 349.6 72.2 352.0 76.5C354.4 81.0 356.9 85.7 359.3 89.7C361.7 93.7 364.1 98.4 366.5 100.6C368.9 102.8 371.3 104.5 373.7 105.4C374.8 105.9 375.9 106.4 377.0 106.4H441.0C443.7 106.4 446.3 103.4 449.0 101.6C452.3 99.3 455.7 96.6 459.0 93.4C461.9 90.7 464.7 85.8 467.6 83.8C470.0 82.1 472.4 80.7 474.8 80.1C478.0 79.3 481.3 78.7 484.5 78.7C490.0 78.7 495.5 79.1 501.0 79.1C507.2 79.1 513.3 79.0 519.5 78.9C523.5 78.7 527.5 77.9 531.5 77.1C535.5 76.4 539.6 74.7 543.6 74.0C547.6 73.4 551.7 72.9 555.7 72.7C561.8 72.3 567.9 71.9 574.0 71.9C586.0 71.9 598.0 72.0 610.0 72.2C616.0 72.3 622.0 72.8 628.0 73.5C631.7 73.9 635.3 75.3 639.0 76.5C641.7 77.4 644.3 78.6 647.0 79.6C653.0 82.0 659.0 85.0 665.0 86.9C669.0 88.1 673.0 89.9 677.0 89.9C680.3 89.9 683.7 89.8 687.0 89.5C690.2 89.3 693.4 86.7 696.6 84.4C699.0 82.8 701.4 78.6 703.8 77.2C707.0 75.4 710.2 74.3 713.4 73.7C717.4 72.9 721.5 72.1 725.5 72.1C729.5 72.1 733.6 72.2 737.6 72.4C741.6 72.6 745.6 73.1 749.6 74.2C751.6 74.8 753.7 77.4 755.7 79.6C757.7 81.8 759.7 85.5 761.7 88.1C763.7 90.7 765.7 93.2 767.7 95.3C769.7 97.5 771.8 99.5 773.8 101.3C775.9 103.1 777.9 106.4 780.0 106.4H801.0C803.7 106.4 806.3 100.3 809.0 96.8C812.3 92.4 815.7 86.2 819.0 82.3C822.3 78.4 825.7 73.8 829.0 72.4C833.0 70.8 837.0 69.9 841.0 69.4C847.0 68.5 853.0 67.6 859.0 67.6C865.1 67.6 871.2 68.5 877.3 69.4C882.1 70.0 886.9 71.1 891.7 72.4C894.9 73.3 898.2 74.3 901.4 76.0C904.6 77.7 907.8 81.0 911.0 84.4C913.4 87.0 915.9 91.3 918.3 94.1C920.7 96.8 923.1 99.4 925.5 101.3C928.0 103.4 930.5 106.4 933.0 106.4H949.0C951.2 106.4 953.5 104.7 955.7 103.5C959.7 101.4 963.7 97.6 967.7 95.3C971.7 93.0 975.8 91.5 979.8 89.3C983.8 87.1 987.9 84.2 991.9 82.0C995.9 79.8 1000.0 77.5 1004.0 76.0C1008.0 74.5 1012.0 73.3 1016.0 72.4C1020.3 71.5 1024.7 70.7 1029.0 70.3C1034.2 69.8 1039.4 69.1 1044.6 69.1C1053.1 69.1 1061.5 69.3 1070.0 69.5C1075.2 69.7 1080.3 72.1 1085.5 74.8C1089.8 77.0 1094.0 83.6 1098.3 87.6C1102.5 91.6 1106.8 96.4 1111.0 99.0C1116.1 102.3 1121.3 103.9 1126.4 106.4" stroke="#0044ff" stroke-width="2.11"/><path d="M157.0 106.4C160.9 103.2 164.7 101.2 168.6 96.8C171.3 93.7 174.1 85.5 176.8 82.7C179.1 80.3 181.4 78.2 183.7 77.5C188.3 76.1 192.9 76.5 197.5 75.1C200.3 74.3 203.0 71.5 205.8 68.8C208.5 66.3 211.3 60.3 214.0 58.5C216.3 57.0 218.7 55.4 221.0 55.4C223.7 55.4 226.3 56.7 229.0 58.2C231.4 59.6 233.8 64.6 236.2 68.1C239.0 72.2 241.9 77.6 244.7 81.4C247.5 85.0 250.2 88.9 253.0 91.0C255.9 93.2 258.7 95.8 261.6 95.8C264.7 95.8 267.9 95.3 271.0 94.8C274.3 94.3 277.6 92.6 280.9 91.0C284.5 89.2 288.1 86.7 291.7 83.8C295.7 80.4 299.8 74.5 303.8 70.5C307.8 66.5 311.9 61.8 315.9 59.6C319.9 57.4 324.0 54.8 328.0 54.8C330.3 54.8 332.7 55.0 335.0 55.4C337.5 55.7 339.9 59.2 342.4 62.0C344.8 64.7 347.2 69.0 349.6 72.9C352.4 77.4 355.2 82.9 358.0 87.3C360.4 91.2 362.9 95.8 365.3 98.2C368.1 101.0 370.9 103.1 373.7 104.5C375.5 105.3 377.2 106.4 379.0 106.4H391.0C393.0 106.4 395.0 99.4 397.0 94.8C399.3 89.5 401.7 80.7 404.0 75.3C406.0 70.6 408.0 65.7 410.0 63.3C412.3 60.4 414.7 57.2 417.0 57.2H425.0C427.2 57.2 429.5 59.9 431.7 62.0C433.1 63.4 434.6 65.6 436.0 67.9C437.3 70.0 438.6 72.2 439.9 75.3C441.6 79.3 443.3 87.0 445.0 92.0C446.3 95.8 447.7 102.5 449.0 102.5C450.3 102.5 451.7 99.8 453.0 98.2C455.9 94.8 458.7 90.4 461.6 86.2C464.4 82.0 467.2 76.2 470.0 72.9C472.3 70.1 474.7 67.6 477.0 66.2C479.5 64.7 482.0 63.1 484.5 63.0C488.5 62.7 492.5 62.6 496.5 62.6C500.5 62.6 504.6 63.8 508.6 64.7C512.6 65.6 516.7 67.5 520.7 68.7C524.7 69.8 528.7 71.6 532.7 71.7C535.5 71.8 538.2 71.9 541.0 71.9C543.9 71.9 546.7 69.7 549.6 68.1C551.6 67.0 553.7 64.6 555.7 63.8C557.7 63.1 559.7 62.2 561.7 62.2H622.0C625.2 62.2 628.4 63.6 631.6 65.0C634.1 66.0 636.5 68.4 639.0 70.5C639.7 71.1 640.3 71.8 641.0 72.4C645.0 76.3 649.0 80.6 653.0 84.4C657.0 88.3 661.0 92.9 665.0 95.3C669.0 97.7 673.0 100.7 677.0 100.7H685.7C688.5 100.7 691.2 97.1 694.0 94.1C696.5 91.4 698.9 86.1 701.4 82.0C703.8 78.1 706.2 73.2 708.6 70.0C710.6 67.4 712.6 64.3 714.6 63.4C716.2 62.5 717.9 61.8 719.5 61.8C721.5 61.8 723.5 63.5 725.5 65.2C727.5 66.9 729.5 71.3 731.5 74.8C733.5 78.4 735.6 83.3 737.6 86.9C739.6 90.4 741.6 94.0 743.6 96.5C745.6 99.0 747.6 100.8 749.6 102.5C751.2 104.0 752.9 106.4 754.5 106.4H789.0C791.7 106.4 794.3 102.0 797.0 98.7C799.7 95.4 802.3 89.4 805.0 85.2C808.0 80.5 811.0 75.0 814.0 71.7C817.0 68.5 820.0 65.1 823.0 64.0C825.7 63.0 828.3 62.1 831.0 62.1C832.0 62.1 833.0 62.3 834.0 62.6C835.6 63.0 837.1 67.0 838.7 70.0C840.3 73.1 841.9 78.7 843.5 82.0C845.1 85.4 846.7 89.6 848.3 90.5C850.7 91.9 853.1 92.7 855.5 92.9C862.7 93.6 869.8 93.9 877.0 93.9C883.5 93.9 890.0 92.9 896.5 92.9C899.7 92.9 903.0 94.1 906.2 95.3C908.6 96.2 911.0 98.5 913.4 100.1C915.8 101.8 918.3 103.9 920.7 105.0C922.1 105.6 923.6 106.4 925.0 106.4H964.0C965.2 106.4 966.5 105.6 967.7 105.0C970.5 103.6 973.4 101.4 976.2 98.9C979.4 96.1 982.6 91.7 985.8 88.1C989.8 83.6 993.9 78.7 997.9 74.8C1001.1 71.7 1004.3 68.6 1007.5 66.3C1009.9 64.7 1012.4 62.8 1014.8 62.1C1017.2 61.4 1019.6 60.7 1022.0 60.7C1027.7 60.5 1033.3 60.4 1039.0 60.4C1052.0 60.4 1064.9 60.5 1077.9 61.1C1082.1 61.3 1086.4 66.1 1090.6 69.7C1094.9 73.4 1099.1 80.3 1103.4 85.0C1107.6 89.6 1111.8 94.5 1116.0 97.8C1120.3 101.3 1124.7 103.5 1129.0 106.4" stroke="#0000ff" stroke-width="2.11"/><path d="M416.0 106.4C418.0 104.5 420.0 103.2 422.0 100.6C424.3 97.7 426.7 90.8 429.0 87.1C431.4 83.4 433.8 79.0 436.2 77.7C438.6 76.4 441.1 75.3 443.5 75.3C445.5 75.3 447.5 76.1 449.5 77.0C451.9 78.1 454.3 83.3 456.7 86.2C459.5 89.6 462.4 93.0 465.2 95.8C468.4 99.0 471.6 102.6 474.8 104.5C476.2 105.3 477.6 106.4 479.0 106.4H501.0C502.7 106.4 504.5 100.3 506.2 95.8C507.8 91.7 509.4 84.0 511.0 78.9C512.6 73.6 514.3 67.7 515.9 64.4C517.5 61.2 519.1 57.6 520.7 57.2C521.9 56.9 523.1 56.6 524.3 56.6C525.9 56.6 527.4 58.6 529.0 60.2C531.0 62.2 533.0 66.8 535.0 70.5C537.5 75.0 539.9 80.7 542.4 84.9C544.8 89.0 547.2 92.8 549.6 95.8C551.6 98.4 553.7 100.2 555.7 102.5C556.8 103.8 557.9 106.4 559.0 106.4H713.4C717.4 106.4 721.5 99.0 725.5 94.1C728.7 90.2 731.8 83.9 735.0 79.6C737.5 76.3 739.9 72.0 742.4 70.6C744.8 69.2 747.2 67.9 749.6 67.9C751.6 67.9 753.7 70.2 755.7 72.4C758.1 75.0 760.6 82.7 763.0 87.1C765.7 92.0 768.3 97.4 771.0 100.6C773.0 103.0 775.0 106.4 777.0 106.4H791.8C793.8 106.4 795.9 97.8 797.9 91.7C799.9 85.6 802.0 75.5 804.0 67.6C806.0 59.8 808.0 49.7 810.0 44.7C811.6 40.7 813.2 36.9 814.8 35.6C816.0 34.7 817.2 33.8 818.4 33.8C820.0 33.8 821.6 35.6 823.2 37.4C825.2 39.6 827.2 45.5 829.2 50.6C831.5 56.6 833.9 65.3 836.2 72.4C838.6 79.8 841.1 89.6 843.5 94.1C845.9 98.5 848.3 101.4 850.7 103.7C851.8 104.8 852.9 106.4 854.0 106.4H939.0C939.7 106.4 940.3 98.3 941.0 96.8C942.3 93.9 943.5 92.5 944.8 91.7C946.4 90.6 948.0 89.5 949.6 89.5C951.1 89.5 952.5 90.7 954.0 92.0C955.3 93.1 956.7 96.0 958.0 98.7C959.0 100.8 960.0 103.8 961.0 106.4" stroke="#a00000" stroke-width="1.94"/><path d="M107.0 106.4C112.3 104.8 117.7 104.1 123.0 101.6C127.7 99.4 132.3 93.6 137.0 88.1C141.5 82.8 146.1 70.9 150.6 67.9C153.4 66.0 156.2 64.0 159.0 64.0C162.2 64.0 165.4 64.6 168.6 65.5C171.3 66.3 174.1 76.9 176.8 82.7C179.5 88.6 182.3 97.4 185.0 100.6C187.3 103.4 189.7 106.4 192.0 106.4H211.0C213.9 106.4 216.7 101.8 219.6 96.8C221.9 92.8 224.2 75.3 226.5 71.7C228.8 68.2 231.1 65.0 233.4 65.0C234.6 65.0 235.8 65.5 237.0 66.0C239.2 66.8 241.3 69.4 243.5 70.5C246.7 72.1 249.8 74.0 253.0 74.0C257.0 74.0 261.0 72.9 265.0 71.7C268.3 70.8 271.5 66.1 274.8 65.7C277.6 65.3 280.5 65.0 283.3 65.0C285.7 65.0 288.1 69.5 290.5 72.9C292.9 76.3 295.4 82.7 297.8 87.3C300.2 91.9 302.6 97.9 305.0 100.6C307.3 103.3 309.7 106.4 312.0 106.4C315.7 106.4 319.3 106.1 323.0 105.4C325.0 105.1 327.0 100.6 329.0 97.0C331.0 93.3 333.0 85.6 335.0 81.4C337.0 77.1 339.0 71.5 341.0 70.5C343.1 69.4 345.1 68.7 347.2 68.7C349.2 68.7 351.2 71.7 353.2 74.0C355.6 76.9 358.1 83.1 360.5 87.3C362.9 91.5 365.3 96.7 367.7 99.4C370.1 102.1 372.6 104.4 375.0 105.4C376.0 105.9 377.0 106.4 378.0 106.4H439.0C441.7 106.4 444.3 100.4 447.0 95.8C449.0 92.3 451.0 84.8 453.0 81.4C455.0 78.0 457.0 74.4 459.0 73.5C461.5 72.3 463.9 71.4 466.4 71.4C468.4 71.4 470.4 72.8 472.4 74.6C474.0 76.1 475.7 82.3 477.3 87.3C478.5 91.0 479.7 97.6 480.9 100.6C481.7 102.7 482.5 104.8 483.3 105.4C483.9 105.9 484.4 106.4 485.0 106.4H497.8C499.8 106.4 501.8 101.5 503.8 98.2C505.8 95.0 507.8 89.5 509.8 86.2C511.8 82.8 513.9 79.2 515.9 77.7C517.9 76.2 519.9 74.6 521.9 74.6C523.9 74.6 525.9 76.2 527.9 77.7C529.9 79.3 532.0 83.9 534.0 87.3C536.0 90.7 538.0 95.5 540.0 98.2C542.0 101.0 544.0 103.1 546.0 104.9C546.7 105.4 547.3 106.4 548.0 106.4H553.0C553.9 106.4 554.8 105.4 555.7 104.5C557.3 102.8 558.9 97.7 560.5 93.4C562.1 89.1 563.7 82.2 565.3 77.7C566.5 74.3 567.8 70.2 569.0 68.7C570.2 67.2 571.3 65.8 572.5 65.7C574.7 65.5 576.8 65.4 579.0 65.4H622.0C625.2 65.4 628.5 67.2 631.7 69.2C634.0 70.7 636.3 75.2 638.6 78.5C641.8 83.0 645.1 89.4 648.3 92.9C651.5 96.5 654.8 99.3 658.0 101.3C661.7 103.5 665.3 106.4 669.0 106.4H713.0C715.6 106.4 718.1 101.0 720.7 98.9C723.5 96.6 726.2 93.3 729.0 92.9C731.9 92.5 734.7 92.3 737.6 92.3C740.1 92.3 742.5 92.8 745.0 93.4C747.7 94.1 750.5 97.2 753.2 98.9C756.0 100.6 758.9 102.4 761.7 103.8C763.7 104.8 765.7 106.4 767.7 106.4H791.0C793.3 106.4 795.6 104.5 797.9 102.5C799.9 100.8 802.0 95.3 804.0 91.7C806.0 88.1 808.0 83.2 810.0 80.8C812.0 78.4 814.0 75.4 816.0 75.4C818.0 75.4 820.0 76.2 822.0 77.2C824.0 78.2 826.0 84.4 828.0 86.9C830.0 89.3 832.0 92.9 834.0 92.9H843.0H850.7C852.3 92.9 853.9 88.9 855.5 86.9C857.1 84.7 858.8 80.3 860.4 80.2C863.3 80.0 866.1 79.9 869.0 79.9H885.7C887.3 79.9 888.9 83.3 890.5 85.6C891.7 87.4 892.8 91.3 894.0 92.3C897.3 94.9 900.5 94.8 903.8 96.8C906.2 98.2 908.6 101.0 911.0 102.5C913.4 104.1 915.9 106.4 918.3 106.4H932.0C933.9 106.4 935.7 103.7 937.6 102.5C940.0 101.0 942.4 99.1 944.8 98.3C946.9 97.6 948.9 96.8 951.0 96.8H955.7C956.9 96.8 958.1 92.2 959.3 89.3C960.5 86.3 961.7 80.9 962.9 78.5C964.1 76.0 965.3 73.8 966.5 73.0C967.7 72.2 968.8 71.5 970.0 71.5H978.6C980.2 71.5 981.8 72.9 983.4 74.2C985.0 75.5 986.6 79.2 988.2 82.0C989.8 84.9 991.4 88.7 993.0 91.7C994.6 94.7 996.3 98.2 997.9 100.1C999.5 102.0 1001.1 103.9 1002.7 104.5C1004.1 105.0 1005.6 105.4 1007.0 105.4C1013.6 105.4 1020.2 105.0 1026.8 103.7C1028.4 103.4 1030.1 99.3 1031.7 96.5C1033.3 93.8 1034.9 90.3 1036.5 86.9C1037.5 84.7 1038.5 81.7 1039.5 80.0C1042.9 74.2 1046.3 67.6 1049.7 67.1C1052.8 66.6 1055.9 66.3 1059.0 66.3H1080.4C1083.8 66.3 1087.2 71.2 1090.6 74.8C1094.0 78.5 1097.5 85.6 1100.9 90.0C1104.3 94.4 1107.6 98.9 1111.0 101.6C1113.6 103.6 1116.2 104.8 1118.8 106.4" stroke="#ff0000" stroke-width="2.11"/><path d="M167.0 106.4C169.0 98.5 171.0 90.3 173.0 82.7C174.3 77.9 175.5 71.9 176.8 68.8C178.9 63.9 180.9 60.8 183.0 58.2C185.5 55.1 188.1 51.0 190.6 51.0C192.9 51.0 195.2 52.8 197.5 54.4C200.3 56.3 203.0 60.7 205.8 65.0C208.5 69.2 211.3 78.0 214.0 81.4C216.5 84.5 219.1 87.1 221.6 88.1C225.4 89.7 229.2 89.5 233.0 91.0C234.0 91.4 235.0 92.1 236.0 92.9C238.0 94.6 240.0 100.0 242.0 100.6C244.0 101.3 246.0 101.8 248.0 101.8C249.7 101.8 251.3 96.9 253.0 93.4C254.7 89.9 256.3 81.4 258.0 78.9C260.0 75.8 262.0 72.9 264.0 72.9C265.7 72.9 267.3 75.5 269.0 77.7C270.5 79.7 272.1 85.7 273.6 87.3C275.4 89.2 277.2 91.0 279.0 91.0C281.7 91.0 284.3 90.6 287.0 89.7C288.6 89.3 290.1 85.6 291.7 81.4C292.7 78.7 293.7 70.3 294.7 66.9C296.1 62.0 297.6 57.6 299.0 55.9C300.6 54.1 302.2 52.4 303.8 52.4C305.8 52.4 307.8 54.6 309.8 56.6C311.8 58.6 313.9 63.2 315.9 66.9C317.9 70.6 319.9 75.9 321.9 78.9C323.9 81.9 326.0 84.5 328.0 86.2C331.2 88.9 334.4 90.4 337.6 92.1C340.0 93.5 342.4 94.4 344.8 95.8C347.2 97.2 349.6 100.6 352.0 100.6C353.6 100.6 355.3 98.0 356.9 95.8C358.5 93.7 360.1 88.3 361.7 86.2C363.3 84.0 364.9 81.4 366.5 81.4C368.0 81.4 369.5 84.5 371.0 87.1C372.7 90.0 374.3 97.5 376.0 100.6C377.3 103.1 378.7 106.4 380.0 106.4H429.0C430.0 106.4 431.0 89.8 432.0 87.1C433.3 83.6 434.7 81.5 436.0 80.7C438.5 79.3 441.0 78.3 443.5 78.3C445.9 78.3 448.3 80.6 450.7 82.5C452.7 84.1 454.7 87.9 456.7 89.7C459.5 92.3 462.4 95.8 465.2 95.8C469.8 95.8 474.4 93.9 479.0 93.9H499.0C504.0 93.9 509.0 93.2 514.0 92.0C515.8 91.5 517.7 89.6 519.5 87.3C521.5 84.9 523.5 78.7 525.5 74.0C527.5 69.4 529.5 63.0 531.5 59.6C533.1 56.8 534.8 53.4 536.4 53.0C537.6 52.6 538.8 52.4 540.0 52.4C541.6 52.4 543.2 54.9 544.8 57.2C546.4 59.5 548.0 65.1 549.6 69.2C551.2 73.5 552.9 79.6 554.5 82.5C556.7 86.4 558.8 90.3 561.0 91.0C563.2 91.7 565.5 91.6 567.7 92.1C569.7 92.6 571.7 94.5 573.7 94.6C582.1 94.8 590.6 94.8 599.0 94.8C612.3 95.0 625.7 95.0 639.0 95.2C645.7 95.4 652.3 97.0 659.0 97.7C665.7 98.5 672.3 99.5 679.0 99.7C692.7 100.0 706.3 100.1 720.0 100.1H737.6C740.1 100.1 742.5 98.7 745.0 96.8C746.7 95.5 748.3 88.7 750.0 87.1C751.9 85.4 753.8 84.1 755.7 83.8C757.7 83.5 759.7 83.3 761.7 83.2C771.7 83.1 781.8 83.2 791.8 83.0C793.8 83.0 795.9 79.0 797.9 77.2C799.9 75.5 802.0 72.4 804.0 72.4C806.0 72.4 808.0 73.6 810.0 74.8C812.3 76.2 814.7 81.0 817.0 83.3C819.5 85.7 821.9 89.3 824.4 89.3H829.0C831.4 89.3 833.8 98.4 836.2 100.1C838.6 101.9 841.1 103.4 843.5 103.5C846.3 103.6 849.2 103.7 852.0 103.7C854.3 103.7 856.7 99.3 859.0 98.9C862.3 98.3 865.7 98.0 869.0 98.0H883.3C885.2 98.0 887.1 99.6 889.0 100.6C891.0 101.7 893.0 103.4 895.0 104.5C896.3 105.2 897.7 106.4 899.0 106.4H939.0C943.0 106.4 947.0 99.8 951.0 98.7C957.0 97.1 963.0 97.5 969.0 95.8C972.3 94.8 975.7 90.7 979.0 87.1C980.9 85.1 982.7 82.0 984.6 79.6C986.2 77.6 987.8 74.1 989.4 73.9C991.4 73.5 993.5 73.4 995.5 73.4C997.5 73.4 999.5 74.9 1001.5 76.0C1003.5 77.1 1005.5 79.4 1007.5 80.8C1009.9 82.6 1012.4 85.0 1014.8 85.6C1017.2 86.3 1019.6 86.5 1022.0 86.9C1026.1 87.5 1030.3 87.9 1034.4 88.9C1037.8 89.7 1041.2 92.4 1044.6 92.7C1053.1 93.6 1061.5 93.3 1070.0 94.0C1075.2 94.4 1080.3 95.3 1085.5 96.6C1090.6 97.8 1095.8 100.6 1100.9 102.9C1103.3 104.0 1105.6 105.2 1108.0 106.4" stroke="#ff0000" stroke-width="2.11"/><path d="M-1.0 106.4H767.7C770.5 106.4 773.2 99.5 776.0 96.5C779.3 92.9 782.5 89.7 785.8 86.9C788.5 84.4 791.3 80.9 794.0 80.2C796.5 79.6 799.0 79.1 801.5 79.1C803.5 79.1 805.5 82.1 807.5 84.4C809.5 86.9 811.6 92.1 813.6 95.3C815.6 98.5 817.6 102.1 819.6 103.7C821.1 105.0 822.5 106.4 824.0 106.4H885.0C886.4 106.4 887.9 105.7 889.3 105.0C891.7 103.8 894.1 99.3 896.5 96.5C898.9 93.7 901.4 89.6 903.8 88.1C906.2 86.6 908.6 85.0 911.0 85.0C913.4 85.0 915.9 85.2 918.3 85.4C920.7 85.6 923.1 87.7 925.5 89.3C927.9 90.8 930.3 93.3 932.7 95.3C935.1 97.4 937.6 99.7 940.0 101.3C942.4 103.0 944.8 104.6 947.2 105.5C948.1 105.9 949.1 106.4 950.0 106.4H1208.0" stroke="#000000" stroke-width="2.29"/><path d="M-1.0 106.4H102.0C109.0 106.4 116.0 104.9 123.0 103.5C127.7 102.6 132.3 100.1 137.0 98.7C142.9 96.9 148.9 93.9 154.8 93.9H168.6C171.7 93.9 174.9 97.0 178.0 98.7C182.7 101.2 187.3 106.4 192.0 106.4H214.0C218.2 106.4 222.3 103.0 226.5 102.1C230.7 101.1 234.8 99.9 239.0 99.9C240.0 99.9 241.0 101.7 242.0 102.5C243.7 103.9 245.3 106.4 247.0 106.4C249.7 106.4 252.3 105.7 255.0 105.0C259.6 103.7 264.2 96.7 268.8 95.8C272.8 95.0 276.9 94.4 280.9 94.4C284.3 94.4 287.6 95.8 291.0 97.0C294.5 98.2 297.9 101.0 301.4 102.5C304.6 104.0 307.8 106.4 311.0 106.4H325.0C329.2 106.4 333.4 103.8 337.6 103.0C340.7 102.5 343.9 101.8 347.0 101.8C349.7 101.8 352.3 104.1 355.0 104.9C357.2 105.5 359.5 106.4 361.7 106.4H549.0C551.0 106.4 553.0 105.2 555.0 104.5C559.2 103.0 563.5 99.9 567.7 99.4C573.7 98.7 579.8 98.2 585.8 98.2C593.9 98.2 601.9 98.4 610.0 98.7C619.7 99.0 629.3 100.5 639.0 101.8C645.7 102.7 652.3 104.6 659.0 105.4C662.3 105.8 665.7 106.4 669.0 106.4H735.0C737.5 106.4 739.9 103.5 742.4 101.3C744.8 99.1 747.2 94.9 749.6 91.7C751.6 88.9 753.7 85.1 755.7 83.2C757.7 81.4 759.7 79.4 761.7 79.1C765.7 78.3 769.8 77.8 773.8 77.8C777.8 77.8 781.8 78.1 785.8 78.5C789.8 78.8 793.9 79.5 797.9 80.8C800.7 81.7 803.5 84.8 806.3 86.9C809.1 88.9 812.0 91.7 814.8 92.9C818.0 94.3 821.2 95.7 824.4 95.9C829.3 96.3 834.1 96.5 839.0 96.5C847.7 96.5 856.3 96.1 865.0 95.9C873.0 95.7 881.0 95.7 889.0 95.3C893.1 95.1 897.3 94.1 901.4 92.9C904.6 92.0 907.8 89.5 911.0 88.1C914.2 86.7 917.5 85.0 920.7 84.4C924.3 83.8 927.9 83.2 931.5 83.2C935.1 83.2 938.8 83.8 942.4 84.4C945.6 85.0 948.8 86.6 952.0 88.1C955.2 89.6 958.5 92.1 961.7 94.1C964.9 96.1 968.1 98.3 971.3 100.1C974.1 101.7 977.0 103.6 979.8 104.5C982.5 105.4 985.3 106.4 988.0 106.4H1024.4C1027.6 106.4 1030.8 105.0 1034.0 103.7C1035.8 103.0 1037.7 100.9 1039.5 100.4C1043.8 99.2 1048.0 98.3 1052.3 98.3H1070.0C1076.9 98.3 1083.7 100.1 1090.6 101.6C1095.7 102.7 1100.9 106.4 1106.0 106.4H1208.0" stroke="#00ff00" stroke-width="2.29"/></svg>
<div class="abs" style="left:1px;top:1505px;width:56px;height:209px;overflow:hidden"><div class="abs pf" style="left:0;width:51px;top:-2.9px;text-align:right;font-size:20px;letter-spacing:1.2px;line-height:28px;color:#000;white-space:nowrap">1</div></div>
<div class="abs" style="left:1px;top:1505px;width:56px;height:209px;overflow:hidden"><div class="abs pf" style="left:0;width:51px;top:45.2px;text-align:right;font-size:20px;letter-spacing:1.2px;line-height:28px;color:#000;white-space:nowrap">0.5</div></div>
<div class="abs" style="left:1px;top:1505px;width:56px;height:209px;overflow:hidden"><div class="abs pf" style="left:0;width:51px;top:93.4px;text-align:right;font-size:20px;letter-spacing:1.2px;line-height:28px;color:#000;white-space:nowrap">0</div></div>
<div class="abs" style="left:1px;top:1505px;width:56px;height:209px;overflow:hidden"><div class="abs pf" style="left:0;width:51px;top:141.6px;text-align:right;font-size:20px;letter-spacing:1.2px;line-height:28px;color:#000;white-space:nowrap">-0.5</div></div>
<div class="abs" style="left:1px;top:1505px;width:56px;height:209px;overflow:hidden"><div class="abs pf" style="left:0;width:51px;top:189.7px;text-align:right;font-size:20px;letter-spacing:1.2px;line-height:28px;color:#000;white-space:nowrap">-1</div></div>
</div></div></body></html>
